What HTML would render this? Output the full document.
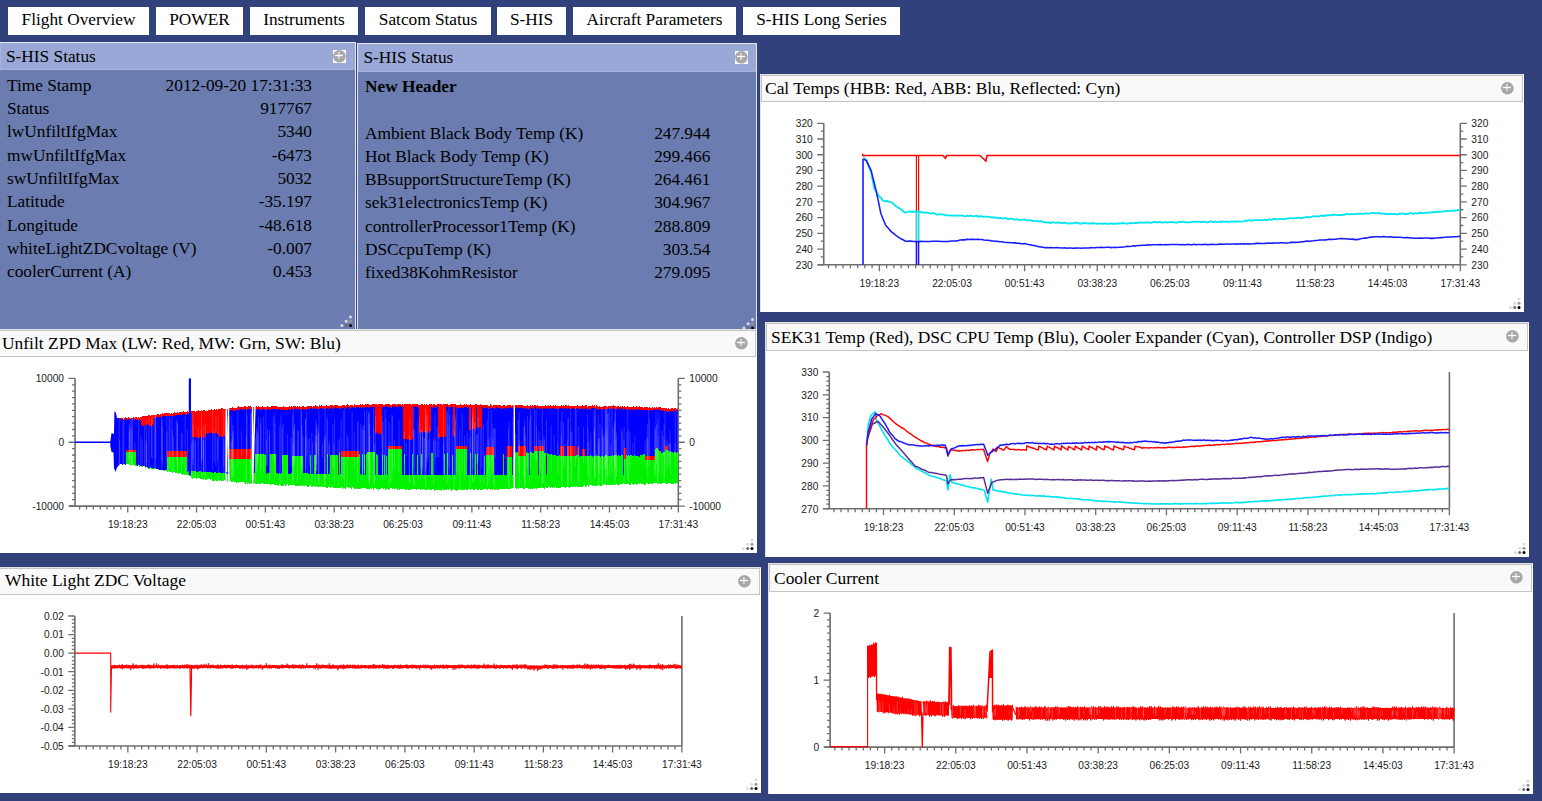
<!DOCTYPE html>
<html><head><meta charset="utf-8"><style>
html,body{margin:0;padding:0;width:1542px;height:801px;overflow:hidden;background:#31417b}
svg text{white-space:pre}
</style></head><body>
<svg width="1542" height="801" viewBox="0 0 1542 801" style="position:absolute;left:0;top:0"><rect x="0" y="0" width="1542" height="801" fill="#31417b" /><rect x="8" y="7" width="141" height="28" fill="#fff" /><text x="78.5" y="25.2" font-family="Liberation Serif" font-size="17.3" text-anchor="middle" fill="#000">Flight Overview</text><rect x="156" y="7" width="87" height="28" fill="#fff" /><text x="199.5" y="25.2" font-family="Liberation Serif" font-size="17.3" text-anchor="middle" fill="#000">POWER</text><rect x="250" y="7" width="108" height="28" fill="#fff" /><text x="304.0" y="25.2" font-family="Liberation Serif" font-size="17.3" text-anchor="middle" fill="#000">Instruments</text><rect x="365" y="7" width="126" height="28" fill="#fff" /><text x="428.0" y="25.2" font-family="Liberation Serif" font-size="17.3" text-anchor="middle" fill="#000">Satcom Status</text><rect x="497" y="7" width="69" height="28" fill="#fff" /><text x="531.5" y="25.2" font-family="Liberation Serif" font-size="17.3" text-anchor="middle" fill="#000">S-HIS</text><rect x="573" y="7" width="163" height="28" fill="#fff" /><text x="654.5" y="25.2" font-family="Liberation Serif" font-size="17.3" text-anchor="middle" fill="#000">Aircraft Parameters</text><rect x="743" y="7" width="157" height="28" fill="#fff" /><text x="821.5" y="25.2" font-family="Liberation Serif" font-size="17.3" text-anchor="middle" fill="#000">S-HIS Long Series</text><rect x="0" y="42" width="356" height="287" fill="#e4e6ee" /><rect x="0" y="43" width="355" height="286" fill="#6b7db0" /><rect x="0" y="43" width="355" height="27" fill="#a6b2de" /><rect x="1" y="43" width="354" height="26" fill="#9aa8d8" /><text x="6" y="62" font-family="Liberation Serif" font-size="17.3" text-anchor="start" fill="#000">S-HIS Status</text><g transform="translate(333,50)"><rect width="13" height="13" fill="#fff"/><circle cx="6.4" cy="6.3" r="6.3" fill="#a8a8a8"/><path d="M5.9 1.9V9" stroke="#dadada" stroke-width="1.8"/><path d="M2 5.5H10" stroke="#fff" stroke-width="1.3"/></g><text x="7" y="90.8" font-family="Liberation Serif" font-size="17.3" text-anchor="start" fill="#000">Time Stamp</text><text x="312" y="90.8" font-family="Liberation Serif" font-size="17.3" text-anchor="end" fill="#000">2012-09-20 17:31:33</text><text x="7" y="114.1" font-family="Liberation Serif" font-size="17.3" text-anchor="start" fill="#000">Status</text><text x="312" y="114.1" font-family="Liberation Serif" font-size="17.3" text-anchor="end" fill="#000">917767</text><text x="7" y="137.4" font-family="Liberation Serif" font-size="17.3" text-anchor="start" fill="#000">lwUnfiltIfgMax</text><text x="312" y="137.4" font-family="Liberation Serif" font-size="17.3" text-anchor="end" fill="#000">5340</text><text x="7" y="160.7" font-family="Liberation Serif" font-size="17.3" text-anchor="start" fill="#000">mwUnfiltIfgMax</text><text x="312" y="160.7" font-family="Liberation Serif" font-size="17.3" text-anchor="end" fill="#000">-6473</text><text x="7" y="184.0" font-family="Liberation Serif" font-size="17.3" text-anchor="start" fill="#000">swUnfiltIfgMax</text><text x="312" y="184.0" font-family="Liberation Serif" font-size="17.3" text-anchor="end" fill="#000">5032</text><text x="7" y="207.3" font-family="Liberation Serif" font-size="17.3" text-anchor="start" fill="#000">Latitude</text><text x="312" y="207.3" font-family="Liberation Serif" font-size="17.3" text-anchor="end" fill="#000">-35.197</text><text x="7" y="230.60000000000002" font-family="Liberation Serif" font-size="17.3" text-anchor="start" fill="#000">Longitude</text><text x="312" y="230.60000000000002" font-family="Liberation Serif" font-size="17.3" text-anchor="end" fill="#000">-48.618</text><text x="7" y="253.89999999999998" font-family="Liberation Serif" font-size="17.3" text-anchor="start" fill="#000">whiteLightZDCvoltage (V)</text><text x="312" y="253.89999999999998" font-family="Liberation Serif" font-size="17.3" text-anchor="end" fill="#000">-0.007</text><text x="7" y="277.2" font-family="Liberation Serif" font-size="17.3" text-anchor="start" fill="#000">coolerCurrent (A)</text><text x="312" y="277.2" font-family="Liberation Serif" font-size="17.3" text-anchor="end" fill="#000">0.453</text><circle cx="350.5" cy="325.5" r="1.5" fill="#000"/><circle cx="346.2" cy="325.5" r="1.5" fill="#6a6a6a"/><circle cx="341.9" cy="325.5" r="1.5" fill="#dcdcdc"/><circle cx="350.5" cy="321.2" r="1.5" fill="#9a9a9a"/><circle cx="346.2" cy="321.2" r="1.5" fill="#dcdcdc"/><circle cx="350.5" cy="316.9" r="1.5" fill="#dcdcdc"/><rect x="357" y="43" width="400" height="286" fill="#e4e6ee" /><rect x="358" y="44" width="398" height="285" fill="#6b7db0" /><rect x="358" y="44" width="398" height="28" fill="#a6b2de" /><rect x="359" y="44" width="397" height="27" fill="#9aa8d8" /><text x="363.5" y="63" font-family="Liberation Serif" font-size="17.3" text-anchor="start" fill="#000">S-HIS Status</text><g transform="translate(735,51)"><rect width="13" height="13" fill="#fff"/><circle cx="6.4" cy="6.3" r="6.3" fill="#a8a8a8"/><path d="M5.9 1.9V9" stroke="#dadada" stroke-width="1.8"/><path d="M2 5.5H10" stroke="#fff" stroke-width="1.3"/></g><text x="365" y="91.7" font-family="Liberation Serif" font-size="17.3" text-anchor="start" fill="#000" font-weight="bold">New Header</text><text x="365" y="138.7" font-family="Liberation Serif" font-size="17.3" text-anchor="start" fill="#000">Ambient Black Body Temp (K)</text><text x="710.3" y="138.7" font-family="Liberation Serif" font-size="17.3" text-anchor="end" fill="#000">247.944</text><text x="365" y="161.92999999999998" font-family="Liberation Serif" font-size="17.3" text-anchor="start" fill="#000">Hot Black Body Temp (K)</text><text x="710.3" y="161.92999999999998" font-family="Liberation Serif" font-size="17.3" text-anchor="end" fill="#000">299.466</text><text x="365" y="185.16" font-family="Liberation Serif" font-size="17.3" text-anchor="start" fill="#000">BBsupportStructureTemp (K)</text><text x="710.3" y="185.16" font-family="Liberation Serif" font-size="17.3" text-anchor="end" fill="#000">264.461</text><text x="365" y="208.39" font-family="Liberation Serif" font-size="17.3" text-anchor="start" fill="#000">sek31electronicsTemp (K)</text><text x="710.3" y="208.39" font-family="Liberation Serif" font-size="17.3" text-anchor="end" fill="#000">304.967</text><text x="365" y="231.62" font-family="Liberation Serif" font-size="17.3" text-anchor="start" fill="#000">controllerProcessor1Temp (K)</text><text x="710.3" y="231.62" font-family="Liberation Serif" font-size="17.3" text-anchor="end" fill="#000">288.809</text><text x="365" y="254.85" font-family="Liberation Serif" font-size="17.3" text-anchor="start" fill="#000">DSCcpuTemp (K)</text><text x="710.3" y="254.85" font-family="Liberation Serif" font-size="17.3" text-anchor="end" fill="#000">303.54</text><text x="365" y="278.08" font-family="Liberation Serif" font-size="17.3" text-anchor="start" fill="#000">fixed38KohmResistor</text><text x="710.3" y="278.08" font-family="Liberation Serif" font-size="17.3" text-anchor="end" fill="#000">279.095</text><circle cx="752.5" cy="328" r="1.5" fill="#000"/><circle cx="748.2" cy="328" r="1.5" fill="#6a6a6a"/><circle cx="743.9" cy="328" r="1.5" fill="#dcdcdc"/><circle cx="752.5" cy="323.7" r="1.5" fill="#9a9a9a"/><circle cx="748.2" cy="323.7" r="1.5" fill="#dcdcdc"/><circle cx="752.5" cy="319.4" r="1.5" fill="#dcdcdc"/><rect x="760" y="74" width="764" height="238" fill="#e2e2e2" /><rect x="761" y="75" width="763" height="237" fill="#fff" /><rect x="761" y="75" width="762" height="27" fill="#c4c4c4" /><rect x="762" y="76" width="760" height="25" fill="#f9f9f9" /><text x="765" y="94" font-family="Liberation Serif" font-size="17.45" text-anchor="start" fill="#000">Cal Temps (HBB: Red, ABB: Blu, Reflected: Cyn)</text><g transform="translate(1501,82)"><rect width="13" height="13" fill="#fff"/><circle cx="6.4" cy="6.3" r="6.3" fill="#a8a8a8"/><path d="M5.9 1.9V9" stroke="#dadada" stroke-width="1.8"/><path d="M2 5.5H10" stroke="#fff" stroke-width="1.3"/></g><circle cx="1519.0" cy="307.5" r="1.5" fill="#000"/><circle cx="1514.7" cy="307.5" r="1.5" fill="#6a6a6a"/><circle cx="1510.4" cy="307.5" r="1.5" fill="#dcdcdc"/><circle cx="1519.0" cy="303.2" r="1.5" fill="#9a9a9a"/><circle cx="1514.7" cy="303.2" r="1.5" fill="#dcdcdc"/><circle cx="1519.0" cy="298.9" r="1.5" fill="#dcdcdc"/><rect x="-2" y="329" width="759" height="224" fill="#e2e2e2" /><rect x="-1" y="330" width="758" height="223" fill="#fff" /><rect x="-1" y="330" width="757" height="27" fill="#c4c4c4" /><rect x="0" y="331" width="755" height="25" fill="#f9f9f9" /><text x="2" y="348.5" font-family="Liberation Serif" font-size="17.45" text-anchor="start" fill="#000">Unfilt ZPD Max (LW: Red, MW: Grn, SW: Blu)</text><g transform="translate(735,337)"><rect width="13" height="13" fill="#fff"/><circle cx="6.4" cy="6.3" r="6.3" fill="#a8a8a8"/><path d="M5.9 1.9V9" stroke="#dadada" stroke-width="1.8"/><path d="M2 5.5H10" stroke="#fff" stroke-width="1.3"/></g><circle cx="752.0" cy="548.5" r="1.5" fill="#000"/><circle cx="747.7" cy="548.5" r="1.5" fill="#6a6a6a"/><circle cx="743.4" cy="548.5" r="1.5" fill="#dcdcdc"/><circle cx="752.0" cy="544.2" r="1.5" fill="#9a9a9a"/><circle cx="747.7" cy="544.2" r="1.5" fill="#dcdcdc"/><circle cx="752.0" cy="539.9" r="1.5" fill="#dcdcdc"/><rect x="765" y="322" width="764" height="235" fill="#e2e2e2" /><rect x="766" y="323" width="763" height="234" fill="#fff" /><rect x="766" y="323" width="762" height="28" fill="#c4c4c4" /><rect x="767" y="324" width="760" height="26" fill="#f9f9f9" /><text x="771" y="342.5" font-family="Liberation Serif" font-size="17.45" text-anchor="start" fill="#000">SEK31 Temp (Red), DSC CPU Temp (Blu), Cooler Expander (Cyan), Controller DSP (Indigo)</text><g transform="translate(1506,330)"><rect width="13" height="13" fill="#fff"/><circle cx="6.4" cy="6.3" r="6.3" fill="#a8a8a8"/><path d="M5.9 1.9V9" stroke="#dadada" stroke-width="1.8"/><path d="M2 5.5H10" stroke="#fff" stroke-width="1.3"/></g><circle cx="1524.0" cy="552.5" r="1.5" fill="#000"/><circle cx="1519.7" cy="552.5" r="1.5" fill="#6a6a6a"/><circle cx="1515.4" cy="552.5" r="1.5" fill="#dcdcdc"/><circle cx="1524.0" cy="548.2" r="1.5" fill="#9a9a9a"/><circle cx="1519.7" cy="548.2" r="1.5" fill="#dcdcdc"/><circle cx="1524.0" cy="543.9" r="1.5" fill="#dcdcdc"/><rect x="-2" y="567" width="763" height="226" fill="#e2e2e2" /><rect x="-1" y="568" width="762" height="225" fill="#fff" /><rect x="-1" y="568" width="761" height="27" fill="#c4c4c4" /><rect x="0" y="569" width="759" height="25" fill="#f9f9f9" /><text x="5" y="586.4" font-family="Liberation Serif" font-size="17.45" text-anchor="start" fill="#000">White Light ZDC Voltage</text><g transform="translate(738,575)"><rect width="13" height="13" fill="#fff"/><circle cx="6.4" cy="6.3" r="6.3" fill="#a8a8a8"/><path d="M5.9 1.9V9" stroke="#dadada" stroke-width="1.8"/><path d="M2 5.5H10" stroke="#fff" stroke-width="1.3"/></g><circle cx="756.0" cy="788.5" r="1.5" fill="#000"/><circle cx="751.7" cy="788.5" r="1.5" fill="#6a6a6a"/><circle cx="747.4" cy="788.5" r="1.5" fill="#dcdcdc"/><circle cx="756.0" cy="784.2" r="1.5" fill="#9a9a9a"/><circle cx="751.7" cy="784.2" r="1.5" fill="#dcdcdc"/><circle cx="756.0" cy="779.9" r="1.5" fill="#dcdcdc"/><rect x="768" y="563" width="765" height="231" fill="#e2e2e2" /><rect x="769" y="564" width="764" height="230" fill="#fff" /><rect x="769" y="564" width="763" height="28" fill="#c4c4c4" /><rect x="770" y="565" width="761" height="26" fill="#f9f9f9" /><text x="774" y="584" font-family="Liberation Serif" font-size="17.45" text-anchor="start" fill="#000">Cooler Current</text><g transform="translate(1510,571)"><rect width="13" height="13" fill="#fff"/><circle cx="6.4" cy="6.3" r="6.3" fill="#a8a8a8"/><path d="M5.9 1.9V9" stroke="#dadada" stroke-width="1.8"/><path d="M2 5.5H10" stroke="#fff" stroke-width="1.3"/></g><circle cx="1528.0" cy="789.5" r="1.5" fill="#000"/><circle cx="1523.7" cy="789.5" r="1.5" fill="#6a6a6a"/><circle cx="1519.4" cy="789.5" r="1.5" fill="#dcdcdc"/><circle cx="1528.0" cy="785.2" r="1.5" fill="#9a9a9a"/><circle cx="1523.7" cy="785.2" r="1.5" fill="#dcdcdc"/><circle cx="1528.0" cy="780.9" r="1.5" fill="#dcdcdc"/><g font-family="Liberation Sans" font-size="10.2" fill="#1a1a1a"><path d="M823.75 123.3V264.8" stroke="#6e6e6e" stroke-width="1.6" fill="none"/><path d="M817.25 264.80H823.75M817.25 249.08H823.75M817.25 233.36H823.75M817.25 217.63H823.75M817.25 201.91H823.75M817.25 186.19H823.75M817.25 170.47H823.75M817.25 154.74H823.75M817.25 139.02H823.75M817.25 123.30H823.75M820.75 256.94H823.75M820.75 241.22H823.75M820.75 225.49H823.75M820.75 209.77H823.75M820.75 194.05H823.75M820.75 178.33H823.75M820.75 162.61H823.75M820.75 146.88H823.75M820.75 131.16H823.75M1460.3 264.80H1466.8M1460.3 249.08H1466.8M1460.3 233.36H1466.8M1460.3 217.63H1466.8M1460.3 201.91H1466.8M1460.3 186.19H1466.8M1460.3 170.47H1466.8M1460.3 154.74H1466.8M1460.3 139.02H1466.8M1460.3 123.30H1466.8M1460.3 256.94H1463.3M1460.3 241.22H1463.3M1460.3 225.49H1463.3M1460.3 209.77H1463.3M1460.3 194.05H1463.3M1460.3 178.33H1463.3M1460.3 162.61H1463.3M1460.3 146.88H1463.3M1460.3 131.16H1463.3" stroke="#6e6e6e" stroke-width="1.3" fill="none"/><path d="M1460.3 123.3V264.8" stroke="#6e6e6e" stroke-width="1.6" fill="none"/><path d="M817.75 264.8H1460.3" stroke="#6e6e6e" stroke-width="1.6" fill="none"/><path d="M828.54 264.8V268.3M835.80 264.8V268.3M843.07 264.8V268.3M850.33 264.8V268.3M857.59 264.8V268.3M864.85 264.8V268.3M872.11 264.8V268.3M879.37 264.8V271.3M886.64 264.8V268.3M893.90 264.8V268.3M901.16 264.8V268.3M908.42 264.8V268.3M915.68 264.8V268.3M922.94 264.8V268.3M930.20 264.8V268.3M937.47 264.8V268.3M944.73 264.8V268.3M951.99 264.8V271.3M959.25 264.8V268.3M966.51 264.8V268.3M973.77 264.8V268.3M981.04 264.8V268.3M988.30 264.8V268.3M995.56 264.8V268.3M1002.82 264.8V268.3M1010.08 264.8V268.3M1017.34 264.8V268.3M1024.61 264.8V271.3M1031.87 264.8V268.3M1039.13 264.8V268.3M1046.39 264.8V268.3M1053.65 264.8V268.3M1060.91 264.8V268.3M1068.17 264.8V268.3M1075.44 264.8V268.3M1082.70 264.8V268.3M1089.96 264.8V268.3M1097.22 264.8V271.3M1104.48 264.8V268.3M1111.74 264.8V268.3M1119.01 264.8V268.3M1126.27 264.8V268.3M1133.53 264.8V268.3M1140.79 264.8V268.3M1148.05 264.8V268.3M1155.31 264.8V268.3M1162.58 264.8V268.3M1169.84 264.8V271.3M1177.10 264.8V268.3M1184.36 264.8V268.3M1191.62 264.8V268.3M1198.88 264.8V268.3M1206.14 264.8V268.3M1213.41 264.8V268.3M1220.67 264.8V268.3M1227.93 264.8V268.3M1235.19 264.8V268.3M1242.45 264.8V271.3M1249.71 264.8V268.3M1256.98 264.8V268.3M1264.24 264.8V268.3M1271.50 264.8V268.3M1278.76 264.8V268.3M1286.02 264.8V268.3M1293.28 264.8V268.3M1300.55 264.8V268.3M1307.81 264.8V268.3M1315.07 264.8V271.3M1322.33 264.8V268.3M1329.59 264.8V268.3M1336.85 264.8V268.3M1344.11 264.8V268.3M1351.38 264.8V268.3M1358.64 264.8V268.3M1365.90 264.8V268.3M1373.16 264.8V268.3M1380.42 264.8V268.3M1387.68 264.8V271.3M1394.95 264.8V268.3M1402.21 264.8V268.3M1409.47 264.8V268.3M1416.73 264.8V268.3M1423.99 264.8V268.3M1431.25 264.8V268.3M1438.52 264.8V268.3M1445.78 264.8V268.3M1453.04 264.8V268.3M1460.30 264.8V271.3" stroke="#6e6e6e" stroke-width="1.3" fill="none"/><text x="812.75" y="268.60" text-anchor="end">230</text><text x="1471.3" y="268.60">230</text><text x="812.75" y="252.88" text-anchor="end">240</text><text x="1471.3" y="252.88">240</text><text x="812.75" y="237.16" text-anchor="end">250</text><text x="1471.3" y="237.16">250</text><text x="812.75" y="221.43" text-anchor="end">260</text><text x="1471.3" y="221.43">260</text><text x="812.75" y="205.71" text-anchor="end">270</text><text x="1471.3" y="205.71">270</text><text x="812.75" y="189.99" text-anchor="end">280</text><text x="1471.3" y="189.99">280</text><text x="812.75" y="174.27" text-anchor="end">290</text><text x="1471.3" y="174.27">290</text><text x="812.75" y="158.54" text-anchor="end">300</text><text x="1471.3" y="158.54">300</text><text x="812.75" y="142.82" text-anchor="end">310</text><text x="1471.3" y="142.82">310</text><text x="812.75" y="127.10" text-anchor="end">320</text><text x="1471.3" y="127.10">320</text><text x="879.37" y="287.10" text-anchor="middle">19:18:23</text><text x="951.99" y="287.10" text-anchor="middle">22:05:03</text><text x="1024.61" y="287.10" text-anchor="middle">00:51:43</text><text x="1097.22" y="287.10" text-anchor="middle">03:38:23</text><text x="1169.84" y="287.10" text-anchor="middle">06:25:03</text><text x="1242.45" y="287.10" text-anchor="middle">09:11:43</text><text x="1315.07" y="287.10" text-anchor="middle">11:58:23</text><text x="1387.68" y="287.10" text-anchor="middle">14:45:03</text><text x="1460.30" y="287.10" text-anchor="middle">17:31:43</text></g><path d="M916.4 155.5V264.8M918.6 155.5V264.8" stroke="#ff0000" stroke-width="1.2" fill="none"/><path d="M862.70 153.80 L862.70 155.50 L916.40 155.50 L918.60 155.50 L943.00 155.50 L945.50 158.50 L946.50 155.50 L980.00 155.50 L986.00 161.20 L987.00 155.50 L1460.30 155.50" stroke="#ff0000" stroke-width="1.5" fill="none" stroke-linejoin="round" /><path d="M863.50 157.44 L864.85 158.82 L866.20 160.51 L867.40 162.96 L868.60 166.01 L869.80 169.10 L871.00 171.62 L872.13 177.58 L873.27 183.29 L874.40 189.05 L875.60 190.31 L876.80 192.66 L878.00 194.51 L879.00 196.35 L880.00 197.20 L881.00 197.40 L882.00 199.51 L883.00 200.47 L884.00 201.08 L885.06 201.27 L886.11 200.95 L887.17 201.00 L888.23 201.85 L889.29 201.51 L890.34 201.90 L891.40 202.19 L892.50 202.77 L893.60 204.12 L894.70 204.93 L895.80 206.24 L896.90 206.69 L898.00 207.67 L899.03 208.17 L900.06 209.04 L901.09 209.46 L902.11 209.92 L903.14 211.45 L904.17 212.12 L905.20 212.61 L906.24 212.38 L907.27 211.83 L908.31 211.66 L909.35 211.66 L910.38 211.32 L911.42 212.08 L912.45 211.57 L913.49 212.03 L914.53 211.41 L915.56 212.02 L916.60 211.40 L916.60 211.75 L918.14 211.11 L919.68 211.52 L921.22 212.43 L922.76 212.19 L924.30 212.91 L925.84 212.53 L927.38 212.41 L928.92 213.17 L930.46 213.52 L932.00 213.22 L933.54 213.24 L935.08 213.69 L936.62 214.53 L938.16 214.53 L939.70 214.09 L941.24 214.43 L942.78 214.49 L944.32 214.65 L945.86 215.59 L947.40 215.18 L948.93 215.59 L950.47 215.50 L952.00 215.27 L953.53 215.84 L955.07 215.27 L956.60 215.81 L958.13 215.31 L959.67 215.64 L961.20 215.46 L962.73 215.55 L964.27 216.28 L965.80 216.14 L967.33 215.67 L968.87 216.27 L970.40 215.63 L971.93 215.84 L973.47 216.33 L975.00 216.14 L976.56 215.73 L978.12 216.74 L979.69 216.09 L981.25 216.26 L982.81 216.90 L984.38 216.58 L985.94 216.67 L987.50 216.57 L989.06 216.72 L990.62 217.33 L992.19 217.12 L993.75 217.60 L995.31 217.50 L996.88 217.70 L998.44 218.33 L1000.00 217.98 L1001.50 218.19 L1003.00 218.61 L1004.50 218.04 L1006.00 218.13 L1007.50 219.01 L1009.00 219.04 L1010.50 218.59 L1012.00 218.65 L1013.50 219.32 L1015.00 219.64 L1016.50 219.02 L1018.00 219.89 L1019.50 219.94 L1021.00 219.78 L1022.50 219.72 L1024.00 219.52 L1025.50 219.58 L1027.00 220.62 L1028.50 220.02 L1030.00 220.60 L1031.54 220.33 L1033.08 221.08 L1034.62 221.03 L1036.15 220.90 L1037.69 220.96 L1039.23 221.68 L1040.77 221.21 L1042.31 221.54 L1043.85 222.05 L1045.38 222.52 L1046.92 222.46 L1048.46 222.30 L1050.00 223.12 L1051.56 222.44 L1053.12 222.28 L1054.69 222.56 L1056.25 222.77 L1057.81 222.42 L1059.38 222.56 L1060.94 222.79 L1062.50 223.02 L1064.06 222.61 L1065.62 222.87 L1067.19 223.43 L1068.75 223.56 L1070.31 223.26 L1071.88 223.33 L1073.44 223.25 L1075.00 222.84 L1076.50 222.75 L1078.00 222.74 L1079.50 223.64 L1081.00 223.44 L1082.50 223.72 L1084.00 222.79 L1085.50 223.41 L1087.00 223.27 L1088.50 223.53 L1090.00 223.13 L1091.50 223.82 L1093.00 222.90 L1094.50 223.39 L1096.00 223.59 L1097.50 223.76 L1099.00 223.61 L1100.50 223.59 L1102.00 223.69 L1103.50 223.82 L1105.00 223.27 L1106.50 223.61 L1108.00 223.84 L1109.50 223.82 L1111.00 223.37 L1112.50 223.76 L1114.00 223.84 L1115.50 223.56 L1117.00 223.62 L1118.50 223.33 L1120.00 223.48 L1121.50 223.46 L1123.00 222.88 L1124.50 223.39 L1126.00 223.69 L1127.50 223.53 L1129.00 223.33 L1130.50 222.94 L1132.00 223.24 L1133.50 223.03 L1135.00 222.84 L1136.50 223.19 L1138.00 222.38 L1139.50 223.00 L1141.00 222.23 L1142.50 222.75 L1144.00 222.58 L1145.50 222.28 L1147.00 222.70 L1148.50 222.45 L1150.00 222.51 L1151.52 222.81 L1153.03 222.13 L1154.55 221.87 L1156.06 222.14 L1157.58 222.50 L1159.09 222.01 L1160.61 221.96 L1162.12 222.68 L1163.64 222.42 L1165.15 222.19 L1166.67 222.63 L1168.18 222.05 L1169.70 222.37 L1171.21 221.89 L1172.73 222.10 L1174.24 222.46 L1175.76 222.56 L1177.27 222.51 L1178.79 222.00 L1180.30 222.18 L1181.82 221.90 L1183.33 221.70 L1184.85 222.05 L1186.36 222.37 L1187.88 222.37 L1189.39 222.22 L1190.91 222.44 L1192.42 221.75 L1193.94 221.63 L1195.45 221.90 L1196.97 221.71 L1198.48 221.63 L1200.00 221.81 L1201.50 222.03 L1203.00 221.89 L1204.50 221.72 L1206.00 222.24 L1207.50 222.38 L1209.00 221.85 L1210.50 221.47 L1212.00 221.43 L1213.50 222.27 L1215.00 221.44 L1216.50 222.11 L1218.00 221.97 L1219.50 221.71 L1221.00 222.19 L1222.50 221.42 L1224.00 221.54 L1225.50 221.85 L1227.00 221.42 L1228.50 222.23 L1230.00 221.64 L1231.51 221.45 L1233.02 221.27 L1234.53 221.76 L1236.05 221.48 L1237.56 221.58 L1239.07 221.51 L1240.58 221.57 L1242.09 221.63 L1243.60 221.27 L1245.12 220.69 L1246.63 220.88 L1248.14 220.49 L1249.65 220.23 L1251.16 220.60 L1252.67 220.75 L1254.19 220.13 L1255.70 220.13 L1257.21 220.11 L1258.72 220.37 L1260.23 220.11 L1261.74 220.11 L1263.26 220.16 L1264.77 219.71 L1266.28 220.02 L1267.79 220.04 L1269.30 219.13 L1270.81 219.88 L1272.33 219.58 L1273.84 218.90 L1275.35 219.13 L1276.86 219.21 L1278.37 219.41 L1279.88 218.78 L1281.40 218.89 L1282.91 219.10 L1284.42 218.93 L1285.93 218.99 L1287.44 218.42 L1288.95 218.51 L1290.47 217.98 L1291.98 218.40 L1293.49 218.41 L1295.00 218.14 L1296.54 218.10 L1298.08 217.47 L1299.62 218.04 L1301.15 218.00 L1302.69 217.88 L1304.23 217.32 L1305.77 217.46 L1307.31 216.87 L1308.85 217.34 L1310.38 217.16 L1311.92 216.54 L1313.46 216.15 L1315.00 216.39 L1316.54 216.38 L1318.08 216.48 L1319.62 216.08 L1321.15 215.50 L1322.69 216.16 L1324.23 215.30 L1325.77 215.92 L1327.31 215.17 L1328.85 215.21 L1330.38 215.55 L1331.92 214.78 L1333.46 214.67 L1335.00 214.92 L1336.54 215.05 L1338.08 215.09 L1339.62 214.87 L1341.15 215.05 L1342.69 214.53 L1344.23 214.91 L1345.77 213.97 L1347.31 214.04 L1348.85 214.27 L1350.38 213.96 L1351.92 214.32 L1353.46 214.16 L1355.00 213.97 L1356.54 214.22 L1358.08 213.86 L1359.62 213.54 L1361.15 213.54 L1362.69 213.93 L1364.23 213.91 L1365.77 213.15 L1367.31 213.72 L1368.85 213.76 L1370.38 213.24 L1371.92 213.22 L1373.46 212.77 L1375.00 213.04 L1376.50 213.11 L1378.00 213.33 L1379.50 212.86 L1381.00 213.91 L1382.50 213.57 L1384.00 213.56 L1385.50 214.07 L1387.00 213.94 L1388.50 213.98 L1390.00 214.29 L1391.50 213.63 L1393.00 214.06 L1394.50 213.89 L1396.00 214.40 L1397.50 214.32 L1399.00 213.63 L1400.50 213.79 L1402.00 213.41 L1403.50 213.67 L1405.00 214.02 L1406.50 214.06 L1408.00 213.60 L1409.50 213.40 L1411.00 213.23 L1412.50 213.62 L1414.00 213.89 L1415.50 213.05 L1417.00 213.66 L1418.50 212.86 L1420.00 212.99 L1421.54 212.91 L1423.08 213.26 L1424.62 212.78 L1426.15 212.69 L1427.69 212.84 L1429.23 212.21 L1430.77 212.72 L1432.31 212.00 L1433.85 212.27 L1435.38 211.90 L1436.92 211.73 L1438.46 211.95 L1440.00 211.74 L1441.56 211.53 L1443.12 211.42 L1444.68 211.39 L1446.25 210.88 L1447.81 210.77 L1449.37 211.05 L1450.93 210.92 L1452.49 210.66 L1454.05 210.84 L1455.62 210.45 L1457.18 210.55 L1458.74 209.78 L1460.30 209.90" stroke="#00e5ee" stroke-width="1.8" fill="none" stroke-linejoin="round" /><path d="M916.5 211.4V241.4M918.5 211.4V241.4" stroke="#00e5ee" stroke-width="1.3"/><path d="M863.00 264.80 L863.00 159.00" stroke="#1a1aff" stroke-width="1.6" fill="none" stroke-linejoin="round" /><path d="M863.00 159.12 L866.20 160.16 L868.65 165.45 L871.10 170.41 L873.55 180.16 L876.00 190.21 L878.40 201.36 L880.80 213.25 L883.25 219.44 L885.70 225.32 L887.87 227.74 L890.03 230.35 L892.20 232.48 L894.37 234.00 L896.53 235.97 L898.70 237.36 L900.87 238.81 L903.03 239.75 L905.20 241.15 L907.48 241.33 L909.76 241.04 L912.04 241.17 L914.32 241.45 L916.60 241.61 L918.83 241.63 L921.05 241.21 L923.27 241.40 L925.50 241.53 L927.73 241.40 L929.95 241.49 L932.17 241.24 L934.40 241.19 L936.57 241.24 L938.73 241.24 L940.90 241.53 L943.07 241.54 L945.23 241.60 L947.40 241.42 L949.57 241.20 L951.73 240.96 L953.90 241.04 L956.07 240.87 L958.23 240.59 L960.40 239.93 L962.57 239.67 L964.73 239.87 L966.90 239.38 L969.07 239.53 L971.23 239.31 L973.40 239.38 L975.57 239.41 L977.73 239.37 L979.90 239.45 L981.91 239.40 L983.92 239.98 L985.93 240.29 L987.94 240.20 L989.95 240.58 L991.96 240.96 L993.97 241.03 L995.98 241.17 L997.99 241.39 L1000.00 241.81 L1002.08 241.72 L1004.17 242.31 L1006.25 242.43 L1008.33 242.54 L1010.42 242.77 L1012.50 242.81 L1014.58 242.86 L1016.67 243.12 L1018.75 243.23 L1020.83 243.62 L1022.92 243.69 L1025.00 243.58 L1027.00 244.30 L1029.00 244.60 L1031.00 245.01 L1033.00 245.42 L1035.00 245.60 L1037.00 246.24 L1039.00 246.62 L1041.00 246.92 L1043.00 247.34 L1045.00 247.73 L1047.00 247.59 L1049.00 247.78 L1051.00 247.49 L1053.00 247.65 L1055.00 247.75 L1057.00 247.56 L1059.00 247.76 L1061.00 247.94 L1063.00 247.96 L1065.00 247.80 L1067.00 248.19 L1069.00 248.08 L1071.00 247.95 L1073.00 248.15 L1075.00 248.13 L1077.00 248.08 L1079.00 247.97 L1081.00 248.24 L1083.00 248.02 L1085.00 248.01 L1087.00 248.00 L1089.00 248.07 L1091.00 247.56 L1093.00 247.81 L1095.00 247.84 L1097.00 247.56 L1099.00 247.59 L1101.00 247.38 L1103.00 247.41 L1105.00 247.47 L1107.00 247.29 L1109.00 247.33 L1111.00 247.62 L1113.00 247.40 L1115.00 247.34 L1117.00 247.53 L1119.06 247.18 L1121.12 247.24 L1123.19 246.90 L1125.25 246.83 L1127.31 246.31 L1129.38 246.41 L1131.44 246.34 L1133.50 245.82 L1135.56 246.11 L1137.62 245.57 L1139.69 245.57 L1141.75 245.26 L1143.81 245.27 L1145.88 245.17 L1147.94 244.74 L1150.00 245.02 L1152.00 244.75 L1154.00 244.79 L1156.00 244.81 L1158.00 244.68 L1160.00 244.63 L1162.00 244.81 L1164.00 244.75 L1166.00 244.60 L1168.00 244.80 L1170.00 244.58 L1172.00 244.43 L1174.00 244.53 L1176.00 244.42 L1178.00 244.46 L1180.00 244.75 L1182.00 244.55 L1184.00 244.79 L1186.00 244.71 L1188.00 244.35 L1190.00 244.80 L1192.00 244.77 L1194.00 244.32 L1196.00 244.73 L1198.00 244.48 L1200.00 244.49 L1202.00 244.72 L1204.00 244.33 L1206.00 244.45 L1208.00 244.64 L1210.00 244.51 L1212.00 244.36 L1214.00 244.60 L1216.00 244.50 L1218.00 244.37 L1220.00 244.11 L1222.00 244.34 L1224.00 244.24 L1226.00 244.09 L1228.00 244.00 L1230.00 244.21 L1232.03 243.96 L1234.06 244.07 L1236.09 244.12 L1238.12 243.97 L1240.16 243.82 L1242.19 243.92 L1244.22 243.79 L1246.25 243.91 L1248.28 243.74 L1250.31 243.92 L1252.34 243.84 L1254.38 243.68 L1256.41 243.38 L1258.44 243.26 L1260.47 243.60 L1262.50 243.49 L1264.53 243.36 L1266.56 243.17 L1268.59 243.08 L1270.62 243.23 L1272.66 243.12 L1274.69 243.08 L1276.72 243.04 L1278.75 243.05 L1280.78 242.72 L1282.81 242.69 L1284.84 243.01 L1286.88 242.92 L1288.91 242.85 L1290.94 242.38 L1292.97 242.33 L1295.00 242.39 L1297.08 242.26 L1299.17 242.16 L1301.25 241.70 L1303.33 241.72 L1305.42 241.29 L1307.50 241.09 L1309.58 241.19 L1311.67 240.93 L1313.75 240.77 L1315.83 240.44 L1317.92 240.29 L1320.00 239.96 L1322.00 239.90 L1324.00 239.97 L1326.00 239.89 L1328.00 239.39 L1330.00 239.28 L1332.00 239.50 L1334.00 239.29 L1336.00 239.23 L1338.00 238.83 L1340.00 238.81 L1342.00 238.60 L1344.00 238.75 L1346.00 238.68 L1348.00 238.98 L1350.00 239.29 L1352.00 239.11 L1354.00 239.37 L1356.00 239.62 L1358.11 239.40 L1360.22 238.84 L1362.33 238.50 L1364.44 238.05 L1366.56 238.13 L1368.67 237.42 L1370.78 237.11 L1372.89 237.04 L1375.00 236.69 L1377.14 236.82 L1379.29 236.66 L1381.43 236.92 L1383.57 236.60 L1385.71 236.70 L1387.86 236.95 L1390.00 236.69 L1392.00 236.90 L1394.00 237.21 L1396.00 237.30 L1398.00 237.19 L1400.00 237.22 L1402.00 237.43 L1404.00 237.71 L1406.00 237.63 L1408.00 237.61 L1410.00 238.00 L1412.08 237.96 L1414.17 238.16 L1416.25 238.19 L1418.33 238.21 L1420.42 237.99 L1422.50 238.20 L1424.58 237.98 L1426.67 238.01 L1428.75 238.07 L1430.83 238.37 L1432.92 238.37 L1435.00 238.07 L1437.00 237.96 L1439.00 237.80 L1441.00 237.63 L1443.00 237.48 L1445.00 237.31 L1447.00 237.05 L1449.22 237.10 L1451.43 237.08 L1453.65 236.82 L1455.87 236.83 L1458.08 236.56 L1460.30 236.40" stroke="#1a1aff" stroke-width="1.55" fill="none" stroke-linejoin="round" /><path d="M916.5 241.4V264.8M918.5 241.4V264.8" stroke="#1a1aff" stroke-width="1.4"/><g font-family="Liberation Sans" font-size="10.2" fill="#1a1a1a"><path d="M829.3 372V508.7" stroke="#6e6e6e" stroke-width="1.6" fill="none"/><path d="M822.8 508.70H829.3M822.8 485.92H829.3M822.8 463.13H829.3M822.8 440.35H829.3M822.8 417.57H829.3M822.8 394.78H829.3M822.8 372.00H829.3M826.3 504.14H829.3M826.3 499.59H829.3M826.3 495.03H829.3M826.3 490.47H829.3M826.3 481.36H829.3M826.3 476.80H829.3M826.3 472.25H829.3M826.3 467.69H829.3M826.3 458.58H829.3M826.3 454.02H829.3M826.3 449.46H829.3M826.3 444.91H829.3M826.3 435.79H829.3M826.3 431.24H829.3M826.3 426.68H829.3M826.3 422.12H829.3M826.3 413.01H829.3M826.3 408.45H829.3M826.3 403.90H829.3M826.3 399.34H829.3M826.3 390.23H829.3M826.3 385.67H829.3M826.3 381.11H829.3M826.3 376.56H829.3" stroke="#6e6e6e" stroke-width="1.3" fill="none"/><path d="M1449.4 372V508.7" stroke="#6e6e6e" stroke-width="1.6" fill="none"/><path d="M823.3 508.7H1449.4" stroke="#6e6e6e" stroke-width="1.6" fill="none"/><path d="M833.97 508.7V512.2M841.04 508.7V512.2M848.12 508.7V512.2M855.19 508.7V512.2M862.26 508.7V512.2M869.34 508.7V512.2M876.41 508.7V512.2M883.49 508.7V515.2M890.56 508.7V512.2M897.63 508.7V512.2M904.71 508.7V512.2M911.78 508.7V512.2M918.86 508.7V512.2M925.93 508.7V512.2M933.00 508.7V512.2M940.08 508.7V512.2M947.15 508.7V512.2M954.23 508.7V515.2M961.30 508.7V512.2M968.37 508.7V512.2M975.45 508.7V512.2M982.52 508.7V512.2M989.60 508.7V512.2M996.67 508.7V512.2M1003.74 508.7V512.2M1010.82 508.7V512.2M1017.89 508.7V512.2M1024.96 508.7V515.2M1032.04 508.7V512.2M1039.11 508.7V512.2M1046.19 508.7V512.2M1053.26 508.7V512.2M1060.33 508.7V512.2M1067.41 508.7V512.2M1074.48 508.7V512.2M1081.56 508.7V512.2M1088.63 508.7V512.2M1095.70 508.7V515.2M1102.78 508.7V512.2M1109.85 508.7V512.2M1116.93 508.7V512.2M1124.00 508.7V512.2M1131.07 508.7V512.2M1138.15 508.7V512.2M1145.22 508.7V512.2M1152.30 508.7V512.2M1159.37 508.7V512.2M1166.44 508.7V515.2M1173.52 508.7V512.2M1180.59 508.7V512.2M1187.66 508.7V512.2M1194.74 508.7V512.2M1201.81 508.7V512.2M1208.89 508.7V512.2M1215.96 508.7V512.2M1223.03 508.7V512.2M1230.11 508.7V512.2M1237.18 508.7V515.2M1244.26 508.7V512.2M1251.33 508.7V512.2M1258.40 508.7V512.2M1265.48 508.7V512.2M1272.55 508.7V512.2M1279.63 508.7V512.2M1286.70 508.7V512.2M1293.77 508.7V512.2M1300.85 508.7V512.2M1307.92 508.7V515.2M1315.00 508.7V512.2M1322.07 508.7V512.2M1329.14 508.7V512.2M1336.22 508.7V512.2M1343.29 508.7V512.2M1350.37 508.7V512.2M1357.44 508.7V512.2M1364.51 508.7V512.2M1371.59 508.7V512.2M1378.66 508.7V515.2M1385.73 508.7V512.2M1392.81 508.7V512.2M1399.88 508.7V512.2M1406.96 508.7V512.2M1414.03 508.7V512.2M1421.10 508.7V512.2M1428.18 508.7V512.2M1435.25 508.7V512.2M1442.33 508.7V512.2M1449.40 508.7V515.2" stroke="#6e6e6e" stroke-width="1.3" fill="none"/><text x="818.3" y="512.50" text-anchor="end">270</text><text x="818.3" y="489.72" text-anchor="end">280</text><text x="818.3" y="466.93" text-anchor="end">290</text><text x="818.3" y="444.15" text-anchor="end">300</text><text x="818.3" y="421.37" text-anchor="end">310</text><text x="818.3" y="398.58" text-anchor="end">320</text><text x="818.3" y="375.80" text-anchor="end">330</text><text x="883.49" y="531.00" text-anchor="middle">19:18:23</text><text x="954.23" y="531.00" text-anchor="middle">22:05:03</text><text x="1024.96" y="531.00" text-anchor="middle">00:51:43</text><text x="1095.70" y="531.00" text-anchor="middle">03:38:23</text><text x="1166.44" y="531.00" text-anchor="middle">06:25:03</text><text x="1237.18" y="531.00" text-anchor="middle">09:11:43</text><text x="1307.92" y="531.00" text-anchor="middle">11:58:23</text><text x="1378.66" y="531.00" text-anchor="middle">14:45:03</text><text x="1449.40" y="531.00" text-anchor="middle">17:31:43</text></g><path d="M866.90 441.27 L868.20 424.85 L871.00 415.28 L873.05 413.67 L875.10 411.84 L876.50 420.85 L878.33 423.52 L880.17 426.98 L882.00 430.47 L883.64 433.05 L885.28 435.96 L886.92 438.25 L888.56 441.22 L890.20 443.85 L891.77 445.78 L893.34 447.56 L894.91 448.98 L896.49 450.86 L898.06 452.65 L899.63 454.79 L901.20 456.46 L902.73 457.32 L904.27 458.92 L905.80 459.75 L907.33 461.26 L908.87 462.19 L910.40 463.33 L911.93 465.08 L913.47 465.90 L915.00 467.13 L916.52 468.43 L918.04 469.21 L919.57 469.71 L921.09 470.95 L922.61 471.55 L924.13 472.47 L925.66 473.03 L927.18 474.32 L928.70 475.01 L930.32 475.73 L931.94 476.25 L933.55 476.44 L935.17 477.03 L936.79 477.47 L938.41 478.01 L940.03 478.52 L941.65 479.22 L943.26 479.95 L944.88 480.15 L946.50 481.11 L947.90 489.90 L950.00 474.79 L952.00 482.59 L953.63 482.82 L955.25 483.16 L956.88 483.70 L958.51 484.27 L960.14 484.32 L961.76 485.30 L963.39 485.17 L965.02 486.04 L966.65 486.53 L968.27 486.47 L969.90 487.37 L971.50 487.43 L973.10 487.87 L974.70 487.84 L976.30 488.17 L977.90 488.56 L979.50 489.34 L981.10 489.20 L982.70 489.84 L984.30 490.26 L986.00 496.42 L987.70 502.21 L989.45 490.56 L991.20 479.01 L993.20 490.17 L994.78 490.05 L996.35 490.71 L997.93 491.03 L999.51 491.35 L1001.08 491.13 L1002.66 491.96 L1004.24 491.73 L1005.81 492.16 L1007.39 492.61 L1008.96 493.07 L1010.54 493.01 L1012.12 493.64 L1013.69 493.70 L1015.27 493.84 L1016.85 494.13 L1018.42 494.32 L1020.00 494.55 L1021.50 494.67 L1023.00 495.08 L1024.50 495.35 L1026.00 494.94 L1027.50 494.95 L1029.00 495.60 L1030.50 495.42 L1032.00 495.42 L1033.50 495.41 L1035.00 495.71 L1036.50 495.93 L1038.00 495.79 L1039.50 495.86 L1041.00 495.72 L1042.50 496.32 L1044.00 495.88 L1045.50 496.24 L1047.00 496.53 L1048.50 496.19 L1050.00 496.64 L1051.52 496.91 L1053.03 496.85 L1054.55 497.08 L1056.06 496.81 L1057.58 497.14 L1059.09 497.11 L1060.61 497.66 L1062.12 497.47 L1063.64 497.70 L1065.15 498.16 L1066.67 498.21 L1068.18 498.42 L1069.70 498.24 L1071.21 498.40 L1072.73 498.68 L1074.24 498.67 L1075.76 498.69 L1077.27 498.90 L1078.79 498.88 L1080.30 499.15 L1081.82 499.66 L1083.33 499.78 L1084.85 499.71 L1086.36 499.77 L1087.88 499.81 L1089.39 499.80 L1090.91 500.05 L1092.42 500.49 L1093.94 500.67 L1095.45 500.51 L1096.97 500.90 L1098.48 501.03 L1100.00 501.12 L1101.52 501.18 L1103.03 501.33 L1104.55 501.17 L1106.06 501.46 L1107.58 501.29 L1109.09 501.50 L1110.61 501.76 L1112.12 501.79 L1113.64 501.64 L1115.15 502.12 L1116.67 502.02 L1118.18 502.07 L1119.70 501.81 L1121.21 502.22 L1122.73 502.12 L1124.24 502.46 L1125.76 502.42 L1127.27 502.72 L1128.79 502.70 L1130.30 502.88 L1131.82 502.69 L1133.33 502.95 L1134.85 503.09 L1136.36 503.23 L1137.88 503.03 L1139.39 503.41 L1140.91 503.51 L1142.42 503.49 L1143.94 503.75 L1145.45 503.82 L1146.97 503.64 L1148.48 503.73 L1150.00 503.60 L1151.52 504.00 L1153.03 504.06 L1154.55 503.79 L1156.06 503.91 L1157.58 503.93 L1159.09 503.94 L1160.61 503.60 L1162.12 503.97 L1163.64 503.85 L1165.15 503.90 L1166.67 503.75 L1168.18 503.87 L1169.70 503.96 L1171.21 503.88 L1172.73 503.93 L1174.24 503.52 L1175.76 503.60 L1177.27 503.76 L1178.79 503.89 L1180.30 503.63 L1181.82 503.91 L1183.33 503.88 L1184.85 503.53 L1186.36 503.78 L1187.88 503.64 L1189.39 503.53 L1190.91 503.58 L1192.42 503.69 L1193.94 503.61 L1195.45 503.62 L1196.97 503.52 L1198.48 503.78 L1200.00 503.73 L1201.54 503.82 L1203.08 503.75 L1204.62 503.49 L1206.15 503.84 L1207.69 503.25 L1209.23 503.44 L1210.77 503.32 L1212.31 503.35 L1213.85 503.12 L1215.38 503.50 L1216.92 503.17 L1218.46 502.92 L1220.00 503.22 L1221.54 502.86 L1223.08 503.08 L1224.62 502.90 L1226.15 503.00 L1227.69 503.17 L1229.23 503.04 L1230.77 502.75 L1232.31 502.94 L1233.85 502.79 L1235.38 502.57 L1236.92 502.39 L1238.46 502.61 L1240.00 502.54 L1241.51 502.67 L1243.02 502.58 L1244.54 502.27 L1246.05 502.01 L1247.56 502.24 L1249.07 501.60 L1250.58 501.56 L1252.10 501.74 L1253.61 501.67 L1255.12 501.28 L1256.63 501.48 L1258.15 501.53 L1259.66 501.13 L1261.17 501.06 L1262.68 500.84 L1264.19 500.77 L1265.71 501.08 L1267.22 500.63 L1268.73 500.88 L1270.24 500.75 L1271.75 500.46 L1273.27 500.16 L1274.78 500.49 L1276.29 500.10 L1277.80 499.95 L1279.32 499.79 L1280.83 500.09 L1282.34 499.70 L1283.85 499.47 L1285.36 499.49 L1286.88 499.17 L1288.39 499.37 L1289.90 499.17 L1291.42 498.95 L1292.93 499.11 L1294.45 499.01 L1295.96 498.39 L1297.48 498.57 L1298.99 498.28 L1300.51 498.55 L1302.02 498.33 L1303.54 497.87 L1305.05 497.76 L1306.57 497.56 L1308.08 497.93 L1309.60 497.38 L1311.11 497.44 L1312.63 497.23 L1314.14 497.20 L1315.66 497.05 L1317.17 497.00 L1318.69 496.50 L1320.20 496.75 L1321.72 496.34 L1323.23 496.35 L1324.75 496.10 L1326.26 495.95 L1327.78 495.96 L1329.29 495.79 L1330.81 495.60 L1332.32 495.70 L1333.84 495.48 L1335.35 495.01 L1336.87 495.01 L1338.38 495.00 L1339.90 495.15 L1341.45 495.07 L1343.00 494.81 L1344.54 494.43 L1346.09 494.82 L1347.64 494.55 L1349.19 494.58 L1350.73 494.60 L1352.28 494.49 L1353.83 494.34 L1355.38 494.54 L1356.93 494.16 L1358.47 494.10 L1360.02 494.32 L1361.57 493.87 L1363.12 493.86 L1364.67 494.12 L1366.21 493.60 L1367.76 494.01 L1369.31 493.86 L1370.86 493.64 L1372.40 493.49 L1373.95 493.73 L1375.50 493.75 L1377.01 493.18 L1378.52 493.28 L1380.02 493.22 L1381.53 493.09 L1383.04 492.89 L1384.55 492.68 L1386.06 492.84 L1387.57 492.87 L1389.07 492.32 L1390.58 492.32 L1392.09 492.57 L1393.60 492.45 L1395.11 492.27 L1396.61 491.79 L1398.12 492.10 L1399.63 492.15 L1401.14 492.06 L1402.65 491.78 L1404.16 491.29 L1405.66 491.66 L1407.17 491.19 L1408.68 491.34 L1410.19 491.42 L1411.70 491.18 L1413.20 490.73 L1414.71 490.72 L1416.22 491.00 L1417.73 490.43 L1419.24 490.61 L1420.74 490.39 L1422.25 490.13 L1423.76 490.31 L1425.27 489.86 L1426.78 489.80 L1428.29 489.86 L1429.79 489.57 L1431.30 489.46 L1432.81 489.67 L1434.32 489.67 L1435.83 489.65 L1437.33 489.10 L1438.84 489.17 L1440.35 489.00 L1441.86 489.07 L1443.37 488.90 L1444.88 489.07 L1446.38 488.63 L1447.89 488.34 L1449.40 488.50" stroke="#00e5ee" stroke-width="1.6" fill="none" stroke-linejoin="round" /><path d="M867.60 438.60 L869.20 433.49 L870.80 428.90 L872.40 424.00 L874.23 423.31 L876.07 422.23 L877.90 421.36 L879.60 423.06 L881.30 425.08 L883.00 426.80 L884.70 428.93 L886.27 430.98 L887.84 432.96 L889.41 435.18 L890.99 437.42 L892.56 439.78 L894.13 441.67 L895.70 444.11 L897.31 445.91 L898.92 447.46 L900.53 449.58 L902.13 451.13 L903.74 452.98 L905.35 455.05 L906.96 456.70 L908.57 458.86 L910.17 460.49 L911.78 462.24 L913.39 464.31 L915.00 465.76 L916.52 466.79 L918.04 467.13 L919.57 467.86 L921.09 468.94 L922.61 469.48 L924.13 469.93 L925.66 470.55 L927.18 471.66 L928.70 472.18 L930.32 472.57 L931.94 472.54 L933.55 473.09 L935.17 473.26 L936.79 473.51 L938.41 473.87 L940.03 474.32 L941.65 474.50 L943.26 474.82 L944.88 475.01 L946.50 475.67 L947.90 483.87 L950.70 479.85 L952.53 479.57 L954.37 479.68 L956.20 479.41 L957.72 479.35 L959.24 479.24 L960.77 479.22 L962.29 478.95 L963.81 478.70 L965.33 478.57 L966.86 478.55 L968.38 478.37 L969.90 478.69 L971.42 478.39 L972.94 478.43 L974.47 477.95 L975.99 478.09 L977.51 478.19 L979.03 477.96 L980.56 477.76 L982.08 477.68 L983.60 477.40 L985.65 485.33 L987.70 493.23 L989.80 487.84 L991.90 482.34 L993.73 481.92 L995.57 480.89 L997.40 480.28 L999.04 480.09 L1000.68 479.83 L1002.32 479.69 L1003.96 479.47 L1005.60 479.39 L1007.12 479.15 L1008.65 479.59 L1010.18 479.30 L1011.70 479.57 L1013.23 479.43 L1014.75 479.41 L1016.27 479.30 L1017.80 479.52 L1019.33 479.10 L1020.85 479.36 L1022.38 479.16 L1023.90 479.34 L1025.42 479.35 L1026.95 479.06 L1028.47 479.06 L1030.00 478.96 L1031.50 479.09 L1033.00 479.04 L1034.50 479.23 L1036.00 479.54 L1037.50 479.26 L1039.00 479.26 L1040.50 479.37 L1042.00 479.30 L1043.50 479.55 L1045.00 479.57 L1046.50 479.32 L1048.00 479.39 L1049.50 479.63 L1051.00 479.79 L1052.50 479.67 L1054.00 479.59 L1055.50 479.88 L1057.00 479.43 L1058.50 479.48 L1060.00 479.86 L1061.50 479.71 L1063.00 479.55 L1064.50 479.83 L1066.00 480.07 L1067.50 479.87 L1069.00 479.81 L1070.50 479.71 L1072.00 479.72 L1073.50 480.16 L1075.00 479.98 L1076.50 480.23 L1078.00 479.82 L1079.50 479.94 L1081.00 479.87 L1082.50 480.07 L1084.00 479.93 L1085.50 480.05 L1087.00 480.15 L1088.50 480.13 L1090.00 480.03 L1091.50 480.05 L1093.00 480.54 L1094.50 480.17 L1096.00 480.36 L1097.50 480.33 L1099.00 480.42 L1100.50 480.23 L1102.00 480.37 L1103.50 480.29 L1105.00 480.53 L1106.50 480.75 L1108.00 480.61 L1109.50 480.77 L1111.00 480.47 L1112.50 480.40 L1114.00 480.69 L1115.50 480.69 L1117.00 480.76 L1118.50 480.69 L1120.00 480.84 L1121.50 480.91 L1123.00 481.03 L1124.50 480.76 L1126.00 480.85 L1127.50 481.07 L1129.00 480.79 L1130.50 480.77 L1132.00 480.89 L1133.50 480.81 L1135.00 481.17 L1136.50 481.22 L1138.00 481.00 L1139.50 480.93 L1141.00 480.93 L1142.50 481.04 L1144.00 480.99 L1145.50 481.19 L1147.00 481.29 L1148.50 481.15 L1150.00 481.08 L1151.50 481.35 L1153.00 480.97 L1154.50 480.99 L1156.00 480.99 L1157.50 480.98 L1159.00 480.79 L1160.50 480.90 L1162.00 480.79 L1163.50 480.96 L1165.00 480.81 L1166.50 480.93 L1168.00 480.76 L1169.50 480.76 L1171.00 480.61 L1172.50 480.50 L1174.00 480.63 L1175.50 480.50 L1177.00 480.60 L1178.50 480.43 L1180.00 480.37 L1181.50 480.10 L1183.00 480.32 L1184.50 480.05 L1186.00 479.88 L1187.50 479.79 L1189.00 479.79 L1190.50 479.79 L1192.00 479.94 L1193.50 479.69 L1195.00 479.53 L1196.50 479.83 L1198.00 479.68 L1199.50 479.36 L1201.00 479.32 L1202.50 479.31 L1204.00 479.37 L1205.50 479.57 L1207.00 479.56 L1208.50 479.34 L1210.00 479.10 L1211.50 479.15 L1213.00 479.06 L1214.50 478.99 L1216.00 478.78 L1217.50 479.02 L1219.00 479.09 L1220.50 478.99 L1222.00 478.62 L1223.50 478.78 L1225.00 478.55 L1226.50 478.77 L1228.00 478.59 L1229.50 478.78 L1231.00 478.66 L1232.50 478.27 L1234.00 478.32 L1235.50 478.56 L1237.00 478.28 L1238.50 478.22 L1240.00 478.17 L1241.51 478.21 L1243.02 478.18 L1244.54 477.85 L1246.05 477.95 L1247.56 477.64 L1249.07 477.27 L1250.58 477.51 L1252.10 477.19 L1253.61 476.89 L1255.12 477.23 L1256.63 476.63 L1258.15 476.78 L1259.66 476.62 L1261.17 476.69 L1262.68 476.33 L1264.19 476.12 L1265.71 476.03 L1267.22 475.87 L1268.73 475.93 L1270.24 475.70 L1271.75 475.78 L1273.27 475.40 L1274.78 475.34 L1276.29 475.17 L1277.80 475.41 L1279.32 475.22 L1280.83 475.10 L1282.34 474.87 L1283.85 474.64 L1285.36 474.39 L1286.88 474.61 L1288.39 474.32 L1289.90 473.97 L1291.42 473.90 L1292.93 473.74 L1294.45 473.92 L1295.96 473.88 L1297.48 473.40 L1298.99 473.57 L1300.51 473.20 L1302.02 473.25 L1303.54 473.21 L1305.05 472.96 L1306.57 472.92 L1308.08 472.57 L1309.60 472.26 L1311.11 472.38 L1312.63 472.29 L1314.14 471.96 L1315.66 471.93 L1317.17 471.76 L1318.69 471.49 L1320.20 471.50 L1321.72 471.41 L1323.23 471.32 L1324.75 471.30 L1326.26 471.02 L1327.78 471.18 L1329.29 470.97 L1330.81 470.89 L1332.32 470.65 L1333.84 470.51 L1335.35 470.31 L1336.87 470.31 L1338.38 469.96 L1339.90 469.95 L1341.45 469.94 L1343.00 469.82 L1344.54 469.65 L1346.09 469.50 L1347.64 469.45 L1349.19 469.54 L1350.73 469.61 L1352.28 469.65 L1353.83 469.58 L1355.38 469.33 L1356.93 469.59 L1358.47 469.21 L1360.02 469.39 L1361.57 469.02 L1363.12 469.31 L1364.67 469.22 L1366.21 469.32 L1367.76 469.24 L1369.31 469.09 L1370.86 469.11 L1372.40 469.01 L1373.95 468.90 L1375.50 468.65 L1377.03 468.84 L1378.56 469.06 L1380.09 468.76 L1381.61 469.15 L1383.14 468.96 L1384.67 468.92 L1386.20 468.75 L1387.73 468.97 L1389.26 468.90 L1390.79 469.16 L1392.31 469.31 L1393.84 469.35 L1395.37 469.23 L1396.90 469.14 L1398.40 468.92 L1399.90 469.13 L1401.40 468.99 L1402.90 468.99 L1404.40 468.74 L1405.90 468.91 L1407.40 468.50 L1408.90 468.46 L1410.40 468.36 L1411.90 468.46 L1413.40 468.52 L1414.90 468.07 L1416.40 468.23 L1417.90 468.21 L1419.40 467.86 L1420.90 467.70 L1422.40 467.87 L1423.90 467.93 L1425.40 467.87 L1426.90 467.71 L1428.40 467.48 L1429.90 467.40 L1431.40 467.37 L1432.90 467.48 L1434.40 467.10 L1435.90 467.01 L1437.40 467.09 L1438.90 467.19 L1440.40 466.72 L1441.90 466.57 L1443.40 466.53 L1444.90 466.67 L1446.40 466.61 L1447.90 466.32 L1449.40 466.40" stroke="#552e96" stroke-width="1.5" fill="none" stroke-linejoin="round" /><path d="M866.50 508.70 L866.50 443.81 L867.60 437.06 L868.95 432.34 L870.30 427.61 L871.43 424.87 L872.57 421.70 L873.70 419.19 L874.75 418.38 L875.80 417.42 L876.85 416.02 L877.90 415.31 L879.03 414.72 L880.17 414.42 L881.30 413.54 L882.33 414.28 L883.37 414.84 L884.40 415.09 L885.43 415.33 L886.47 415.85 L887.50 416.29 L888.52 417.12 L889.55 418.02 L890.58 419.16 L891.60 419.71 L892.62 420.97 L893.65 421.82 L894.68 422.73 L895.70 423.58 L896.77 424.28 L897.83 425.17 L898.90 425.94 L899.97 426.50 L901.03 427.46 L902.10 427.70 L903.17 428.45 L904.23 429.18 L905.30 430.02 L906.38 430.89 L907.46 431.71 L908.53 432.61 L909.61 433.41 L910.69 433.78 L911.77 434.74 L912.84 435.59 L913.92 436.26 L915.00 436.87 L916.07 437.77 L917.13 438.25 L918.20 439.04 L919.27 439.54 L920.33 440.43 L921.40 441.03 L922.47 441.12 L923.53 442.14 L924.60 442.73 L925.67 442.86 L926.73 443.13 L927.80 443.72 L928.87 444.02 L929.93 444.63 L931.00 445.12 L932.07 445.17 L933.13 445.50 L934.20 446.00 L935.23 446.29 L936.25 446.52 L937.28 446.57 L938.30 446.58 L939.33 446.78 L940.35 447.26 L941.38 447.24 L942.40 447.13 L943.42 447.53 L944.45 447.59 L945.48 448.02 L946.50 447.84 L947.90 456.16 L949.30 452.66 L950.70 449.49 L951.73 449.99 L952.75 449.92 L953.77 450.03 L954.80 450.56 L955.83 450.26 L956.85 450.61 L957.88 451.09 L958.90 450.80 L959.91 451.17 L960.92 450.83 L961.93 450.54 L962.94 450.59 L963.95 450.62 L964.95 450.48 L965.96 450.47 L966.97 450.10 L967.98 450.11 L968.99 450.48 L970.00 450.07 L971.05 450.01 L972.09 449.71 L973.14 449.76 L974.18 450.10 L975.23 449.87 L976.28 449.69 L977.32 449.35 L978.37 449.48 L979.42 449.64 L980.46 449.37 L981.51 449.39 L982.55 449.51 L983.60 449.29 L984.90 453.48 L986.20 457.32 L987.50 461.51 L988.65 457.86 L989.80 453.55 L990.93 452.22 L992.07 450.60 L993.20 449.05 L994.60 450.08 L996.00 451.80 L997.00 449.60 L998.00 447.64 L999.03 447.64 L1000.07 448.47 L1001.10 448.70 L1002.13 449.48 L1003.17 449.95 L1004.20 449.93 L1005.25 448.35 L1006.30 446.56 L1007.43 447.62 L1008.57 448.44 L1009.70 449.60 L1010.74 449.30 L1011.78 449.35 L1012.81 449.55 L1013.85 449.34 L1014.89 449.55 L1015.92 449.89 L1016.96 449.91 L1018.00 449.52 L1019.04 449.44 L1020.08 449.95 L1021.11 450.05 L1022.15 449.86 L1023.19 449.61 L1024.22 449.69 L1025.26 450.13 L1026.30 449.90 L1026.30 450.16 L1026.90 445.82 L1027.93 446.26 L1028.95 446.75 L1029.98 447.00 L1031.01 447.63 L1032.04 447.75 L1033.06 448.34 L1034.09 448.31 L1035.12 448.87 L1036.15 449.49 L1037.17 449.68 L1038.20 449.65 L1038.30 449.67 L1038.90 446.19 L1039.99 446.57 L1041.07 447.11 L1042.16 447.72 L1043.24 448.32 L1044.33 449.09 L1045.41 449.20 L1046.50 449.94 L1046.60 449.76 L1047.20 446.13 L1048.30 446.87 L1049.40 447.15 L1050.50 447.99 L1051.60 448.76 L1052.70 448.97 L1053.80 450.06 L1053.90 449.85 L1054.50 446.10 L1055.57 446.80 L1056.63 447.54 L1057.70 447.73 L1058.77 448.63 L1059.83 448.99 L1060.90 449.83 L1061.00 449.81 L1061.60 445.81 L1062.63 446.61 L1063.67 447.34 L1064.70 448.09 L1065.73 448.89 L1066.77 449.19 L1067.80 449.92 L1067.90 450.03 L1068.50 446.36 L1069.50 447.00 L1070.50 447.66 L1071.50 447.88 L1072.50 448.43 L1073.50 449.53 L1074.50 449.65 L1074.60 449.87 L1075.20 446.24 L1076.25 446.75 L1077.30 447.30 L1078.35 448.25 L1079.40 448.51 L1080.45 449.30 L1081.50 450.10 L1081.60 449.68 L1082.20 446.01 L1083.25 446.73 L1084.30 447.41 L1085.35 447.82 L1086.40 448.61 L1087.45 449.00 L1088.50 449.65 L1088.60 449.81 L1089.20 445.89 L1090.21 446.92 L1091.23 447.04 L1092.24 447.59 L1093.26 448.44 L1094.27 448.96 L1095.29 449.21 L1096.30 450.10 L1096.40 449.98 L1097.00 446.03 L1098.01 446.72 L1099.03 447.03 L1100.04 447.59 L1101.06 448.50 L1102.07 448.78 L1103.09 449.60 L1104.10 449.71 L1104.20 449.68 L1104.80 445.83 L1105.88 446.72 L1106.95 447.09 L1108.03 447.23 L1109.10 447.73 L1110.17 448.67 L1111.25 448.95 L1112.33 449.65 L1113.40 449.62 L1113.50 449.95 L1114.10 445.87 L1115.14 446.65 L1116.19 447.01 L1117.23 447.43 L1118.28 447.62 L1119.32 448.48 L1120.37 448.40 L1121.41 448.79 L1122.46 449.59 L1123.50 449.66 L1123.60 449.64 L1124.20 446.08 L1125.22 446.57 L1126.24 447.10 L1127.26 447.37 L1128.28 447.36 L1129.30 448.09 L1130.32 448.59 L1131.34 448.53 L1132.36 449.29 L1133.38 449.38 L1134.40 449.78 L1134.50 449.60 L1135.10 446.25 L1136.11 446.38 L1137.13 446.88 L1138.14 446.89 L1139.16 446.98 L1140.17 447.29 L1141.19 447.59 L1142.20 448.27 L1143.20 447.80 L1144.20 447.71 L1145.20 447.85 L1146.20 447.67 L1147.20 447.85 L1148.20 447.95 L1149.20 447.95 L1150.20 447.64 L1151.20 447.60 L1152.20 447.79 L1153.20 447.89 L1154.20 447.72 L1155.20 447.78 L1156.20 447.96 L1157.20 447.48 L1158.20 447.53 L1159.20 447.65 L1160.20 447.65 L1161.20 447.85 L1162.20 447.62 L1163.20 447.67 L1164.20 447.50 L1165.20 447.70 L1166.20 447.71 L1167.20 447.36 L1168.20 447.23 L1169.20 447.30 L1170.20 447.34 L1171.20 447.64 L1172.20 447.24 L1173.20 447.44 L1174.20 447.43 L1175.20 447.60 L1176.20 447.07 L1177.20 447.44 L1178.20 447.16 L1179.20 447.00 L1180.20 447.30 L1181.20 447.41 L1182.21 447.18 L1183.22 446.79 L1184.24 447.28 L1185.25 446.86 L1186.26 446.94 L1187.27 446.93 L1188.28 446.58 L1189.29 446.60 L1190.31 446.49 L1191.32 446.28 L1192.33 446.19 L1193.34 446.52 L1194.35 446.27 L1195.36 446.47 L1196.38 445.92 L1197.39 446.00 L1198.40 445.86 L1199.41 446.25 L1200.42 446.09 L1201.44 446.08 L1202.45 445.78 L1203.46 445.47 L1204.47 445.59 L1205.48 445.41 L1206.49 445.22 L1207.51 445.48 L1208.52 445.25 L1209.53 445.07 L1210.54 445.25 L1211.55 445.43 L1212.56 445.37 L1213.58 445.01 L1214.59 444.73 L1215.60 445.06 L1216.61 444.60 L1217.62 444.79 L1218.64 444.45 L1219.65 444.92 L1220.66 444.59 L1221.67 444.46 L1222.68 444.29 L1223.69 444.39 L1224.71 444.57 L1225.72 444.18 L1226.73 443.98 L1227.74 444.10 L1228.75 444.27 L1229.76 443.88 L1230.78 443.97 L1231.79 444.07 L1232.80 443.65 L1233.81 443.87 L1234.82 443.63 L1235.84 443.33 L1236.85 443.21 L1237.86 443.68 L1238.87 443.32 L1239.88 443.24 L1240.89 443.46 L1241.91 443.19 L1242.92 443.07 L1243.93 442.88 L1244.94 443.08 L1245.95 442.72 L1246.96 442.79 L1247.98 442.89 L1248.99 442.73 L1250.00 442.38 L1251.01 442.33 L1252.02 442.54 L1253.03 442.47 L1254.04 442.01 L1255.05 442.45 L1256.06 441.85 L1257.07 441.78 L1258.08 441.64 L1259.09 441.77 L1260.10 441.78 L1261.11 441.84 L1262.12 441.33 L1263.13 441.57 L1264.14 441.12 L1265.15 441.32 L1266.16 441.03 L1267.17 441.00 L1268.18 440.73 L1269.19 441.05 L1270.20 440.60 L1271.21 440.89 L1272.22 440.55 L1273.23 440.61 L1274.24 440.55 L1275.25 440.37 L1276.26 440.52 L1277.27 440.46 L1278.28 439.98 L1279.29 439.93 L1280.30 440.16 L1281.31 439.63 L1282.32 439.71 L1283.33 439.62 L1284.34 439.87 L1285.35 439.27 L1286.36 439.50 L1287.37 439.47 L1288.38 439.36 L1289.39 438.84 L1290.40 439.32 L1291.41 438.85 L1292.42 439.08 L1293.43 438.88 L1294.44 438.65 L1295.46 438.81 L1296.47 438.62 L1297.48 438.33 L1298.49 438.48 L1299.50 438.25 L1300.51 438.29 L1301.52 438.14 L1302.53 438.16 L1303.54 437.69 L1304.55 437.80 L1305.56 437.42 L1306.57 437.80 L1307.58 437.70 L1308.59 437.65 L1309.60 437.09 L1310.61 437.30 L1311.62 437.17 L1312.63 436.87 L1313.64 436.83 L1314.65 437.20 L1315.66 437.04 L1316.67 436.58 L1317.68 436.85 L1318.69 436.65 L1319.70 436.41 L1320.71 436.47 L1321.72 436.14 L1322.73 436.07 L1323.74 435.83 L1324.75 436.13 L1325.76 435.99 L1326.77 436.00 L1327.78 435.77 L1328.79 435.64 L1329.80 435.47 L1330.81 435.64 L1331.82 435.33 L1332.83 435.38 L1333.84 435.39 L1334.85 435.11 L1335.86 435.17 L1336.87 434.70 L1337.88 434.73 L1338.89 434.99 L1339.90 434.49 L1340.92 434.39 L1341.94 434.32 L1342.96 434.72 L1343.98 434.28 L1345.00 434.45 L1346.01 434.39 L1347.03 434.57 L1348.05 434.32 L1349.07 434.31 L1350.09 433.96 L1351.11 434.38 L1352.13 434.32 L1353.15 434.19 L1354.17 434.27 L1355.19 434.09 L1356.20 434.11 L1357.22 434.14 L1358.24 433.96 L1359.26 433.55 L1360.28 434.03 L1361.30 434.04 L1362.32 433.53 L1363.34 433.40 L1364.36 433.52 L1365.38 433.33 L1366.40 433.45 L1367.41 433.23 L1368.43 433.27 L1369.45 433.09 L1370.47 433.30 L1371.49 433.18 L1372.51 433.39 L1373.53 433.14 L1374.55 432.96 L1375.57 433.39 L1376.59 433.31 L1377.60 433.14 L1378.62 432.81 L1379.64 432.88 L1380.66 432.86 L1381.68 432.79 L1382.70 432.52 L1383.71 432.72 L1384.72 432.85 L1385.73 432.76 L1386.74 432.80 L1387.75 432.64 L1388.76 432.64 L1389.77 432.65 L1390.78 432.63 L1391.80 432.50 L1392.81 432.22 L1393.82 432.31 L1394.83 432.26 L1395.84 432.34 L1396.85 432.19 L1397.86 431.97 L1398.87 431.77 L1399.88 431.79 L1400.89 431.70 L1401.90 431.90 L1402.91 431.90 L1403.92 431.50 L1404.93 431.65 L1405.94 431.78 L1406.95 431.45 L1407.97 431.23 L1408.98 431.48 L1409.99 431.29 L1411.00 431.10 L1412.01 431.13 L1413.02 430.91 L1414.03 430.95 L1415.04 431.06 L1416.05 430.81 L1417.06 430.70 L1418.07 430.97 L1419.08 431.17 L1420.09 431.04 L1421.10 430.68 L1422.11 430.99 L1423.12 430.43 L1424.13 430.42 L1425.15 430.28 L1426.16 430.25 L1427.17 430.53 L1428.18 430.57 L1429.19 430.35 L1430.20 430.49 L1431.21 430.23 L1432.22 430.45 L1433.23 430.21 L1434.24 430.12 L1435.25 429.84 L1436.26 429.95 L1437.27 429.90 L1438.28 430.08 L1439.29 429.67 L1440.30 429.65 L1441.32 429.91 L1442.33 429.41 L1443.34 429.64 L1444.35 429.40 L1445.36 429.61 L1446.37 429.52 L1447.38 429.16 L1448.39 429.49 L1449.40 429.30" stroke="#ff0000" stroke-width="1.45" fill="none" stroke-linejoin="round" /><path d="M866.90 445.24 L868.20 431.47 L869.37 427.72 L870.53 423.53 L871.70 419.07 L872.73 417.95 L873.75 416.19 L874.77 415.09 L875.80 413.41 L876.93 414.27 L878.07 414.92 L879.20 415.20 L880.30 416.44 L881.40 418.43 L882.50 420.06 L883.60 421.70 L884.70 423.16 L885.80 425.16 L886.90 427.20 L888.00 428.86 L889.10 431.20 L890.20 432.82 L891.35 434.10 L892.50 435.21 L893.65 436.61 L894.80 438.30 L895.95 439.10 L897.10 440.22 L898.10 440.76 L899.10 441.56 L900.10 441.33 L901.10 441.88 L902.10 442.16 L903.10 442.86 L904.10 443.08 L905.10 443.20 L906.10 444.11 L907.10 444.11 L908.10 444.73 L909.15 444.67 L910.21 445.08 L911.26 444.61 L912.32 444.84 L913.37 444.99 L914.42 445.08 L915.48 445.58 L916.53 445.46 L917.58 445.46 L918.64 445.68 L919.69 446.03 L920.75 445.94 L921.80 445.97 L922.82 446.07 L923.83 446.00 L924.85 445.82 L925.87 445.79 L926.89 445.55 L927.90 445.72 L928.92 445.99 L929.94 445.55 L930.96 445.55 L931.97 445.68 L932.99 445.63 L934.01 445.30 L935.03 445.45 L936.04 445.62 L937.06 445.09 L938.08 445.10 L939.10 445.51 L940.11 445.58 L941.13 444.95 L942.15 444.92 L943.17 445.27 L944.18 444.99 L945.20 445.21 L946.55 449.72 L947.90 454.97 L949.03 452.70 L950.17 450.75 L951.30 448.94 L952.39 448.41 L953.47 448.25 L954.56 447.84 L955.64 447.28 L956.73 447.04 L957.81 446.17 L958.90 445.98 L959.93 445.80 L960.96 445.94 L961.99 445.50 L963.02 445.97 L964.05 445.53 L965.08 445.75 L966.10 445.78 L967.13 445.71 L968.16 445.25 L969.19 445.50 L970.22 445.52 L971.25 444.84 L972.28 445.20 L973.31 445.11 L974.34 444.85 L975.37 444.64 L976.40 444.50 L977.42 444.59 L978.45 444.88 L979.48 444.43 L980.51 444.25 L981.54 444.43 L982.57 444.23 L983.60 444.28 L984.62 446.87 L985.65 449.45 L986.68 451.97 L987.70 455.22 L988.80 454.27 L989.90 453.14 L991.00 452.48 L992.10 451.70 L993.20 450.80 L994.35 450.16 L995.50 449.16 L996.65 447.91 L997.80 447.02 L998.95 446.29 L1000.10 445.06 L1001.10 445.49 L1002.10 444.75 L1003.10 444.95 L1004.10 444.67 L1005.10 444.73 L1006.10 444.27 L1007.10 444.28 L1008.10 444.70 L1009.10 444.44 L1010.10 443.92 L1011.10 443.97 L1012.11 443.61 L1013.11 443.61 L1014.12 443.59 L1015.12 444.09 L1016.13 443.55 L1017.13 443.44 L1018.14 443.25 L1019.14 443.22 L1020.15 443.78 L1021.15 443.54 L1022.16 443.60 L1023.16 443.48 L1024.17 443.38 L1025.17 442.94 L1026.18 442.82 L1027.18 442.83 L1028.19 442.62 L1029.19 442.64 L1030.20 442.95 L1031.22 442.86 L1032.23 442.59 L1033.25 442.86 L1034.26 443.30 L1035.28 443.37 L1036.29 443.35 L1037.31 443.42 L1038.32 443.61 L1039.34 443.43 L1040.35 443.37 L1041.37 443.57 L1042.38 443.43 L1043.39 443.32 L1044.41 443.54 L1045.42 443.75 L1046.44 443.57 L1047.45 443.61 L1048.47 443.79 L1049.48 443.94 L1050.50 444.42 L1051.50 444.05 L1052.50 444.26 L1053.51 444.15 L1054.51 444.01 L1055.51 443.78 L1056.51 443.79 L1057.51 443.70 L1058.51 443.88 L1059.52 444.00 L1060.52 443.91 L1061.52 443.53 L1062.52 443.39 L1063.52 443.25 L1064.52 443.61 L1065.53 443.32 L1066.53 443.13 L1067.53 443.30 L1068.53 443.21 L1069.53 443.15 L1070.53 443.44 L1071.54 443.34 L1072.54 443.09 L1073.54 443.36 L1074.54 442.96 L1075.54 443.42 L1076.54 442.82 L1077.55 443.11 L1078.55 443.15 L1079.55 443.13 L1080.55 442.92 L1081.55 443.15 L1082.55 442.94 L1083.56 442.95 L1084.56 442.48 L1085.56 442.52 L1086.56 442.67 L1087.56 442.69 L1088.56 442.34 L1089.57 442.75 L1090.57 442.43 L1091.57 442.48 L1092.57 442.48 L1093.57 442.66 L1094.57 442.25 L1095.58 442.39 L1096.58 442.38 L1097.58 442.38 L1098.58 442.10 L1099.58 442.04 L1100.58 442.13 L1101.59 442.18 L1102.59 442.17 L1103.59 441.78 L1104.59 441.96 L1105.59 442.00 L1106.59 441.70 L1107.60 441.60 L1108.60 442.14 L1109.60 441.46 L1110.64 441.87 L1111.68 441.79 L1112.72 441.67 L1113.76 441.91 L1114.79 441.90 L1115.83 442.13 L1116.87 442.55 L1117.91 442.04 L1118.95 442.30 L1119.99 442.60 L1121.03 442.62 L1122.07 442.26 L1123.11 442.48 L1124.14 442.58 L1125.18 443.08 L1126.22 442.83 L1127.26 442.76 L1128.30 442.99 L1129.31 442.87 L1130.31 442.52 L1131.32 442.76 L1132.32 442.68 L1133.33 442.40 L1134.34 442.32 L1135.34 442.37 L1136.35 442.38 L1137.35 442.02 L1138.36 441.50 L1139.36 441.71 L1140.37 441.70 L1141.38 441.35 L1142.38 441.48 L1143.39 441.14 L1144.39 441.20 L1145.40 441.08 L1146.41 441.22 L1147.42 441.50 L1148.43 441.45 L1149.44 441.55 L1150.45 441.64 L1151.46 441.41 L1152.47 441.78 L1153.48 441.88 L1154.49 441.59 L1155.50 442.18 L1156.51 441.91 L1157.52 442.19 L1158.53 442.32 L1159.54 442.56 L1160.55 442.69 L1161.56 442.58 L1162.57 443.01 L1163.58 442.76 L1164.59 442.95 L1165.60 443.34 L1166.62 442.72 L1167.63 442.84 L1168.64 442.85 L1169.66 442.09 L1170.67 442.42 L1171.69 442.18 L1172.70 441.94 L1173.72 441.96 L1174.73 441.86 L1175.75 441.20 L1176.77 441.29 L1177.78 441.22 L1178.80 441.12 L1179.81 441.15 L1180.83 440.89 L1181.84 440.75 L1182.86 440.06 L1183.87 440.16 L1184.88 440.34 L1185.90 440.21 L1186.90 440.10 L1187.90 439.83 L1188.90 440.15 L1189.90 440.01 L1190.90 440.12 L1191.90 440.12 L1192.90 440.31 L1193.90 440.22 L1194.90 440.42 L1195.90 440.11 L1196.90 440.13 L1197.90 440.27 L1198.90 440.22 L1199.90 439.88 L1200.90 440.54 L1201.90 440.12 L1202.90 440.26 L1203.90 439.97 L1204.90 440.09 L1205.90 440.63 L1206.90 440.19 L1207.90 440.23 L1208.90 440.61 L1209.90 440.23 L1210.90 440.55 L1211.90 440.51 L1212.90 440.76 L1213.90 440.48 L1214.90 440.40 L1215.90 440.37 L1216.90 440.47 L1217.90 440.24 L1218.90 440.34 L1219.90 440.38 L1220.90 440.52 L1221.90 440.86 L1222.90 441.00 L1223.90 440.61 L1224.90 440.56 L1225.90 440.61 L1226.90 440.87 L1227.90 440.79 L1228.92 440.39 L1229.94 440.53 L1230.97 440.21 L1231.99 439.98 L1233.01 440.28 L1234.03 439.66 L1235.05 439.75 L1236.07 439.84 L1237.10 439.54 L1238.12 439.63 L1239.14 439.09 L1240.16 439.39 L1241.18 438.62 L1242.20 439.07 L1243.23 438.59 L1244.25 438.16 L1245.27 438.19 L1246.29 438.56 L1247.31 438.23 L1248.33 438.10 L1249.36 438.00 L1250.38 437.30 L1251.40 437.36 L1252.41 437.58 L1253.41 438.00 L1254.42 438.10 L1255.42 437.68 L1256.43 438.37 L1257.44 438.17 L1258.44 438.10 L1259.45 438.05 L1260.45 438.40 L1261.46 438.57 L1262.46 438.63 L1263.47 438.64 L1264.48 439.19 L1265.48 438.97 L1266.49 438.95 L1267.49 439.39 L1268.50 439.12 L1269.52 439.12 L1270.54 438.77 L1271.56 438.73 L1272.59 439.13 L1273.61 438.74 L1274.63 438.55 L1275.65 438.52 L1276.67 438.39 L1277.69 438.16 L1278.71 437.92 L1279.74 437.64 L1280.76 437.43 L1281.78 437.36 L1282.80 437.43 L1283.82 437.11 L1284.84 437.52 L1285.85 437.24 L1286.87 437.11 L1287.89 437.12 L1288.91 437.19 L1289.92 436.95 L1290.94 437.35 L1291.96 437.04 L1292.98 436.70 L1294.00 436.66 L1295.01 437.17 L1296.03 436.90 L1297.05 436.65 L1298.07 436.90 L1299.09 436.38 L1300.10 436.92 L1301.12 436.91 L1302.14 436.67 L1303.16 436.19 L1304.17 436.40 L1305.19 436.64 L1306.21 436.42 L1307.23 436.10 L1308.25 436.06 L1309.26 435.89 L1310.28 436.17 L1311.30 435.88 L1312.32 436.02 L1313.34 436.29 L1314.36 436.25 L1315.38 435.92 L1316.40 436.08 L1317.41 435.59 L1318.43 436.11 L1319.45 436.01 L1320.47 435.70 L1321.49 435.94 L1322.51 435.49 L1323.53 435.92 L1324.55 435.42 L1325.57 435.80 L1326.59 435.69 L1327.60 435.72 L1328.62 435.53 L1329.64 435.03 L1330.66 435.13 L1331.68 435.35 L1332.70 435.49 L1333.72 435.28 L1334.74 434.79 L1335.76 434.96 L1336.78 434.92 L1337.80 434.76 L1338.81 434.75 L1339.83 434.91 L1340.85 434.77 L1341.87 434.65 L1342.89 434.71 L1343.91 435.04 L1344.93 434.75 L1345.95 434.82 L1346.97 434.90 L1347.99 434.23 L1349.00 434.78 L1350.02 434.19 L1351.04 434.22 L1352.06 434.55 L1353.08 434.52 L1354.10 434.38 L1355.12 434.28 L1356.14 434.44 L1357.16 434.23 L1358.18 434.06 L1359.20 434.07 L1360.21 433.99 L1361.23 433.93 L1362.25 434.56 L1363.27 434.55 L1364.29 434.12 L1365.31 434.16 L1366.33 434.06 L1367.35 434.40 L1368.37 434.19 L1369.39 433.96 L1370.40 434.45 L1371.42 434.48 L1372.44 433.85 L1373.46 434.14 L1374.48 433.96 L1375.50 434.25 L1376.52 434.04 L1377.54 433.99 L1378.56 433.99 L1379.58 434.20 L1380.60 434.12 L1381.61 434.10 L1382.63 434.23 L1383.65 434.07 L1384.67 434.40 L1385.69 434.04 L1386.71 434.28 L1387.73 434.37 L1388.75 434.14 L1389.77 434.11 L1390.79 434.25 L1391.80 434.18 L1392.82 433.81 L1393.84 433.96 L1394.86 433.77 L1395.88 433.67 L1396.90 434.13 L1397.92 433.84 L1398.94 433.74 L1399.95 433.54 L1400.97 433.49 L1401.99 433.91 L1403.01 433.64 L1404.03 433.66 L1405.04 433.78 L1406.06 433.90 L1407.08 433.71 L1408.10 433.33 L1409.11 433.83 L1410.13 433.22 L1411.15 433.46 L1412.17 433.46 L1413.19 433.17 L1414.20 433.54 L1415.22 433.31 L1416.24 433.33 L1417.26 432.89 L1418.28 433.33 L1419.29 432.91 L1420.31 433.10 L1421.33 433.14 L1422.35 432.80 L1423.36 432.72 L1424.38 432.72 L1425.40 433.13 L1426.40 432.90 L1427.40 432.76 L1428.40 432.82 L1429.40 432.88 L1430.40 432.59 L1431.40 432.45 L1432.40 432.47 L1433.40 432.79 L1434.40 432.79 L1435.40 433.05 L1436.40 432.79 L1437.40 432.95 L1438.40 433.03 L1439.40 432.68 L1440.40 432.62 L1441.40 432.65 L1442.40 432.57 L1443.40 432.83 L1444.40 432.69 L1445.40 432.37 L1446.40 432.94 L1447.40 432.64 L1448.40 432.78 L1449.40 432.60" stroke="#1a1aff" stroke-width="1.5" fill="none" stroke-linejoin="round" /><g font-family="Liberation Sans" font-size="10.2" fill="#1a1a1a"><path d="M830.1 613.1V747.1" stroke="#6e6e6e" stroke-width="1.6" fill="none"/><path d="M823.6 747.10H830.1M823.6 680.10H830.1M823.6 613.10H830.1M827.1 740.40H830.1M827.1 733.70H830.1M827.1 727.00H830.1M827.1 720.30H830.1M827.1 713.60H830.1M827.1 706.90H830.1M827.1 700.20H830.1M827.1 693.50H830.1M827.1 686.80H830.1M827.1 673.40H830.1M827.1 666.70H830.1M827.1 660.00H830.1M827.1 653.30H830.1M827.1 646.60H830.1M827.1 639.90H830.1M827.1 633.20H830.1M827.1 626.50H830.1M827.1 619.80H830.1" stroke="#6e6e6e" stroke-width="1.3" fill="none"/><path d="M1454.1 613.1V747.1" stroke="#6e6e6e" stroke-width="1.6" fill="none"/><path d="M824.1 747.1H1454.1" stroke="#6e6e6e" stroke-width="1.6" fill="none"/><path d="M834.80 747.1V750.6M841.92 747.1V750.6M849.03 747.1V750.6M856.15 747.1V750.6M863.27 747.1V750.6M870.39 747.1V750.6M877.51 747.1V750.6M884.63 747.1V753.6M891.75 747.1V750.6M898.86 747.1V750.6M905.98 747.1V750.6M913.10 747.1V750.6M920.22 747.1V750.6M927.34 747.1V750.6M934.46 747.1V750.6M941.57 747.1V750.6M948.69 747.1V750.6M955.81 747.1V753.6M962.93 747.1V750.6M970.05 747.1V750.6M977.17 747.1V750.6M984.28 747.1V750.6M991.40 747.1V750.6M998.52 747.1V750.6M1005.64 747.1V750.6M1012.76 747.1V750.6M1019.88 747.1V750.6M1027.00 747.1V753.6M1034.11 747.1V750.6M1041.23 747.1V750.6M1048.35 747.1V750.6M1055.47 747.1V750.6M1062.59 747.1V750.6M1069.71 747.1V750.6M1076.82 747.1V750.6M1083.94 747.1V750.6M1091.06 747.1V750.6M1098.18 747.1V753.6M1105.30 747.1V750.6M1112.42 747.1V750.6M1119.53 747.1V750.6M1126.65 747.1V750.6M1133.77 747.1V750.6M1140.89 747.1V750.6M1148.01 747.1V750.6M1155.13 747.1V750.6M1162.25 747.1V750.6M1169.36 747.1V753.6M1176.48 747.1V750.6M1183.60 747.1V750.6M1190.72 747.1V750.6M1197.84 747.1V750.6M1204.96 747.1V750.6M1212.07 747.1V750.6M1219.19 747.1V750.6M1226.31 747.1V750.6M1233.43 747.1V750.6M1240.55 747.1V753.6M1247.67 747.1V750.6M1254.78 747.1V750.6M1261.90 747.1V750.6M1269.02 747.1V750.6M1276.14 747.1V750.6M1283.26 747.1V750.6M1290.38 747.1V750.6M1297.49 747.1V750.6M1304.61 747.1V750.6M1311.73 747.1V753.6M1318.85 747.1V750.6M1325.97 747.1V750.6M1333.09 747.1V750.6M1340.21 747.1V750.6M1347.32 747.1V750.6M1354.44 747.1V750.6M1361.56 747.1V750.6M1368.68 747.1V750.6M1375.80 747.1V750.6M1382.92 747.1V753.6M1390.03 747.1V750.6M1397.15 747.1V750.6M1404.27 747.1V750.6M1411.39 747.1V750.6M1418.51 747.1V750.6M1425.63 747.1V750.6M1432.74 747.1V750.6M1439.86 747.1V750.6M1446.98 747.1V750.6M1454.10 747.1V753.6" stroke="#6e6e6e" stroke-width="1.3" fill="none"/><text x="819.1" y="750.90" text-anchor="end">0</text><text x="819.1" y="683.90" text-anchor="end">1</text><text x="819.1" y="616.90" text-anchor="end">2</text><text x="884.63" y="769.40" text-anchor="middle">19:18:23</text><text x="955.81" y="769.40" text-anchor="middle">22:05:03</text><text x="1027.00" y="769.40" text-anchor="middle">00:51:43</text><text x="1098.18" y="769.40" text-anchor="middle">03:38:23</text><text x="1169.36" y="769.40" text-anchor="middle">06:25:03</text><text x="1240.55" y="769.40" text-anchor="middle">09:11:43</text><text x="1311.73" y="769.40" text-anchor="middle">11:58:23</text><text x="1382.92" y="769.40" text-anchor="middle">14:45:03</text><text x="1454.10" y="769.40" text-anchor="middle">17:31:43</text></g><path d="M830.10 746.60 L867.60 746.60 L867.60 646.50" stroke="#ff0000" stroke-width="1.1" fill="none" stroke-linejoin="round" /><path d="M867.6 646.6L876.4 643.3000000000001L876.4 675.4L867.6 677.4Z" fill="#ff0000"/><path d="M876.8 693.6L921.5 701.6L921.5 714.9L876.8 711.4Z" fill="#ff0000"/><path d="M923 701.6L949 702.6L949 715.4L923 714.9Z" fill="#ff0000"/><path d="M951.5 706.3000000000001L987 706.3000000000001L987 717.6999999999999L951.5 717.6999999999999Z" fill="#ff0000"/><path d="M992.6 705.6L1012.6 706.1L1012.6 719.4L992.6 719.4Z" fill="#ff0000"/><path d="M1016 707.6L1454.1 708.1L1454.1 719.0L1016 719.0Z" fill="#ff0000"/><path d="M867.60 645.43 L868.58 677.96 L869.56 644.93 L870.53 677.62 L871.51 644.66 L872.49 676.21 L873.47 642.82 L874.44 677.15 L875.42 642.53 L876.40 675.62M876.80 693.79 L877.71 712.12 L878.62 693.83 L879.54 712.27 L880.45 693.80 L881.36 711.83 L882.27 694.12 L883.19 713.26 L884.10 694.25 L885.01 713.18 L885.92 694.84 L886.83 712.10 L887.75 695.32 L888.66 713.19 L889.57 694.83 L890.48 712.33 L891.40 696.17 L892.31 713.27 L893.22 696.23 L894.13 714.14 L895.04 696.55 L895.96 714.36 L896.87 696.30 L897.78 714.28 L898.69 696.72 L899.61 714.67 L900.52 697.83 L901.43 713.30 L902.34 696.82 L903.26 713.66 L904.17 698.64 L905.08 714.20 L905.99 698.35 L906.90 714.10 L907.82 698.46 L908.73 714.39 L909.64 698.51 L910.55 714.90 L911.47 699.26 L912.38 715.61 L913.29 699.76 L914.20 715.80 L915.11 700.40 L916.03 716.06 L916.94 700.39 L917.85 714.71 L918.76 701.06 L919.68 716.29 L920.59 701.47 L921.50 715.72M923.00 701.28 L923.93 715.10 L924.86 701.57 L925.79 715.79 L926.71 700.66 L927.64 714.90 L928.57 701.75 L929.50 716.61 L930.43 700.45 L931.36 716.30 L932.29 701.10 L933.21 715.17 L934.14 700.96 L935.07 716.32 L936.00 702.07 L936.93 715.05 L937.86 701.68 L938.79 715.08 L939.71 701.94 L940.64 715.64 L941.57 702.30 L942.50 716.84 L943.43 701.70 L944.36 716.91 L945.29 701.41 L946.21 715.28 L947.14 702.01 L948.07 715.24 L949.00 701.36M951.50 705.43 L952.41 718.60 L953.32 704.98 L954.23 717.58 L955.14 706.26 L956.05 718.06 L956.96 706.43 L957.87 719.11 L958.78 705.38 L959.69 718.33 L960.60 705.64 L961.51 718.66 L962.42 705.77 L963.33 718.51 L964.24 705.82 L965.15 719.19 L966.06 705.61 L966.97 718.28 L967.88 706.00 L968.79 717.93 L969.71 705.24 L970.62 719.26 L971.53 705.64 L972.44 718.49 L973.35 704.72 L974.26 718.25 L975.17 705.74 L976.08 717.54 L976.99 705.81 L977.90 718.64 L978.81 704.81 L979.72 718.63 L980.63 705.54 L981.54 718.72 L982.45 705.33 L983.36 718.77 L984.27 706.03 L985.18 717.54 L986.09 704.81 L987.00 718.72M992.60 705.73 L993.51 719.65 L994.42 704.87 L995.33 720.27 L996.24 704.67 L997.15 719.86 L998.05 704.70 L998.96 719.86 L999.87 705.25 L1000.78 719.74 L1001.69 704.91 L1002.60 720.59 L1003.51 704.32 L1004.42 720.22 L1005.33 705.64 L1006.24 719.76 L1007.15 704.76 L1008.05 720.65 L1008.96 704.84 L1009.87 719.54 L1010.78 705.24 L1011.69 720.46 L1012.60 704.68M1016.00 706.58 L1016.90 719.40 L1017.80 707.50 L1018.70 719.59 L1019.61 707.54 L1020.51 719.10 L1021.41 706.61 L1022.31 719.97 L1023.21 707.60 L1024.11 719.61 L1025.01 706.42 L1025.92 719.02 L1026.82 706.97 L1027.72 719.14 L1028.62 707.47 L1029.52 720.31 L1030.42 706.35 L1031.32 719.30 L1032.23 707.47 L1033.13 719.96 L1034.03 707.47 L1034.93 719.42 L1035.83 706.26 L1036.73 719.33 L1037.63 707.45 L1038.54 719.29 L1039.44 706.65 L1040.34 719.55 L1041.24 706.78 L1042.14 719.54 L1043.04 707.69 L1043.94 719.08 L1044.85 706.04 L1045.75 720.50 L1046.65 707.62 L1047.55 720.58 L1048.45 706.82 L1049.35 720.51 L1050.25 707.71 L1051.16 719.20 L1052.06 707.38 L1052.96 720.31 L1053.86 707.24 L1054.76 719.73 L1055.66 706.57 L1056.56 719.41 L1057.47 706.46 L1058.37 718.92 L1059.27 707.11 L1060.17 719.32 L1061.07 707.51 L1061.97 718.88 L1062.87 707.68 L1063.78 720.05 L1064.68 707.72 L1065.58 720.41 L1066.48 707.68 L1067.38 719.84 L1068.28 706.08 L1069.18 720.14 L1070.09 706.37 L1070.99 719.34 L1071.89 707.26 L1072.79 719.74 L1073.69 706.81 L1074.59 720.49 L1075.50 707.17 L1076.40 719.41 L1077.30 706.52 L1078.20 720.35 L1079.10 706.93 L1080.00 720.21 L1080.90 706.71 L1081.81 719.16 L1082.71 707.04 L1083.61 720.27 L1084.51 706.39 L1085.41 720.23 L1086.31 707.74 L1087.21 720.25 L1088.12 707.56 L1089.02 718.81 L1089.92 707.22 L1090.82 720.35 L1091.72 706.18 L1092.62 719.29 L1093.52 706.57 L1094.43 719.75 L1095.33 706.85 L1096.23 719.65 L1097.13 707.49 L1098.03 718.80 L1098.93 706.19 L1099.83 719.03 L1100.74 706.32 L1101.64 718.92 L1102.54 707.85 L1103.44 720.34 L1104.34 706.26 L1105.24 719.70 L1106.14 706.67 L1107.05 719.37 L1107.95 706.74 L1108.85 719.96 L1109.75 707.16 L1110.65 719.45 L1111.55 706.45 L1112.45 719.39 L1113.36 706.33 L1114.26 719.80 L1115.16 707.40 L1116.06 719.48 L1116.96 706.26 L1117.86 719.12 L1118.76 706.79 L1119.67 719.89 L1120.57 707.53 L1121.47 719.48 L1122.37 707.56 L1123.27 719.92 L1124.17 706.90 L1125.07 719.47 L1125.98 707.02 L1126.88 720.07 L1127.78 706.88 L1128.68 720.05 L1129.58 706.96 L1130.48 719.24 L1131.38 707.10 L1132.29 720.05 L1133.19 706.26 L1134.09 719.56 L1134.99 706.90 L1135.89 720.38 L1136.79 707.82 L1137.69 719.47 L1138.60 707.76 L1139.50 720.22 L1140.40 706.61 L1141.30 719.64 L1142.20 706.37 L1143.10 720.26 L1144.00 707.34 L1144.91 720.40 L1145.81 707.57 L1146.71 720.00 L1147.61 707.47 L1148.51 719.81 L1149.41 706.34 L1150.31 719.86 L1151.22 706.16 L1152.12 719.06 L1153.02 707.55 L1153.92 718.88 L1154.82 706.32 L1155.72 718.98 L1156.62 707.75 L1157.53 719.12 L1158.43 706.20 L1159.33 720.31 L1160.23 706.38 L1161.13 720.32 L1162.03 707.38 L1162.93 720.31 L1163.84 707.88 L1164.74 719.84 L1165.64 707.61 L1166.54 718.87 L1167.44 707.55 L1168.34 719.72 L1169.24 707.46 L1170.15 718.99 L1171.05 707.53 L1171.95 720.48 L1172.85 706.29 L1173.75 719.38 L1174.65 707.20 L1175.55 720.29 L1176.46 706.62 L1177.36 719.12 L1178.26 706.64 L1179.16 719.91 L1180.06 707.54 L1180.96 719.51 L1181.87 706.85 L1182.77 719.51 L1183.67 706.82 L1184.57 719.55 L1185.47 706.34 L1186.37 719.70 L1187.27 707.95 L1188.18 719.54 L1189.08 707.54 L1189.98 719.09 L1190.88 707.44 L1191.78 720.16 L1192.68 707.41 L1193.58 719.73 L1194.49 707.07 L1195.39 719.96 L1196.29 707.82 L1197.19 719.07 L1198.09 706.38 L1198.99 720.15 L1199.89 707.86 L1200.80 719.73 L1201.70 707.01 L1202.60 720.09 L1203.50 706.55 L1204.40 719.28 L1205.30 706.57 L1206.20 719.85 L1207.11 706.78 L1208.01 719.22 L1208.91 707.46 L1209.81 720.52 L1210.71 706.75 L1211.61 720.07 L1212.51 706.97 L1213.42 720.34 L1214.32 707.28 L1215.22 719.28 L1216.12 706.62 L1217.02 718.84 L1217.92 707.09 L1218.82 719.49 L1219.73 706.54 L1220.63 719.45 L1221.53 706.81 L1222.43 720.19 L1223.33 706.50 L1224.23 720.58 L1225.13 707.10 L1226.04 719.88 L1226.94 707.08 L1227.84 720.30 L1228.74 707.72 L1229.64 719.80 L1230.54 707.11 L1231.44 720.10 L1232.35 707.79 L1233.25 719.52 L1234.15 707.57 L1235.05 720.53 L1235.95 707.09 L1236.85 719.21 L1237.75 706.68 L1238.66 720.09 L1239.56 707.47 L1240.46 720.53 L1241.36 707.79 L1242.26 719.24 L1243.16 706.60 L1244.06 719.27 L1244.97 706.60 L1245.87 720.07 L1246.77 707.81 L1247.67 720.42 L1248.57 706.72 L1249.47 720.36 L1250.37 706.83 L1251.28 719.56 L1252.18 707.58 L1253.08 718.95 L1253.98 706.44 L1254.88 720.30 L1255.78 706.80 L1256.68 719.44 L1257.59 707.32 L1258.49 720.02 L1259.39 706.29 L1260.29 719.40 L1261.19 707.07 L1262.09 719.67 L1262.99 706.66 L1263.90 719.85 L1264.80 708.00 L1265.70 719.50 L1266.60 707.27 L1267.50 719.01 L1268.40 706.78 L1269.30 720.00 L1270.21 706.49 L1271.11 720.40 L1272.01 707.93 L1272.91 718.97 L1273.81 707.99 L1274.71 719.47 L1275.61 707.69 L1276.52 720.16 L1277.42 706.83 L1278.32 720.02 L1279.22 707.48 L1280.12 720.25 L1281.02 706.78 L1281.92 720.16 L1282.83 708.03 L1283.73 720.01 L1284.63 707.27 L1285.53 719.00 L1286.43 707.20 L1287.33 719.43 L1288.23 707.60 L1289.14 720.02 L1290.04 707.33 L1290.94 719.13 L1291.84 707.48 L1292.74 719.94 L1293.64 706.64 L1294.55 720.40 L1295.45 707.50 L1296.35 719.02 L1297.25 708.00 L1298.15 719.05 L1299.05 706.92 L1299.95 720.10 L1300.86 707.40 L1301.76 719.80 L1302.66 707.49 L1303.56 719.62 L1304.46 706.89 L1305.36 719.12 L1306.26 706.45 L1307.17 720.09 L1308.07 707.69 L1308.97 719.78 L1309.87 707.67 L1310.77 719.45 L1311.67 706.82 L1312.57 719.49 L1313.48 707.91 L1314.38 718.88 L1315.28 707.25 L1316.18 719.24 L1317.08 707.73 L1317.98 719.44 L1318.88 706.94 L1319.79 719.53 L1320.69 707.32 L1321.59 720.19 L1322.49 706.98 L1323.39 720.32 L1324.29 706.55 L1325.19 719.29 L1326.10 706.53 L1327.00 719.00 L1327.90 707.76 L1328.80 720.11 L1329.70 706.69 L1330.60 719.14 L1331.50 707.11 L1332.41 720.14 L1333.31 707.83 L1334.21 720.15 L1335.11 707.43 L1336.01 719.06 L1336.91 707.08 L1337.81 719.15 L1338.72 707.32 L1339.62 719.82 L1340.52 706.73 L1341.42 719.25 L1342.32 707.78 L1343.22 718.85 L1344.12 707.82 L1345.03 720.40 L1345.93 708.09 L1346.83 719.49 L1347.73 707.37 L1348.63 719.85 L1349.53 707.52 L1350.43 720.56 L1351.34 707.62 L1352.24 719.34 L1353.14 707.93 L1354.04 719.67 L1354.94 707.47 L1355.84 720.11 L1356.74 706.39 L1357.65 720.19 L1358.55 707.58 L1359.45 719.69 L1360.35 707.34 L1361.25 719.63 L1362.15 706.74 L1363.05 719.75 L1363.96 706.46 L1364.86 719.70 L1365.76 707.56 L1366.66 719.60 L1367.56 707.42 L1368.46 720.53 L1369.36 708.01 L1370.27 719.04 L1371.17 707.83 L1372.07 719.92 L1372.97 706.50 L1373.87 719.45 L1374.77 706.83 L1375.67 718.94 L1376.58 707.38 L1377.48 720.47 L1378.38 707.00 L1379.28 720.37 L1380.18 707.67 L1381.08 719.04 L1381.98 707.96 L1382.89 719.88 L1383.79 708.09 L1384.69 720.09 L1385.59 707.75 L1386.49 719.42 L1387.39 707.88 L1388.29 720.48 L1389.20 707.98 L1390.10 719.59 L1391.00 707.79 L1391.90 719.67 L1392.80 706.63 L1393.70 718.88 L1394.60 706.57 L1395.51 719.16 L1396.41 706.72 L1397.31 719.69 L1398.21 707.69 L1399.11 719.77 L1400.01 707.20 L1400.92 719.97 L1401.82 706.99 L1402.72 719.64 L1403.62 707.81 L1404.52 719.52 L1405.42 706.77 L1406.32 720.42 L1407.23 707.74 L1408.13 719.46 L1409.03 707.12 L1409.93 719.75 L1410.83 707.52 L1411.73 719.20 L1412.63 706.46 L1413.54 719.18 L1414.44 707.86 L1415.34 719.06 L1416.24 707.28 L1417.14 719.15 L1418.04 706.84 L1418.94 719.11 L1419.85 707.19 L1420.75 719.10 L1421.65 706.51 L1422.55 719.00 L1423.45 706.77 L1424.35 719.68 L1425.25 706.57 L1426.16 718.84 L1427.06 707.28 L1427.96 719.53 L1428.86 707.74 L1429.76 718.89 L1430.66 707.20 L1431.56 719.51 L1432.47 706.52 L1433.37 720.54 L1434.27 706.87 L1435.17 718.97 L1436.07 707.33 L1436.97 719.10 L1437.87 707.60 L1438.78 719.42 L1439.68 706.71 L1440.58 718.89 L1441.48 707.80 L1442.38 719.30 L1443.28 707.91 L1444.18 719.64 L1445.09 708.17 L1445.99 719.34 L1446.89 706.94 L1447.79 719.28 L1448.69 707.96 L1449.59 719.93 L1450.49 707.12 L1451.40 718.97 L1452.30 707.73 L1453.20 720.54 L1454.10 707.57" stroke="#ff0000" stroke-width="1" fill="none"/><path d="M876.40 642.70 L876.60 700.00" stroke="#ff0000" stroke-width="1.3" fill="none" stroke-linejoin="round" /><path d="M921.50 712.00 L922.30 747.10 L923.00 712.00" stroke="#ff0000" stroke-width="1.3" fill="none" stroke-linejoin="round" /><path d="M949.00 705.00 L949.80 647.70 L950.80 647.70 L951.50 710.00" stroke="#ff0000" stroke-width="1.8" fill="none" stroke-linejoin="round" /><path d="M987.00 712.00 L990.00 652.00 L992.40 650.00 L992.60 712.00" stroke="#ff0000" stroke-width="1.5" fill="none" stroke-linejoin="round" /><path d="M988.5 678L990.5 652L992.4 650L992.4 678Z" fill="#ff0000"/><path d="M1012.60 708.00 L1016.00 715.00" stroke="#ff0000" stroke-width="1.5" fill="none" stroke-linejoin="round" /><path d="M879.10 700.4V712.7M974.96 700.4V712.4M1253.29 710.8V713.6M1437.06 705.7V718.4M1404.58 711.3V712.3M1052.25 707.3V719.6M927.48 703.5V718.8M942.95 704.7V714.7M1268.10 711.1V713.4M1302.46 708.8V718.7M1195.22 711.1V714.9M1115.51 702.8V718.2M1153.40 703.2V713.4M1291.43 707.3V717.7M1099.45 705.8V713.2M1285.72 700.3V715.7M1313.19 708.1V712.8M1013.40 710.1V717.1M1382.24 710.5V715.6M1392.80 708.8V714.7M1089.84 700.9V715.2M1426.62 701.3V716.6M940.34 701.0V717.2M1015.42 700.6V713.2M1247.68 707.0V712.1M1009.23 711.6V713.8M1200.47 705.0V718.2M1224.56 709.5V716.3M985.21 702.1V712.6M1351.75 701.4V712.2M1432.79 702.4V719.1M926.33 705.6V713.8M1354.03 707.4V717.1M1314.88 710.5V714.8M1223.85 705.3V712.9M1357.43 707.1V718.5M995.46 706.5V715.7M1295.68 700.9V714.8M1155.66 700.9V716.4M1299.88 705.1V717.2M1225.44 702.6V714.8M1449.65 704.0V715.4M925.42 702.6V713.3M1412.38 708.7V719.0M1444.38 707.3V719.5M1185.09 705.0V719.6M1396.37 711.4V715.9M1321.82 704.9V720.0M1406.27 703.5V719.5M983.16 701.2V717.8M1046.25 706.2V717.1M900.33 708.9V714.2M1125.67 704.1V717.9M1306.48 703.4V712.8M1049.15 704.9V712.6M965.11 709.2V717.6M1438.53 711.8V719.0M1091.27 701.9V714.5M1143.36 706.3V716.3M1083.87 710.2V714.3M1143.36 710.6V718.5M1048.03 702.9V718.5M882.78 701.6V716.2M1185.16 702.0V712.4M994.29 709.2V715.7M1440.19 709.4V719.8M897.20 702.2V712.1M1125.65 704.1V712.4M1191.01 701.1V714.5M1019.18 709.6V715.3M1026.73 700.5V715.4M1237.87 708.1V719.3M1342.01 703.0V713.1M1313.10 709.5V716.1M1354.91 706.6V714.2M974.04 700.2V717.1M1392.85 710.9V715.7M1259.72 711.1V718.5M1223.58 705.0V716.1M975.22 702.2V717.5M1447.56 706.6V715.3M1079.38 705.5V718.4M1137.24 711.5V713.2M1058.10 706.3V715.3M1366.45 709.9V719.5M1229.23 700.4V716.6M1193.16 705.9V714.2M1284.97 710.9V712.8M1261.56 704.5V716.1M1392.12 711.5V717.1M989.19 711.0V713.4M1097.44 709.9V714.5M1032.79 711.4V719.6M1059.53 704.7V714.3M952.63 703.0V719.8M922.58 702.8V713.6M922.74 706.3V717.9M1359.10 707.6V718.5M880.09 703.4V719.7M916.90 703.2V715.9M1031.05 706.6V712.4M1012.69 711.5V713.2M1397.75 702.1V719.9M1264.96 707.8V713.1M908.39 709.1V713.4M986.04 709.9V719.0M905.06 711.5V716.3M1096.91 701.3V715.1M1444.92 703.4V713.1M960.53 701.5V714.8M1403.20 700.9V713.5M1417.20 712.0V719.8M1018.44 704.3V719.6M1155.97 708.4V714.5M889.27 704.1V718.0M1326.69 706.8V715.7M1186.48 705.3V716.3M1356.04 702.4V716.8M1413.45 710.2V713.4M1431.08 710.1V713.3M1029.91 702.4V712.4M1439.66 704.9V719.0M942.89 700.2V719.0M1333.63 711.9V717.5M1179.06 709.2V712.7M1187.77 705.3V713.2M1222.28 703.9V716.1M1091.81 703.8V714.9M1222.66 711.8V719.5M1372.84 710.0V714.3M1438.71 703.2V713.0M1165.01 708.8V714.7M1248.10 703.4V719.7M1137.46 705.7V716.3M1380.16 711.8V716.2M1130.94 707.4V712.6M1121.69 710.2V718.2M911.13 710.3V715.1M1441.33 704.4V713.7M1192.56 710.6V715.4M1375.88 708.5V714.9M1049.88 706.1V715.2M1091.25 707.8V719.0M1213.10 701.8V713.8M1090.32 707.4V713.1M923.90 703.8V714.3M893.96 706.5V719.4M1184.31 708.8V718.6M1358.76 711.0V715.5M1269.47 701.4V719.0M1094.52 705.7V719.1M1041.91 702.3V718.6M1221.40 701.0V712.2M1079.02 700.1V718.7M982.62 703.3V715.1M1171.29 705.2V717.0M1256.48 705.2V712.8M1440.09 708.3V712.7M1131.01 709.0V719.9M914.96 700.1V715.8" stroke="#fff" stroke-width="0.5" stroke-opacity="0.45"/><g font-family="Liberation Sans" font-size="10.2" fill="#1a1a1a"><path d="M74.8 616V746" stroke="#6e6e6e" stroke-width="1.6" fill="none"/><path d="M68.3 746.00H74.8M68.3 727.43H74.8M68.3 708.86H74.8M68.3 690.29H74.8M68.3 671.71H74.8M68.3 653.14H74.8M68.3 634.57H74.8M68.3 616.00H74.8M71.8 742.29H74.8M71.8 738.57H74.8M71.8 734.86H74.8M71.8 731.14H74.8M71.8 723.71H74.8M71.8 720.00H74.8M71.8 716.29H74.8M71.8 712.57H74.8M71.8 705.14H74.8M71.8 701.43H74.8M71.8 697.71H74.8M71.8 694.00H74.8M71.8 686.57H74.8M71.8 682.86H74.8M71.8 679.14H74.8M71.8 675.43H74.8M71.8 668.00H74.8M71.8 664.29H74.8M71.8 660.57H74.8M71.8 656.86H74.8M71.8 649.43H74.8M71.8 645.71H74.8M71.8 642.00H74.8M71.8 638.29H74.8M71.8 630.86H74.8M71.8 627.14H74.8M71.8 623.43H74.8M71.8 619.71H74.8" stroke="#6e6e6e" stroke-width="1.3" fill="none"/><path d="M681.9 616V746" stroke="#6e6e6e" stroke-width="1.6" fill="none"/><path d="M68.8 746H681.9" stroke="#6e6e6e" stroke-width="1.6" fill="none"/><path d="M79.37 746V749.5M86.30 746V749.5M93.22 746V749.5M100.15 746V749.5M107.07 746V749.5M114.00 746V749.5M120.92 746V749.5M127.85 746V752.5M134.78 746V749.5M141.70 746V749.5M148.63 746V749.5M155.55 746V749.5M162.48 746V749.5M169.40 746V749.5M176.33 746V749.5M183.26 746V749.5M190.18 746V749.5M197.11 746V752.5M204.03 746V749.5M210.96 746V749.5M217.88 746V749.5M224.81 746V749.5M231.73 746V749.5M238.66 746V749.5M245.59 746V749.5M252.51 746V749.5M259.44 746V749.5M266.36 746V752.5M273.29 746V749.5M280.21 746V749.5M287.14 746V749.5M294.07 746V749.5M300.99 746V749.5M307.92 746V749.5M314.84 746V749.5M321.77 746V749.5M328.69 746V749.5M335.62 746V752.5M342.54 746V749.5M349.47 746V749.5M356.40 746V749.5M363.32 746V749.5M370.25 746V749.5M377.17 746V749.5M384.10 746V749.5M391.02 746V749.5M397.95 746V749.5M404.88 746V752.5M411.80 746V749.5M418.73 746V749.5M425.65 746V749.5M432.58 746V749.5M439.50 746V749.5M446.43 746V749.5M453.35 746V749.5M460.28 746V749.5M467.21 746V749.5M474.13 746V752.5M481.06 746V749.5M487.98 746V749.5M494.91 746V749.5M501.83 746V749.5M508.76 746V749.5M515.69 746V749.5M522.61 746V749.5M529.54 746V749.5M536.46 746V749.5M543.39 746V752.5M550.31 746V749.5M557.24 746V749.5M564.16 746V749.5M571.09 746V749.5M578.02 746V749.5M584.94 746V749.5M591.87 746V749.5M598.79 746V749.5M605.72 746V749.5M612.64 746V752.5M619.57 746V749.5M626.50 746V749.5M633.42 746V749.5M640.35 746V749.5M647.27 746V749.5M654.20 746V749.5M661.12 746V749.5M668.05 746V749.5M674.97 746V749.5M681.90 746V752.5" stroke="#6e6e6e" stroke-width="1.3" fill="none"/><text x="63.8" y="749.80" text-anchor="end">-0.05</text><text x="63.8" y="731.23" text-anchor="end">-0.04</text><text x="63.8" y="712.66" text-anchor="end">-0.03</text><text x="63.8" y="694.09" text-anchor="end">-0.02</text><text x="63.8" y="675.51" text-anchor="end">-0.01</text><text x="63.8" y="656.94" text-anchor="end">0.00</text><text x="63.8" y="638.37" text-anchor="end">0.01</text><text x="63.8" y="619.80" text-anchor="end">0.02</text><text x="127.85" y="768.30" text-anchor="middle">19:18:23</text><text x="197.11" y="768.30" text-anchor="middle">22:05:03</text><text x="266.36" y="768.30" text-anchor="middle">00:51:43</text><text x="335.62" y="768.30" text-anchor="middle">03:38:23</text><text x="404.88" y="768.30" text-anchor="middle">06:25:03</text><text x="474.13" y="768.30" text-anchor="middle">09:11:43</text><text x="543.39" y="768.30" text-anchor="middle">11:58:23</text><text x="612.64" y="768.30" text-anchor="middle">14:45:03</text><text x="681.90" y="768.30" text-anchor="middle">17:31:43</text></g><path d="M74.80 653.10 L110.70 653.10 L110.70 712.10 L111.50 666.50" stroke="#ff0000" stroke-width="1.1" fill="none" stroke-linejoin="round" /><rect x="111.5" y="665.6" width="570.4" height="2.2" fill="#ff0000"/><path d="M111.50 665.25 L111.95 667.69 L112.40 665.89 L112.85 668.76 L113.30 665.12 L113.75 667.56 L114.20 664.92 L114.65 668.52 L115.10 665.57 L115.55 668.21 L116.00 665.07 L116.45 668.04 L116.90 665.76 L117.35 668.44 L117.80 665.31 L118.25 667.87 L118.70 665.51 L119.15 667.78 L119.60 664.67 L120.05 668.03 L120.50 665.87 L120.95 668.77 L121.40 665.06 L121.85 668.31 L122.30 664.11 L122.75 669.29 L123.20 665.20 L123.65 668.09 L124.10 665.01 L124.55 668.31 L125.00 665.05 L125.45 667.58 L125.90 665.05 L126.35 667.88 L126.80 664.50 L127.25 668.49 L127.70 665.57 L128.15 667.56 L128.60 664.96 L129.05 668.58 L129.50 665.41 L129.95 668.32 L130.40 665.34 L130.85 670.08 L131.30 665.44 L131.75 667.80 L132.20 665.45 L132.65 668.38 L133.10 663.34 L133.55 668.63 L134.00 664.91 L134.45 668.53 L134.90 665.58 L135.35 668.06 L135.80 664.70 L136.25 668.43 L136.70 664.72 L137.15 667.57 L137.60 665.66 L138.05 668.88 L138.50 665.88 L138.95 667.79 L139.40 665.04 L139.85 668.00 L140.30 665.11 L140.75 667.62 L141.20 664.93 L141.65 668.13 L142.10 664.83 L142.55 668.74 L143.00 664.90 L143.45 668.73 L143.90 665.76 L144.35 668.24 L144.80 665.02 L145.25 668.59 L145.70 665.88 L146.15 668.14 L146.60 665.36 L147.05 668.17 L147.50 665.15 L147.95 667.54 L148.40 664.66 L148.85 668.23 L149.30 664.63 L149.75 668.40 L150.20 665.48 L150.65 668.51 L151.10 664.92 L151.55 668.19 L152.00 665.83 L152.45 668.02 L152.90 665.58 L153.35 668.52 L153.80 663.54 L154.25 668.36 L154.70 665.33 L155.15 667.76 L155.60 665.65 L156.05 668.00 L156.50 663.35 L156.95 667.97 L157.40 665.89 L157.85 668.33 L158.30 664.52 L158.75 667.65 L159.20 665.58 L159.65 667.77 L160.10 665.75 L160.55 668.81 L161.00 665.38 L161.45 668.15 L161.90 665.38 L162.35 667.83 L162.80 665.18 L163.25 668.11 L163.70 665.87 L164.15 668.62 L164.60 665.55 L165.05 668.35 L165.50 665.82 L165.95 667.92 L166.40 664.53 L166.85 668.76 L167.30 664.67 L167.75 668.85 L168.20 665.46 L168.65 668.35 L169.10 665.41 L169.55 668.06 L170.00 665.51 L170.45 668.35 L170.90 665.28 L171.35 668.06 L171.80 665.66 L172.25 667.76 L172.70 664.98 L173.15 668.38 L173.60 665.27 L174.05 668.57 L174.50 664.87 L174.95 668.26 L175.40 665.87 L175.85 668.16 L176.30 665.45 L176.75 668.22 L177.20 664.90 L177.65 668.25 L178.10 665.88 L178.55 667.56 L179.00 665.67 L179.45 668.65 L179.90 664.99 L180.35 668.74 L180.80 665.71 L181.25 668.00 L181.70 665.45 L182.15 667.76 L182.60 664.68 L183.05 667.51 L183.50 665.87 L183.95 668.71 L184.40 664.63 L184.85 667.88 L185.30 665.27 L185.75 667.82 L186.20 664.85 L186.65 668.34 L187.10 663.99 L187.55 668.59 L188.00 665.76 L188.45 667.80 L188.90 664.64 L189.35 667.78 L189.80 665.31 L190.25 668.90 L190.70 664.90 L191.15 667.59 L191.60 665.34 L192.05 668.39 L192.50 665.12 L192.95 668.85 L193.40 665.40 L193.85 668.57 L194.30 665.64 L194.75 668.81 L195.20 664.96 L195.65 667.74 L196.10 664.70 L196.55 667.78 L197.00 665.50 L197.45 669.65 L197.90 664.81 L198.35 668.85 L198.80 665.66 L199.25 668.30 L199.70 664.97 L200.15 668.31 L200.60 664.79 L201.05 667.71 L201.50 664.56 L201.95 667.90 L202.40 665.65 L202.85 668.39 L203.30 664.55 L203.75 667.86 L204.20 664.57 L204.65 667.52 L205.10 665.82 L205.55 667.94 L206.00 663.69 L206.45 667.67 L206.90 665.58 L207.35 668.39 L207.80 665.38 L208.25 667.95 L208.70 663.38 L209.15 667.79 L209.60 665.87 L210.05 668.49 L210.50 665.12 L210.95 667.61 L211.40 664.91 L211.85 667.58 L212.30 665.19 L212.75 668.01 L213.20 664.64 L213.65 668.22 L214.10 665.85 L214.55 667.94 L215.00 665.50 L215.45 668.25 L215.90 665.75 L216.35 668.65 L216.80 665.59 L217.25 668.13 L217.70 664.56 L218.15 668.83 L218.60 664.99 L219.05 668.40 L219.50 665.87 L219.95 668.05 L220.40 664.54 L220.85 668.87 L221.30 665.86 L221.75 667.51 L222.20 665.09 L222.65 668.36 L223.10 665.52 L223.55 667.76 L224.00 665.16 L224.45 667.70 L224.90 664.65 L225.35 668.16 L225.80 665.24 L226.25 668.40 L226.70 664.95 L227.15 668.15 L227.60 665.01 L228.05 667.62 L228.50 664.81 L228.95 667.60 L229.40 665.08 L229.85 667.71 L230.30 664.92 L230.75 668.82 L231.20 665.88 L231.65 668.48 L232.10 664.55 L232.55 668.57 L233.00 665.89 L233.45 668.22 L233.90 665.17 L234.35 668.02 L234.80 665.67 L235.25 668.47 L235.70 665.23 L236.15 667.96 L236.60 664.63 L237.05 667.86 L237.50 665.05 L237.95 667.60 L238.40 665.27 L238.85 668.13 L239.30 665.61 L239.75 668.74 L240.20 665.79 L240.65 668.71 L241.10 665.23 L241.55 667.57 L242.00 665.68 L242.45 668.77 L242.90 664.84 L243.35 667.85 L243.80 665.59 L244.25 668.86 L244.70 665.21 L245.15 668.07 L245.60 665.52 L246.05 668.47 L246.50 664.52 L246.95 669.86 L247.40 665.71 L247.85 668.34 L248.30 665.36 L248.75 668.64 L249.20 665.43 L249.65 668.00 L250.10 665.78 L250.55 668.01 L251.00 665.39 L251.45 668.13 L251.90 664.59 L252.35 667.86 L252.80 665.68 L253.25 668.61 L253.70 665.68 L254.15 667.67 L254.60 665.69 L255.05 668.45 L255.50 665.80 L255.95 667.68 L256.40 664.93 L256.85 668.17 L257.30 665.51 L257.75 667.71 L258.20 665.54 L258.65 668.75 L259.10 665.00 L259.55 667.50 L260.00 664.68 L260.45 668.23 L260.90 664.58 L261.35 667.73 L261.80 665.87 L262.25 669.64 L262.70 665.89 L263.15 668.69 L263.60 665.83 L264.05 667.77 L264.50 665.00 L264.95 668.11 L265.40 665.61 L265.85 667.79 L266.30 663.29 L266.75 667.76 L267.20 665.52 L267.65 668.60 L268.10 665.53 L268.55 667.70 L269.00 664.93 L269.45 668.57 L269.90 664.60 L270.35 668.29 L270.80 665.09 L271.25 668.49 L271.70 665.80 L272.15 667.70 L272.60 664.94 L273.05 667.94 L273.50 665.27 L273.95 667.78 L274.40 665.28 L274.85 667.79 L275.30 665.24 L275.75 668.54 L276.20 665.03 L276.65 667.69 L277.10 665.80 L277.55 668.66 L278.00 665.51 L278.45 668.82 L278.90 665.60 L279.35 668.66 L279.80 665.46 L280.25 667.60 L280.70 665.83 L281.15 668.33 L281.60 664.59 L282.05 668.08 L282.50 664.67 L282.95 668.54 L283.40 664.88 L283.85 667.58 L284.30 665.53 L284.75 667.88 L285.20 665.34 L285.65 667.65 L286.10 665.33 L286.55 667.61 L287.00 663.68 L287.45 667.72 L287.90 664.85 L288.35 668.00 L288.80 664.87 L289.25 668.83 L289.70 665.42 L290.15 667.52 L290.60 665.73 L291.05 668.00 L291.50 665.01 L291.95 668.18 L292.40 664.60 L292.85 668.02 L293.30 664.51 L293.75 668.73 L294.20 665.49 L294.65 667.93 L295.10 664.58 L295.55 668.21 L296.00 665.08 L296.45 667.75 L296.90 664.85 L297.35 667.97 L297.80 665.76 L298.25 668.31 L298.70 664.95 L299.15 668.33 L299.60 664.61 L300.05 667.67 L300.50 665.88 L300.95 668.85 L301.40 664.84 L301.85 668.42 L302.30 664.56 L302.75 667.64 L303.20 664.80 L303.65 668.69 L304.10 665.58 L304.55 667.89 L305.00 665.90 L305.45 668.41 L305.90 665.90 L306.35 667.74 L306.80 663.29 L307.25 668.15 L307.70 665.39 L308.15 667.65 L308.60 665.55 L309.05 668.29 L309.50 665.14 L309.95 667.57 L310.40 665.20 L310.85 667.65 L311.30 665.79 L311.75 667.57 L312.20 665.67 L312.65 667.58 L313.10 665.60 L313.55 668.53 L314.00 665.14 L314.45 667.50 L314.90 665.57 L315.35 669.43 L315.80 665.17 L316.25 667.62 L316.70 663.28 L317.15 667.94 L317.60 665.56 L318.05 669.86 L318.50 664.63 L318.95 667.67 L319.40 664.84 L319.85 668.42 L320.30 665.62 L320.75 668.70 L321.20 665.24 L321.65 667.51 L322.10 664.59 L322.55 668.19 L323.00 664.68 L323.45 667.63 L323.90 665.44 L324.35 667.76 L324.80 665.08 L325.25 668.19 L325.70 665.08 L326.15 668.51 L326.60 665.87 L327.05 667.64 L327.50 664.83 L327.95 668.35 L328.40 665.60 L328.85 668.55 L329.30 663.35 L329.75 668.84 L330.20 665.02 L330.65 668.85 L331.10 665.81 L331.55 668.45 L332.00 665.08 L332.45 668.45 L332.90 664.54 L333.35 668.59 L333.80 664.84 L334.25 668.20 L334.70 665.62 L335.15 668.52 L335.60 665.81 L336.05 668.41 L336.50 665.69 L336.95 668.52 L337.40 665.69 L337.85 670.27 L338.30 665.66 L338.75 668.61 L339.20 665.10 L339.65 667.78 L340.10 664.92 L340.55 668.63 L341.00 665.43 L341.45 667.55 L341.90 664.74 L342.35 668.78 L342.80 665.48 L343.25 669.28 L343.70 664.52 L344.15 668.77 L344.60 665.56 L345.05 668.74 L345.50 665.73 L345.95 667.99 L346.40 665.20 L346.85 668.27 L347.30 664.51 L347.75 668.27 L348.20 665.06 L348.65 667.88 L349.10 665.31 L349.55 668.30 L350.00 664.61 L350.45 667.55 L350.90 665.10 L351.35 668.00 L351.80 665.77 L352.25 668.23 L352.70 664.72 L353.15 668.56 L353.60 665.19 L354.05 667.83 L354.50 664.69 L354.95 668.62 L355.40 665.08 L355.85 668.87 L356.30 665.80 L356.75 668.33 L357.20 665.33 L357.65 668.34 L358.10 664.67 L358.55 668.44 L359.00 665.78 L359.45 668.47 L359.90 665.85 L360.35 667.73 L360.80 665.19 L361.25 668.80 L361.70 664.83 L362.15 667.54 L362.60 665.73 L363.05 667.93 L363.50 665.43 L363.95 667.82 L364.40 665.27 L364.85 668.26 L365.30 664.94 L365.75 668.38 L366.20 665.41 L366.65 667.51 L367.10 665.81 L367.55 668.15 L368.00 665.61 L368.45 668.79 L368.90 664.97 L369.35 668.40 L369.80 664.93 L370.25 668.35 L370.70 665.13 L371.15 668.42 L371.60 665.31 L372.05 667.70 L372.50 665.48 L372.95 668.70 L373.40 663.94 L373.85 668.09 L374.30 664.67 L374.75 668.21 L375.20 664.75 L375.65 668.61 L376.10 665.02 L376.55 668.30 L377.00 664.91 L377.45 667.92 L377.90 665.76 L378.35 667.76 L378.80 665.29 L379.25 668.77 L379.70 664.69 L380.15 667.92 L380.60 665.28 L381.05 667.55 L381.50 665.84 L381.95 667.89 L382.40 664.17 L382.85 668.08 L383.30 664.90 L383.75 668.77 L384.20 664.55 L384.65 668.29 L385.10 665.14 L385.55 668.39 L386.00 665.37 L386.45 668.76 L386.90 665.64 L387.35 668.58 L387.80 664.76 L388.25 668.41 L388.70 665.13 L389.15 668.74 L389.60 665.83 L390.05 667.83 L390.50 665.65 L390.95 668.02 L391.40 665.14 L391.85 668.06 L392.30 665.72 L392.75 668.75 L393.20 665.00 L393.65 668.90 L394.10 664.97 L394.55 667.64 L395.00 664.79 L395.45 668.04 L395.90 665.09 L396.35 667.85 L396.80 665.82 L397.25 668.59 L397.70 664.78 L398.15 668.13 L398.60 665.23 L399.05 668.66 L399.50 665.34 L399.95 668.52 L400.40 664.54 L400.85 668.61 L401.30 665.24 L401.75 667.80 L402.20 665.57 L402.65 668.60 L403.10 665.38 L403.55 667.52 L404.00 665.09 L404.45 667.98 L404.90 665.23 L405.35 667.87 L405.80 664.84 L406.25 668.12 L406.70 664.59 L407.15 668.47 L407.60 664.83 L408.05 668.47 L408.50 665.79 L408.95 668.52 L409.40 665.04 L409.85 667.52 L410.30 665.35 L410.75 667.75 L411.20 664.80 L411.65 668.30 L412.10 665.57 L412.55 668.45 L413.00 664.61 L413.45 668.06 L413.90 665.16 L414.35 667.83 L414.80 664.81 L415.25 667.95 L415.70 665.20 L416.15 668.70 L416.60 665.14 L417.05 668.43 L417.50 665.88 L417.95 668.12 L418.40 665.14 L418.85 667.73 L419.30 665.70 L419.75 669.81 L420.20 664.75 L420.65 667.71 L421.10 665.59 L421.55 667.98 L422.00 665.12 L422.45 667.83 L422.90 665.88 L423.35 668.02 L423.80 664.58 L424.25 668.01 L424.70 665.75 L425.15 668.43 L425.60 664.69 L426.05 668.02 L426.50 665.77 L426.95 668.40 L427.40 664.89 L427.85 667.54 L428.30 664.81 L428.75 667.88 L429.20 665.78 L429.65 668.31 L430.10 665.42 L430.55 668.81 L431.00 665.60 L431.45 669.74 L431.90 665.39 L432.35 668.29 L432.80 665.52 L433.25 668.48 L433.70 665.89 L434.15 668.16 L434.60 664.61 L435.05 668.76 L435.50 665.80 L435.95 667.93 L436.40 665.19 L436.85 667.59 L437.30 664.97 L437.75 668.60 L438.20 665.26 L438.65 667.73 L439.10 665.23 L439.55 668.47 L440.00 665.57 L440.45 667.54 L440.90 664.77 L441.35 667.76 L441.80 665.22 L442.25 667.88 L442.70 664.94 L443.15 668.85 L443.60 664.66 L444.05 668.52 L444.50 665.71 L444.95 668.38 L445.40 665.39 L445.85 667.87 L446.30 664.64 L446.75 668.17 L447.20 665.28 L447.65 668.64 L448.10 664.96 L448.55 668.04 L449.00 664.95 L449.45 667.80 L449.90 665.49 L450.35 667.78 L450.80 665.26 L451.25 667.74 L451.70 665.11 L452.15 668.09 L452.60 665.80 L453.05 669.76 L453.50 664.93 L453.95 667.66 L454.40 665.08 L454.85 669.71 L455.30 665.35 L455.75 668.64 L456.20 665.26 L456.65 668.43 L457.10 665.37 L457.55 668.18 L458.00 665.52 L458.45 667.95 L458.90 664.57 L459.35 668.74 L459.80 664.86 L460.25 668.17 L460.70 664.83 L461.15 667.51 L461.60 664.77 L462.05 667.93 L462.50 664.71 L462.95 668.08 L463.40 665.52 L463.85 667.73 L464.30 665.64 L464.75 668.56 L465.20 665.50 L465.65 668.14 L466.10 665.32 L466.55 668.49 L467.00 665.77 L467.45 667.96 L467.90 664.63 L468.35 667.53 L468.80 664.98 L469.25 667.98 L469.70 665.65 L470.15 668.50 L470.60 665.35 L471.05 668.24 L471.50 664.65 L471.95 668.42 L472.40 665.75 L472.85 668.09 L473.30 664.93 L473.75 668.15 L474.20 664.53 L474.65 667.56 L475.10 664.82 L475.55 668.49 L476.00 665.72 L476.45 668.20 L476.90 665.20 L477.35 668.59 L477.80 664.75 L478.25 668.77 L478.70 664.93 L479.15 668.47 L479.60 664.92 L480.05 667.52 L480.50 665.45 L480.95 667.58 L481.40 665.85 L481.85 667.58 L482.30 665.27 L482.75 668.49 L483.20 665.19 L483.65 667.57 L484.10 663.63 L484.55 668.21 L485.00 665.72 L485.45 668.40 L485.90 665.86 L486.35 668.41 L486.80 664.53 L487.25 668.37 L487.70 664.80 L488.15 668.28 L488.60 664.61 L489.05 668.16 L489.50 665.60 L489.95 668.42 L490.40 665.20 L490.85 667.88 L491.30 665.19 L491.75 668.19 L492.20 665.72 L492.65 668.00 L493.10 665.46 L493.55 668.15 L494.00 663.56 L494.45 668.78 L494.90 665.46 L495.35 668.52 L495.80 665.82 L496.25 668.72 L496.70 664.68 L497.15 667.93 L497.60 665.34 L498.05 667.86 L498.50 665.55 L498.95 668.42 L499.40 665.82 L499.85 668.80 L500.30 664.78 L500.75 667.75 L501.20 665.40 L501.65 668.06 L502.10 664.91 L502.55 667.94 L503.00 665.60 L503.45 668.63 L503.90 665.08 L504.35 668.10 L504.80 665.02 L505.25 667.57 L505.70 665.46 L506.15 668.61 L506.60 665.47 L507.05 667.67 L507.50 665.53 L507.95 668.43 L508.40 664.79 L508.85 667.84 L509.30 665.04 L509.75 667.67 L510.20 665.50 L510.65 668.52 L511.10 665.65 L511.55 668.45 L512.00 665.61 L512.45 669.83 L512.90 664.68 L513.35 667.59 L513.80 664.91 L514.25 668.17 L514.70 664.71 L515.15 668.00 L515.60 665.16 L516.05 668.28 L516.50 664.61 L516.95 669.33 L517.40 664.56 L517.85 668.85 L518.30 665.89 L518.75 667.78 L519.20 665.41 L519.65 667.51 L520.10 664.56 L520.55 668.23 L521.00 665.23 L521.45 668.76 L521.90 664.53 L522.35 667.92 L522.80 665.56 L523.25 667.69 L523.70 664.67 L524.15 668.58 L524.60 664.52 L525.05 668.38 L525.50 664.62 L525.95 668.55 L526.40 664.78 L526.85 667.66 L527.30 666.24 L527.75 669.53 L528.20 665.92 L528.65 669.19 L529.10 665.85 L529.55 669.14 L530.00 665.71 L530.45 669.74 L530.90 665.76 L531.35 669.21 L531.80 665.60 L532.25 668.46 L532.70 666.35 L533.15 669.44 L533.60 665.66 L534.05 670.55 L534.50 665.71 L534.95 669.12 L535.40 666.47 L535.85 668.74 L536.30 666.45 L536.75 668.46 L537.20 665.64 L537.65 670.95 L538.10 666.05 L538.55 669.64 L539.00 666.57 L539.45 669.41 L539.90 666.39 L540.35 669.31 L540.80 666.55 L541.25 668.83 L541.70 665.82 L542.15 669.15 L542.60 665.83 L543.05 668.05 L543.50 665.69 L543.95 667.96 L544.40 664.77 L544.85 668.36 L545.30 664.71 L545.75 668.10 L546.20 665.03 L546.65 667.83 L547.10 664.71 L547.55 668.80 L548.00 665.77 L548.45 668.72 L548.90 665.30 L549.35 667.82 L549.80 665.51 L550.25 667.55 L550.70 665.47 L551.15 668.21 L551.60 665.84 L552.05 668.23 L552.50 665.51 L552.95 668.87 L553.40 664.55 L553.85 668.63 L554.30 664.57 L554.75 668.30 L555.20 664.83 L555.65 668.12 L556.10 664.68 L556.55 668.67 L557.00 664.76 L557.45 668.34 L557.90 665.66 L558.35 667.74 L558.80 665.89 L559.25 667.77 L559.70 665.75 L560.15 667.54 L560.60 664.96 L561.05 668.36 L561.50 665.90 L561.95 667.82 L562.40 664.93 L562.85 669.71 L563.30 665.85 L563.75 667.59 L564.20 665.07 L564.65 667.81 L565.10 665.35 L565.55 668.47 L566.00 665.69 L566.45 667.64 L566.90 665.09 L567.35 668.77 L567.80 665.73 L568.25 668.66 L568.70 665.02 L569.15 667.60 L569.60 665.35 L570.05 668.73 L570.50 665.18 L570.95 668.65 L571.40 664.85 L571.85 667.83 L572.30 665.06 L572.75 668.85 L573.20 664.76 L573.65 668.73 L574.10 664.85 L574.55 668.04 L575.00 665.70 L575.45 668.07 L575.90 665.80 L576.35 667.86 L576.80 664.77 L577.25 668.69 L577.70 664.62 L578.15 667.73 L578.60 665.31 L579.05 667.53 L579.50 664.51 L579.95 668.04 L580.40 665.50 L580.85 668.27 L581.30 665.72 L581.75 668.25 L582.20 665.37 L582.65 668.61 L583.10 664.90 L583.55 668.23 L584.00 665.86 L584.45 668.69 L584.90 663.55 L585.35 667.64 L585.80 665.07 L586.25 668.68 L586.70 664.65 L587.15 668.54 L587.60 663.85 L588.05 668.60 L588.50 664.63 L588.95 668.30 L589.40 665.43 L589.85 668.56 L590.30 665.41 L590.75 669.62 L591.20 664.55 L591.65 668.13 L592.10 664.91 L592.55 668.78 L593.00 665.89 L593.45 667.83 L593.90 664.50 L594.35 668.49 L594.80 665.09 L595.25 668.64 L595.70 665.23 L596.15 667.67 L596.60 664.60 L597.05 668.19 L597.50 665.21 L597.95 667.74 L598.40 664.57 L598.85 667.75 L599.30 664.97 L599.75 668.86 L600.20 665.31 L600.65 668.85 L601.10 664.67 L601.55 668.88 L602.00 665.51 L602.45 668.13 L602.90 664.72 L603.35 668.53 L603.80 665.73 L604.25 668.31 L604.70 665.25 L605.15 669.41 L605.60 665.86 L606.05 667.66 L606.50 665.09 L606.95 667.79 L607.40 665.10 L607.85 667.77 L608.30 664.87 L608.75 667.58 L609.20 664.83 L609.65 667.94 L610.10 665.57 L610.55 667.65 L611.00 665.62 L611.45 667.60 L611.90 665.06 L612.35 668.29 L612.80 665.11 L613.25 667.74 L613.70 665.38 L614.15 668.89 L614.60 665.15 L615.05 667.68 L615.50 665.52 L615.95 668.58 L616.40 665.32 L616.85 668.59 L617.30 664.90 L617.75 668.05 L618.20 664.98 L618.65 668.44 L619.10 665.47 L619.55 668.86 L620.00 664.81 L620.45 668.15 L620.90 665.46 L621.35 668.86 L621.80 664.95 L622.25 667.68 L622.70 665.05 L623.15 667.91 L623.60 665.72 L624.05 668.67 L624.50 664.82 L624.95 668.78 L625.40 665.48 L625.85 669.78 L626.30 665.71 L626.75 668.42 L627.20 665.05 L627.65 668.76 L628.10 665.29 L628.55 667.86 L629.00 664.58 L629.45 669.87 L629.90 663.85 L630.35 668.86 L630.80 663.87 L631.25 667.95 L631.70 665.17 L632.15 668.59 L632.60 664.96 L633.05 668.01 L633.50 663.57 L633.95 668.36 L634.40 664.67 L634.85 667.55 L635.30 665.53 L635.75 668.14 L636.20 665.48 L636.65 669.54 L637.10 665.43 L637.55 668.63 L638.00 665.17 L638.45 667.57 L638.90 665.07 L639.35 668.71 L639.80 664.65 L640.25 669.83 L640.70 665.39 L641.15 667.96 L641.60 665.44 L642.05 668.56 L642.50 665.39 L642.95 667.53 L643.40 665.89 L643.85 667.80 L644.30 665.14 L644.75 668.71 L645.20 665.73 L645.65 668.24 L646.10 665.31 L646.55 667.98 L647.00 665.87 L647.45 668.35 L647.90 665.27 L648.35 668.30 L648.80 665.18 L649.25 668.66 L649.70 664.72 L650.15 668.27 L650.60 664.86 L651.05 667.72 L651.50 665.38 L651.95 668.70 L652.40 665.05 L652.85 667.67 L653.30 665.00 L653.75 667.56 L654.20 665.33 L654.65 669.22 L655.10 665.21 L655.55 668.14 L656.00 665.45 L656.45 668.47 L656.90 664.54 L657.35 668.65 L657.80 665.50 L658.25 667.68 L658.70 663.16 L659.15 668.87 L659.60 665.37 L660.05 668.50 L660.50 664.71 L660.95 669.54 L661.40 665.37 L661.85 668.17 L662.30 664.12 L662.75 670.17 L663.20 664.92 L663.65 667.79 L664.10 665.69 L664.55 668.81 L665.00 665.84 L665.45 668.06 L665.90 665.64 L666.35 668.50 L666.80 665.82 L667.25 668.04 L667.70 665.39 L668.15 667.54 L668.60 664.51 L669.05 668.81 L669.50 665.32 L669.95 667.55 L670.40 664.68 L670.85 668.39 L671.30 664.94 L671.75 668.06 L672.20 665.05 L672.65 668.11 L673.10 664.85 L673.55 667.74 L674.00 663.79 L674.45 667.94 L674.90 665.43 L675.35 668.68 L675.80 664.07 L676.25 668.72 L676.70 665.83 L677.15 668.76 L677.60 664.71 L678.05 667.77 L678.50 664.86 L678.95 668.08 L679.40 665.89 L679.85 668.67 L680.30 665.56 L680.75 668.41 L681.20 665.74 L681.65 668.23" stroke="#ff0000" stroke-width="0.8" fill="none" stroke-linejoin="round" /><path d="M190.00 666.50 L190.80 715.70 L191.60 666.50" stroke="#ff0000" stroke-width="1.2" fill="none" stroke-linejoin="round" /><g font-family="Liberation Sans" font-size="10.2" fill="#1a1a1a"><path d="M75.05 378.4V506.1" stroke="#6e6e6e" stroke-width="1.6" fill="none"/><path d="M68.55 378.40H75.05M68.55 442.25H75.05M68.55 506.10H75.05M72.05 499.72H75.05M72.05 493.33H75.05M72.05 486.95H75.05M72.05 480.56H75.05M72.05 474.18H75.05M72.05 467.79H75.05M72.05 461.41H75.05M72.05 455.02H75.05M72.05 448.63H75.05M72.05 435.87H75.05M72.05 429.48H75.05M72.05 423.09H75.05M72.05 416.71H75.05M72.05 410.32H75.05M72.05 403.94H75.05M72.05 397.56H75.05M72.05 391.17H75.05M72.05 384.78H75.05M678.3 378.40H684.8M678.3 442.25H684.8M678.3 506.10H684.8M678.3 499.72H681.3M678.3 493.33H681.3M678.3 486.95H681.3M678.3 480.56H681.3M678.3 474.18H681.3M678.3 467.79H681.3M678.3 461.41H681.3M678.3 455.02H681.3M678.3 448.63H681.3M678.3 435.87H681.3M678.3 429.48H681.3M678.3 423.09H681.3M678.3 416.71H681.3M678.3 410.32H681.3M678.3 403.94H681.3M678.3 397.56H681.3M678.3 391.17H681.3M678.3 384.78H681.3" stroke="#6e6e6e" stroke-width="1.3" fill="none"/><path d="M678.3 378.4V506.1" stroke="#6e6e6e" stroke-width="1.6" fill="none"/><path d="M69.05 506.1H678.3" stroke="#6e6e6e" stroke-width="1.6" fill="none"/><path d="M79.59 506.1V509.6M86.47 506.1V509.6M93.36 506.1V509.6M100.24 506.1V509.6M107.12 506.1V509.6M114.00 506.1V509.6M120.88 506.1V509.6M127.76 506.1V512.6M134.65 506.1V509.6M141.53 506.1V509.6M148.41 506.1V509.6M155.29 506.1V509.6M162.17 506.1V509.6M169.05 506.1V509.6M175.94 506.1V509.6M182.82 506.1V509.6M189.70 506.1V509.6M196.58 506.1V512.6M203.46 506.1V509.6M210.34 506.1V509.6M217.23 506.1V509.6M224.11 506.1V509.6M230.99 506.1V509.6M237.87 506.1V509.6M244.75 506.1V509.6M251.63 506.1V509.6M258.52 506.1V509.6M265.40 506.1V512.6M272.28 506.1V509.6M279.16 506.1V509.6M286.04 506.1V509.6M292.92 506.1V509.6M299.81 506.1V509.6M306.69 506.1V509.6M313.57 506.1V509.6M320.45 506.1V509.6M327.33 506.1V509.6M334.21 506.1V512.6M341.10 506.1V509.6M347.98 506.1V509.6M354.86 506.1V509.6M361.74 506.1V509.6M368.62 506.1V509.6M375.51 506.1V509.6M382.39 506.1V509.6M389.27 506.1V509.6M396.15 506.1V509.6M403.03 506.1V512.6M409.91 506.1V509.6M416.80 506.1V509.6M423.68 506.1V509.6M430.56 506.1V509.6M437.44 506.1V509.6M444.32 506.1V509.6M451.20 506.1V509.6M458.09 506.1V509.6M464.97 506.1V509.6M471.85 506.1V512.6M478.73 506.1V509.6M485.61 506.1V509.6M492.49 506.1V509.6M499.38 506.1V509.6M506.26 506.1V509.6M513.14 506.1V509.6M520.02 506.1V509.6M526.90 506.1V509.6M533.78 506.1V509.6M540.67 506.1V512.6M547.55 506.1V509.6M554.43 506.1V509.6M561.31 506.1V509.6M568.19 506.1V509.6M575.07 506.1V509.6M581.96 506.1V509.6M588.84 506.1V509.6M595.72 506.1V509.6M602.60 506.1V509.6M609.48 506.1V512.6M616.36 506.1V509.6M623.25 506.1V509.6M630.13 506.1V509.6M637.01 506.1V509.6M643.89 506.1V509.6M650.77 506.1V509.6M657.65 506.1V509.6M664.54 506.1V509.6M671.42 506.1V509.6M678.30 506.1V512.6" stroke="#6e6e6e" stroke-width="1.3" fill="none"/><text x="64.05" y="382.20" text-anchor="end">10000</text><text x="689.3" y="382.20">10000</text><text x="64.05" y="446.05" text-anchor="end">0</text><text x="689.3" y="446.05">0</text><text x="64.05" y="509.90" text-anchor="end">-10000</text><text x="689.3" y="509.90">-10000</text><text x="127.76" y="528.40" text-anchor="middle">19:18:23</text><text x="196.58" y="528.40" text-anchor="middle">22:05:03</text><text x="265.40" y="528.40" text-anchor="middle">00:51:43</text><text x="334.21" y="528.40" text-anchor="middle">03:38:23</text><text x="403.03" y="528.40" text-anchor="middle">06:25:03</text><text x="471.85" y="528.40" text-anchor="middle">09:11:43</text><text x="540.67" y="528.40" text-anchor="middle">11:58:23</text><text x="609.48" y="528.40" text-anchor="middle">14:45:03</text><text x="678.30" y="528.40" text-anchor="middle">17:31:43</text></g><path d="M120.0 417.65H121.0V419.15H120.0ZM121.0 418.31H122.0V419.81H121.0ZM122.0 417.62H123.0V419.12H122.0ZM123.0 418.63H124.0V420.13H123.0ZM124.0 418.04H125.0V419.54H124.0ZM125.0 417.42H126.0V418.92H125.0ZM126.0 417.88H127.0V419.38H126.0ZM126.0 449.50H127.0V452.40H126.0ZM127.0 418.31H128.0V419.81H127.0ZM127.0 449.50H128.0V452.40H127.0ZM128.0 417.10H129.0V418.60H128.0ZM128.0 449.50H129.0V452.40H128.0ZM129.0 417.86H130.0V419.36H129.0ZM129.0 449.50H130.0V452.40H129.0ZM130.0 417.96H131.0V419.46H130.0ZM130.0 449.50H131.0V452.40H130.0ZM131.0 418.05H132.0V419.55H131.0ZM131.0 449.50H132.0V452.40H131.0ZM132.0 418.23H133.0V419.73H132.0ZM132.0 449.50H133.0V452.40H132.0ZM133.0 416.95H134.0V418.45H133.0ZM133.0 449.50H134.0V452.40H133.0ZM134.0 418.14H135.0V419.64H134.0ZM134.0 449.50H135.0V452.40H134.0ZM135.0 417.31H136.0V418.81H135.0ZM135.0 449.50H136.0V452.40H135.0ZM136.0 417.07H137.0V419.71H136.0ZM137.0 417.63H138.0V420.11H137.0ZM138.0 417.37H139.0V419.82H138.0ZM139.0 417.53H140.0V419.87H139.0ZM140.0 417.19H141.0V419.53H140.0ZM141.0 417.30H142.0V424.68H141.0ZM142.0 416.10H143.0V425.97H142.0ZM143.0 416.41H144.0V425.53H143.0ZM144.0 416.14H145.0V424.58H144.0ZM145.0 415.81H146.0V425.60H145.0ZM146.0 416.46H147.0V424.25H146.0ZM147.0 416.08H148.0V424.48H147.0ZM148.0 415.47H149.0V425.29H148.0ZM149.0 415.15H150.0V425.62H149.0ZM150.0 415.60H151.0V426.03H150.0ZM151.0 415.16H152.0V425.85H151.0ZM152.0 414.80H153.0V424.39H152.0ZM153.0 414.56H154.0V425.73H153.0ZM154.0 414.88H155.0V417.63H154.0ZM155.0 414.89H156.0V417.61H155.0ZM156.0 414.79H157.0V417.18H156.0ZM157.0 414.23H158.0V416.50H157.0ZM158.0 414.22H159.0V417.07H158.0ZM159.0 414.62H160.0V417.33H159.0ZM160.0 414.30H161.0V416.97H160.0ZM161.0 414.44H162.0V416.66H161.0ZM162.0 413.13H163.0V415.92H162.0ZM163.0 413.56H164.0V416.15H163.0ZM164.0 413.19H165.0V416.05H164.0ZM165.0 413.03H166.0V415.83H165.0ZM166.0 413.33H167.0V416.15H166.0ZM167.0 413.46H168.0V415.93H167.0ZM167.0 450.50H168.0V457.00H167.0ZM168.0 413.23H169.0V415.81H168.0ZM168.0 450.50H169.0V457.00H168.0ZM169.0 413.44H170.0V415.80H169.0ZM169.0 450.50H170.0V457.00H169.0ZM170.0 413.59H171.0V415.88H170.0ZM170.0 450.50H171.0V457.00H170.0ZM171.0 413.01H172.0V415.58H171.0ZM171.0 450.50H172.0V457.00H171.0ZM172.0 413.57H173.0V415.93H172.0ZM172.0 450.50H173.0V457.00H172.0ZM173.0 413.06H174.0V415.84H173.0ZM173.0 450.50H174.0V457.00H173.0ZM174.0 412.14H175.0V414.85H174.0ZM174.0 450.50H175.0V457.00H174.0ZM175.0 413.29H176.0V416.00H175.0ZM175.0 450.50H176.0V457.00H175.0ZM176.0 412.81H177.0V415.17H176.0ZM176.0 450.50H177.0V457.00H176.0ZM177.0 412.33H178.0V415.19H177.0ZM177.0 450.50H178.0V457.00H177.0ZM178.0 412.61H179.0V414.91H178.0ZM178.0 450.50H179.0V457.00H178.0ZM179.0 411.90H180.0V414.73H179.0ZM179.0 450.50H180.0V457.00H179.0ZM180.0 412.02H181.0V414.80H180.0ZM180.0 450.50H181.0V457.00H180.0ZM181.0 412.04H182.0V415.23H181.0ZM181.0 450.50H182.0V457.00H181.0ZM182.0 411.55H183.0V413.94H182.0ZM182.0 450.50H183.0V457.00H182.0ZM183.0 411.26H184.0V414.03H183.0ZM183.0 450.50H184.0V457.00H183.0ZM184.0 411.77H185.0V414.28H184.0ZM184.0 450.50H185.0V457.00H184.0ZM185.0 412.32H186.0V415.09H185.0ZM185.0 450.50H186.0V457.00H185.0ZM186.0 411.82H187.0V414.81H186.0ZM186.0 450.50H187.0V457.00H186.0ZM187.0 411.02H188.0V414.05H187.0ZM188.0 411.75H189.0V414.45H188.0ZM189.0 411.49H190.0V414.37H189.0ZM190.0 410.88H191.0V413.37H190.0ZM191.0 410.60H192.0V413.47H191.0ZM192.0 410.66H193.0V437.19H192.0ZM193.0 411.27H194.0V436.88H193.0ZM194.0 410.70H195.0V437.26H194.0ZM195.0 411.64H196.0V438.01H195.0ZM196.0 411.25H197.0V436.85H196.0ZM197.0 410.67H198.0V436.85H197.0ZM198.0 410.48H199.0V438.28H198.0ZM199.0 410.86H200.0V437.91H199.0ZM200.0 410.92H201.0V437.44H200.0ZM201.0 409.90H202.0V439.14H201.0ZM202.0 410.50H203.0V437.49H202.0ZM203.0 410.35H204.0V437.38H203.0ZM204.0 410.49H205.0V438.17H204.0ZM205.0 410.97H206.0V434.66H205.0ZM206.0 410.54H207.0V433.19H206.0ZM207.0 410.82H208.0V433.77H207.0ZM208.0 410.01H209.0V432.74H208.0ZM209.0 410.45H210.0V434.36H209.0ZM210.0 409.51H211.0V433.02H210.0ZM211.0 409.34H212.0V432.38H211.0ZM212.0 410.16H213.0V433.40H212.0ZM213.0 409.68H214.0V433.91H213.0ZM214.0 408.97H215.0V433.15H214.0ZM215.0 409.65H216.0V432.92H215.0ZM216.0 408.93H217.0V432.60H216.0ZM217.0 409.97H218.0V434.09H217.0ZM218.0 408.99H219.0V435.05H218.0ZM219.0 409.43H220.0V436.65H219.0ZM220.0 409.19H221.0V436.05H220.0ZM221.0 408.44H222.0V436.78H221.0ZM222.0 408.44H223.0V437.19H222.0ZM223.0 408.61H224.0V436.12H223.0ZM224.0 408.81H225.0V435.76H224.0ZM225.0 408.76H226.0V435.85H225.0ZM226.0 408.36H227.0V411.46H226.0ZM227.0 408.98H228.0V411.93H227.0ZM228.0 407.98H229.0V410.45H228.0ZM229.0 408.04H230.0V410.70H229.0ZM229.0 448.70H230.0V459.30H229.0ZM230.0 407.50H231.0V409.86H230.0ZM230.0 448.70H231.0V459.30H230.0ZM231.0 407.59H232.0V410.42H231.0ZM231.0 448.70H232.0V459.30H231.0ZM232.0 407.39H233.0V409.80H232.0ZM232.0 448.70H233.0V459.30H232.0ZM233.0 408.17H234.0V410.94H233.0ZM233.0 448.70H234.0V459.30H233.0ZM234.0 407.55H235.0V410.68H234.0ZM234.0 448.70H235.0V459.30H234.0ZM235.0 407.95H236.0V411.11H235.0ZM235.0 448.70H236.0V459.30H235.0ZM236.0 407.64H237.0V410.25H236.0ZM236.0 448.70H237.0V459.30H236.0ZM237.0 406.60H238.0V409.61H237.0ZM237.0 448.70H238.0V459.30H237.0ZM238.0 406.46H239.0V409.44H238.0ZM238.0 448.70H239.0V459.30H238.0ZM239.0 406.93H240.0V409.95H239.0ZM239.0 448.70H240.0V459.30H239.0ZM240.0 406.72H241.0V409.18H240.0ZM240.0 448.70H241.0V459.30H240.0ZM241.0 406.60H242.0V409.39H241.0ZM241.0 448.70H242.0V459.30H241.0ZM242.0 407.33H243.0V410.25H242.0ZM242.0 448.70H243.0V459.30H242.0ZM243.0 406.72H244.0V409.60H243.0ZM243.0 448.70H244.0V459.30H243.0ZM244.0 406.24H245.0V409.27H244.0ZM244.0 448.70H245.0V459.30H244.0ZM245.0 406.31H246.0V408.73H245.0ZM245.0 448.70H246.0V459.30H245.0ZM246.0 407.17H247.0V410.00H246.0ZM246.0 448.70H247.0V459.30H246.0ZM247.0 406.76H248.0V408.98H247.0ZM247.0 448.70H248.0V459.30H247.0ZM248.0 406.37H249.0V408.74H248.0ZM248.0 448.70H249.0V459.30H248.0ZM249.0 406.16H250.0V409.21H249.0ZM249.0 448.70H250.0V459.30H249.0ZM250.0 406.48H251.0V409.52H250.0ZM250.0 448.70H251.0V459.30H250.0ZM251.0 407.10H252.0V409.49H251.0ZM251.0 448.70H252.0V459.30H251.0ZM252.0 406.32H253.0V409.42H252.0ZM252.0 448.70H253.0V459.30H252.0ZM253.0 406.51H254.0V409.41H253.0ZM254.0 406.21H255.0V409.13H254.0ZM255.0 406.88H256.0V409.86H255.0ZM256.0 406.13H257.0V409.25H256.0ZM257.0 407.46H258.0V409.89H257.0ZM258.0 406.11H259.0V408.69H258.0ZM259.0 406.98H260.0V409.39H259.0ZM260.0 407.33H261.0V410.46H260.0ZM261.0 406.78H262.0V409.70H261.0ZM262.0 406.28H263.0V408.96H262.0ZM263.0 406.50H264.0V409.29H263.0ZM264.0 407.26H265.0V410.22H264.0ZM265.0 406.81H266.0V409.01H265.0ZM266.0 407.25H267.0V410.36H266.0ZM267.0 406.39H268.0V409.12H267.0ZM268.0 406.89H269.0V409.25H268.0ZM269.0 407.12H270.0V410.28H269.0ZM270.0 407.10H271.0V409.81H270.0ZM271.0 406.03H272.0V408.91H271.0ZM272.0 406.16H273.0V409.08H272.0ZM273.0 406.25H274.0V409.19H273.0ZM274.0 406.43H275.0V409.01H274.0ZM275.0 406.38H276.0V408.62H275.0ZM276.0 406.28H277.0V409.25H276.0ZM277.0 407.29H278.0V410.39H277.0ZM278.0 406.94H279.0V409.32H278.0ZM279.0 406.55H280.0V409.13H279.0ZM280.0 407.19H281.0V410.30H280.0ZM281.0 407.07H282.0V409.88H281.0ZM282.0 406.99H283.0V409.71H282.0ZM283.0 405.91H284.0V408.98H283.0ZM284.0 407.25H285.0V409.85H284.0ZM285.0 407.11H286.0V409.79H285.0ZM286.0 406.68H287.0V409.85H286.0ZM287.0 407.18H288.0V410.30H287.0ZM288.0 406.66H289.0V409.25H288.0ZM289.0 406.39H290.0V409.50H289.0ZM290.0 407.11H291.0V409.78H290.0ZM291.0 406.19H292.0V408.67H291.0ZM292.0 406.65H293.0V409.44H292.0ZM293.0 406.43H294.0V409.53H293.0ZM294.0 406.12H295.0V408.86H294.0ZM295.0 406.06H296.0V408.45H295.0ZM296.0 406.50H297.0V408.97H296.0ZM297.0 405.94H298.0V408.95H297.0ZM298.0 407.00H299.0V409.26H298.0ZM299.0 406.04H300.0V409.01H299.0ZM300.0 406.90H301.0V409.74H300.0ZM301.0 407.15H302.0V409.75H301.0ZM302.0 405.98H303.0V408.89H302.0ZM303.0 406.28H304.0V409.14H303.0ZM304.0 406.68H305.0V409.28H304.0ZM305.0 406.67H306.0V409.54H305.0ZM306.0 406.96H307.0V409.67H306.0ZM307.0 405.81H308.0V408.87H307.0ZM308.0 406.47H309.0V408.84H308.0ZM309.0 405.97H310.0V409.09H309.0ZM310.0 405.55H311.0V408.42H310.0ZM311.0 405.72H312.0V408.30H311.0ZM312.0 406.54H313.0V408.89H312.0ZM313.0 405.94H314.0V408.31H313.0ZM314.0 405.92H315.0V408.79H314.0ZM315.0 405.49H316.0V407.73H315.0ZM316.0 405.80H317.0V408.73H316.0ZM317.0 406.43H318.0V408.69H317.0ZM318.0 406.55H319.0V408.89H318.0ZM319.0 405.36H320.0V408.02H319.0ZM320.0 405.84H321.0V408.33H320.0ZM321.0 405.26H322.0V408.37H321.0ZM322.0 406.19H323.0V408.63H322.0ZM323.0 405.93H324.0V408.36H323.0ZM324.0 406.13H325.0V409.22H324.0ZM325.0 406.30H326.0V408.81H325.0ZM326.0 405.44H327.0V408.32H326.0ZM327.0 405.89H328.0V408.16H327.0ZM328.0 405.90H329.0V408.94H328.0ZM329.0 405.50H330.0V407.77H329.0ZM330.0 405.17H331.0V407.45H330.0ZM331.0 405.46H332.0V408.61H331.0ZM332.0 405.01H333.0V408.11H332.0ZM333.0 405.70H334.0V408.62H333.0ZM334.0 405.08H335.0V407.50H334.0ZM335.0 404.81H336.0V407.21H335.0ZM336.0 405.31H337.0V407.70H336.0ZM337.0 405.28H338.0V408.31H337.0ZM338.0 405.92H339.0V408.16H338.0ZM339.0 405.86H340.0V408.85H339.0ZM340.0 406.01H341.0V408.48H340.0ZM341.0 405.86H342.0V408.54H341.0ZM341.0 450.50H342.0V457.40H341.0ZM342.0 405.12H343.0V407.78H342.0ZM342.0 450.50H343.0V457.40H342.0ZM343.0 404.66H344.0V407.68H343.0ZM343.0 450.50H344.0V457.40H343.0ZM344.0 404.89H345.0V407.27H344.0ZM344.0 450.50H345.0V457.40H344.0ZM345.0 405.83H346.0V408.60H345.0ZM345.0 450.50H346.0V457.40H345.0ZM346.0 405.18H347.0V408.00H346.0ZM346.0 450.50H347.0V457.40H346.0ZM347.0 404.47H348.0V407.10H347.0ZM347.0 450.50H348.0V457.40H347.0ZM348.0 404.53H349.0V407.11H348.0ZM348.0 450.50H349.0V457.40H348.0ZM349.0 405.65H350.0V408.82H349.0ZM349.0 450.50H350.0V457.40H349.0ZM350.0 404.82H351.0V407.36H350.0ZM350.0 450.50H351.0V457.40H350.0ZM351.0 405.44H352.0V408.27H351.0ZM351.0 450.50H352.0V457.40H351.0ZM352.0 405.10H353.0V407.32H352.0ZM352.0 450.50H353.0V457.40H352.0ZM353.0 405.58H354.0V407.96H353.0ZM353.0 450.50H354.0V457.40H353.0ZM354.0 404.43H355.0V407.20H354.0ZM354.0 450.50H355.0V457.40H354.0ZM355.0 405.10H356.0V407.50H355.0ZM355.0 450.50H356.0V457.40H355.0ZM356.0 404.85H357.0V407.20H356.0ZM356.0 450.50H357.0V457.40H356.0ZM357.0 404.54H358.0V407.02H357.0ZM357.0 450.50H358.0V457.40H357.0ZM358.0 404.64H359.0V407.44H358.0ZM358.0 450.50H359.0V457.40H358.0ZM359.0 405.31H360.0V407.54H359.0ZM360.0 404.42H361.0V407.46H360.0ZM361.0 404.87H362.0V407.62H361.0ZM362.0 404.07H363.0V406.73H362.0ZM363.0 405.16H364.0V408.32H363.0ZM364.0 404.90H365.0V407.63H364.0ZM365.0 404.39H366.0V407.15H365.0ZM366.0 404.33H367.0V406.66H366.0ZM367.0 404.29H368.0V406.67H367.0ZM368.0 404.48H369.0V407.12H368.0ZM369.0 405.01H370.0V408.03H369.0ZM370.0 404.69H371.0V407.49H370.0ZM371.0 404.60H372.0V406.88H371.0ZM372.0 404.21H373.0V406.86H372.0ZM373.0 404.10H374.0V407.16H373.0ZM374.0 404.10H375.0V406.61H374.0ZM375.0 403.94H376.0V433.09H375.0ZM376.0 404.05H377.0V432.73H376.0ZM377.0 404.68H378.0V432.37H377.0ZM378.0 404.15H379.0V433.59H378.0ZM379.0 404.13H380.0V434.08H379.0ZM380.0 403.55H381.0V433.43H380.0ZM381.0 404.41H382.0V434.86H381.0ZM382.0 403.69H383.0V406.66H382.0ZM383.0 404.72H384.0V407.22H383.0ZM384.0 404.52H385.0V407.31H384.0ZM385.0 404.11H386.0V406.35H385.0ZM386.0 403.59H387.0V406.27H386.0ZM387.0 403.93H388.0V406.66H387.0ZM388.0 404.41H389.0V407.21H388.0ZM388.0 446.20H389.0V448.70H388.0ZM389.0 403.84H390.0V406.47H389.0ZM389.0 446.20H390.0V448.70H389.0ZM390.0 404.78H391.0V407.97H390.0ZM390.0 446.20H391.0V448.70H390.0ZM391.0 404.88H392.0V407.98H391.0ZM391.0 446.20H392.0V448.70H391.0ZM392.0 403.74H393.0V406.06H392.0ZM392.0 446.20H393.0V448.70H392.0ZM393.0 403.74H394.0V406.08H393.0ZM393.0 446.20H394.0V448.70H393.0ZM394.0 404.18H395.0V407.19H394.0ZM394.0 446.20H395.0V448.70H394.0ZM395.0 403.91H396.0V406.27H395.0ZM395.0 446.20H396.0V448.70H395.0ZM396.0 404.66H397.0V406.94H396.0ZM396.0 446.20H397.0V448.70H396.0ZM397.0 404.45H398.0V407.45H397.0ZM397.0 446.20H398.0V448.70H397.0ZM398.0 403.88H399.0V407.01H398.0ZM398.0 446.20H399.0V448.70H398.0ZM399.0 403.95H400.0V406.33H399.0ZM399.0 446.20H400.0V448.70H399.0ZM400.0 403.77H401.0V405.99H400.0ZM400.0 446.20H401.0V448.70H400.0ZM401.0 404.67H402.0V407.26H401.0ZM401.0 446.20H402.0V448.70H401.0ZM402.0 404.18H403.0V407.01H402.0ZM403.0 404.75H404.0V439.23H403.0ZM404.0 403.74H405.0V438.99H404.0ZM405.0 403.84H406.0V439.04H405.0ZM406.0 404.44H407.0V438.82H406.0ZM407.0 404.04H408.0V439.51H407.0ZM408.0 404.00H409.0V439.24H408.0ZM409.0 404.46H410.0V439.84H409.0ZM410.0 404.20H411.0V439.59H410.0ZM411.0 404.72H412.0V439.69H411.0ZM412.0 403.79H413.0V439.42H412.0ZM413.0 404.14H414.0V407.25H413.0ZM414.0 403.77H415.0V406.54H414.0ZM415.0 403.75H416.0V406.41H415.0ZM416.0 404.42H417.0V407.29H416.0ZM417.0 403.78H418.0V406.02H417.0ZM418.0 404.90H419.0V407.89H418.0ZM419.0 404.59H420.0V433.03H419.0ZM420.0 404.60H421.0V431.74H420.0ZM421.0 404.35H422.0V432.92H421.0ZM422.0 404.14H423.0V431.58H422.0ZM423.0 404.90H424.0V430.99H423.0ZM424.0 403.96H425.0V431.96H424.0ZM425.0 404.63H426.0V431.76H425.0ZM426.0 404.22H427.0V431.16H426.0ZM427.0 404.96H428.0V432.82H427.0ZM428.0 404.50H429.0V430.88H428.0ZM429.0 403.74H430.0V432.86H429.0ZM430.0 404.10H431.0V431.17H430.0ZM431.0 403.74H432.0V406.93H431.0ZM432.0 404.95H433.0V407.64H432.0ZM433.0 404.49H434.0V407.14H433.0ZM434.0 403.89H435.0V406.32H434.0ZM435.0 404.94H436.0V407.99H435.0ZM436.0 404.70H437.0V407.14H436.0ZM437.0 404.48H438.0V407.17H437.0ZM438.0 404.33H439.0V437.26H438.0ZM439.0 404.47H440.0V437.79H439.0ZM440.0 404.05H441.0V436.98H440.0ZM441.0 403.73H442.0V437.09H441.0ZM442.0 404.84H443.0V437.11H442.0ZM443.0 403.81H444.0V437.33H443.0ZM444.0 404.38H445.0V436.23H444.0ZM445.0 404.22H446.0V437.30H445.0ZM446.0 404.17H447.0V406.94H446.0ZM447.0 403.94H448.0V406.26H447.0ZM448.0 405.07H449.0V407.49H448.0ZM449.0 404.79H450.0V407.79H449.0ZM450.0 403.78H451.0V406.60H450.0ZM451.0 403.89H452.0V406.78H451.0ZM452.0 403.84H453.0V407.02H452.0ZM453.0 404.15H454.0V435.53H453.0ZM454.0 403.85H455.0V436.77H454.0ZM455.0 404.18H456.0V406.88H455.0ZM456.0 404.78H457.0V407.13H456.0ZM456.0 446.20H457.0V448.70H456.0ZM457.0 404.68H458.0V407.64H457.0ZM457.0 446.20H458.0V448.70H457.0ZM458.0 404.96H459.0V408.04H458.0ZM458.0 446.20H459.0V448.70H458.0ZM459.0 405.05H460.0V408.13H459.0ZM459.0 446.20H460.0V448.70H459.0ZM460.0 404.47H461.0V407.64H460.0ZM460.0 446.20H461.0V448.70H460.0ZM461.0 404.95H462.0V407.16H461.0ZM461.0 446.20H462.0V448.70H461.0ZM462.0 404.62H463.0V407.58H462.0ZM462.0 446.20H463.0V448.70H462.0ZM463.0 404.61H464.0V407.71H463.0ZM463.0 446.20H464.0V448.70H463.0ZM464.0 404.12H465.0V406.79H464.0ZM464.0 446.20H465.0V448.70H464.0ZM465.0 404.88H466.0V407.14H465.0ZM465.0 446.20H466.0V448.70H465.0ZM466.0 404.33H467.0V406.88H466.0ZM466.0 446.20H467.0V448.70H466.0ZM467.0 404.86H468.0V407.76H467.0ZM468.0 404.51H469.0V407.48H468.0ZM469.0 405.19H470.0V430.40H469.0ZM470.0 404.46H471.0V430.05H470.0ZM471.0 404.87H472.0V407.76H471.0ZM472.0 404.87H473.0V429.12H472.0ZM473.0 405.27H474.0V429.47H473.0ZM474.0 405.10H475.0V428.36H474.0ZM475.0 404.31H476.0V430.32H475.0ZM476.0 404.44H477.0V406.90H476.0ZM477.0 404.90H478.0V427.03H477.0ZM478.0 405.43H479.0V428.23H478.0ZM479.0 404.62H480.0V426.97H479.0ZM480.0 404.49H481.0V427.33H480.0ZM481.0 405.27H482.0V428.58H481.0ZM482.0 405.02H483.0V407.29H482.0ZM483.0 405.42H484.0V407.77H483.0ZM484.0 405.40H485.0V407.94H484.0ZM485.0 404.55H486.0V407.49H485.0ZM486.0 404.82H487.0V407.63H486.0ZM486.0 447.00H487.0V455.00H486.0ZM487.0 405.48H488.0V407.83H487.0ZM487.0 447.00H488.0V455.00H487.0ZM488.0 405.55H489.0V408.71H488.0ZM488.0 447.00H489.0V455.00H488.0ZM489.0 405.58H490.0V408.54H489.0ZM489.0 447.00H490.0V455.00H489.0ZM490.0 404.41H491.0V406.64H490.0ZM490.0 447.00H491.0V455.00H490.0ZM491.0 405.10H492.0V408.02H491.0ZM491.0 447.00H492.0V455.00H491.0ZM492.0 405.68H493.0V408.15H492.0ZM492.0 447.00H493.0V455.00H492.0ZM493.0 405.09H494.0V407.72H493.0ZM493.0 447.00H494.0V455.00H493.0ZM494.0 405.42H495.0V408.57H494.0ZM495.0 404.72H496.0V407.67H495.0ZM496.0 404.81H497.0V407.01H496.0ZM497.0 405.21H498.0V407.50H497.0ZM498.0 405.40H499.0V408.37H498.0ZM499.0 405.20H500.0V407.74H499.0ZM500.0 405.45H501.0V408.20H500.0ZM501.0 405.86H502.0V408.80H501.0ZM502.0 405.54H503.0V408.64H502.0ZM503.0 405.32H504.0V407.63H503.0ZM504.0 404.79H505.0V407.89H504.0ZM505.0 405.64H506.0V408.53H505.0ZM506.0 405.85H507.0V408.13H506.0ZM507.0 405.28H508.0V408.01H507.0ZM507.0 446.00H508.0V457.00H507.0ZM508.0 405.02H509.0V407.53H508.0ZM508.0 446.00H509.0V457.00H508.0ZM509.0 405.05H510.0V407.31H509.0ZM509.0 446.00H510.0V457.00H509.0ZM510.0 405.17H511.0V407.64H510.0ZM510.0 446.00H511.0V457.00H510.0ZM511.0 405.67H512.0V408.06H511.0ZM511.0 446.00H512.0V457.00H511.0ZM512.0 405.05H513.0V407.72H512.0ZM512.0 446.00H513.0V457.00H512.0ZM513.0 405.86H514.0V408.82H513.0ZM513.0 446.00H514.0V457.00H513.0ZM514.0 404.91H515.0V408.04H514.0ZM514.0 446.00H515.0V457.00H514.0ZM515.0 405.35H516.0V407.86H515.0ZM516.0 405.00H517.0V407.32H516.0ZM517.0 405.26H518.0V407.64H517.0ZM518.0 404.79H519.0V407.70H518.0ZM518.0 446.20H519.0V456.20H518.0ZM519.0 405.05H520.0V407.92H519.0ZM519.0 446.20H520.0V456.20H519.0ZM520.0 405.14H521.0V408.22H520.0ZM520.0 446.20H521.0V456.20H520.0ZM521.0 404.87H522.0V407.44H521.0ZM521.0 446.20H522.0V456.20H521.0ZM522.0 405.36H523.0V408.39H522.0ZM522.0 446.20H523.0V456.20H522.0ZM523.0 405.74H524.0V408.34H523.0ZM523.0 446.20H524.0V456.20H523.0ZM524.0 405.92H525.0V409.12H524.0ZM524.0 446.20H525.0V456.20H524.0ZM525.0 405.55H526.0V408.05H525.0ZM525.0 446.20H526.0V456.20H525.0ZM526.0 405.80H527.0V408.71H526.0ZM527.0 405.12H528.0V407.80H527.0ZM528.0 405.90H529.0V409.08H528.0ZM529.0 405.59H530.0V408.64H529.0ZM530.0 404.82H531.0V407.34H530.0ZM531.0 406.05H532.0V408.37H531.0ZM532.0 405.17H533.0V407.53H532.0ZM533.0 406.08H534.0V409.24H533.0ZM534.0 405.27H535.0V407.95H534.0ZM534.0 446.00H535.0V451.00H534.0ZM535.0 404.94H536.0V407.46H535.0ZM535.0 446.00H536.0V451.00H535.0ZM536.0 406.18H537.0V408.81H536.0ZM536.0 446.00H537.0V451.00H536.0ZM537.0 404.88H538.0V407.65H537.0ZM537.0 446.00H538.0V451.00H537.0ZM538.0 406.16H539.0V408.41H538.0ZM538.0 446.00H539.0V451.00H538.0ZM539.0 406.08H540.0V408.55H539.0ZM539.0 446.00H540.0V451.00H539.0ZM540.0 406.11H541.0V408.91H540.0ZM540.0 446.00H541.0V451.00H540.0ZM541.0 405.51H542.0V408.29H541.0ZM541.0 446.00H542.0V451.00H541.0ZM542.0 405.62H543.0V408.68H542.0ZM542.0 446.00H543.0V451.00H542.0ZM543.0 406.27H544.0V408.49H543.0ZM543.0 446.00H544.0V451.00H543.0ZM544.0 405.70H545.0V408.54H544.0ZM545.0 405.00H546.0V407.60H545.0ZM546.0 405.52H547.0V407.97H546.0ZM547.0 405.93H548.0V408.93H547.0ZM548.0 404.97H549.0V408.16H548.0ZM549.0 405.69H550.0V408.50H549.0ZM550.0 405.26H551.0V408.33H550.0ZM551.0 405.71H552.0V408.52H551.0ZM552.0 405.64H553.0V407.85H552.0ZM553.0 405.16H554.0V407.64H553.0ZM554.0 406.14H555.0V408.51H554.0ZM555.0 405.23H556.0V407.97H555.0ZM556.0 406.10H557.0V408.59H556.0ZM557.0 405.78H558.0V408.83H557.0ZM558.0 406.21H559.0V409.17H558.0ZM559.0 405.75H560.0V408.33H559.0ZM560.0 405.77H561.0V408.33H560.0ZM560.0 446.00H561.0V455.50H560.0ZM561.0 405.35H562.0V407.79H561.0ZM561.0 446.00H562.0V455.50H561.0ZM562.0 405.67H563.0V408.65H562.0ZM562.0 446.00H563.0V455.50H562.0ZM563.0 405.15H564.0V408.06H563.0ZM563.0 446.00H564.0V455.50H563.0ZM564.0 406.04H565.0V409.07H564.0ZM565.0 405.48H566.0V407.86H565.0ZM566.0 405.34H567.0V408.47H566.0ZM567.0 406.20H568.0V409.20H567.0ZM567.0 445.80H568.0V456.00H567.0ZM568.0 405.09H569.0V408.27H568.0ZM568.0 445.80H569.0V456.00H568.0ZM569.0 406.08H570.0V408.95H569.0ZM569.0 445.80H570.0V456.00H569.0ZM570.0 406.43H571.0V408.86H570.0ZM570.0 445.80H571.0V456.00H570.0ZM571.0 405.88H572.0V408.92H571.0ZM571.0 445.80H572.0V456.00H571.0ZM572.0 405.76H573.0V407.98H572.0ZM572.0 445.80H573.0V456.00H572.0ZM573.0 405.69H574.0V408.04H573.0ZM573.0 445.80H574.0V456.00H573.0ZM574.0 405.63H575.0V408.73H574.0ZM574.0 445.80H575.0V456.00H574.0ZM575.0 406.36H576.0V409.05H575.0ZM576.0 405.61H577.0V408.14H576.0ZM577.0 405.35H578.0V408.49H577.0ZM577.0 447.00H578.0V455.00H577.0ZM578.0 406.44H579.0V408.78H578.0ZM578.0 447.00H579.0V455.00H578.0ZM579.0 406.11H580.0V409.05H579.0ZM580.0 405.64H581.0V408.80H580.0ZM581.0 405.89H582.0V408.77H581.0ZM582.0 405.37H583.0V408.22H582.0ZM582.0 449.00H583.0V455.50H582.0ZM583.0 406.34H584.0V408.88H583.0ZM583.0 449.00H584.0V455.50H583.0ZM584.0 405.99H585.0V409.10H584.0ZM584.0 449.00H585.0V455.50H584.0ZM585.0 405.47H586.0V407.99H585.0ZM586.0 405.32H587.0V407.72H586.0ZM587.0 406.54H588.0V409.54H587.0ZM588.0 406.24H589.0V409.15H588.0ZM589.0 406.02H590.0V409.18H589.0ZM590.0 406.45H591.0V409.53H590.0ZM591.0 405.56H592.0V407.99H591.0ZM592.0 405.48H593.0V407.75H592.0ZM593.0 405.94H594.0V408.39H593.0ZM594.0 405.40H595.0V408.42H594.0ZM595.0 406.68H596.0V408.92H595.0ZM596.0 405.39H597.0V408.23H596.0ZM597.0 406.37H598.0V409.53H597.0ZM598.0 406.63H599.0V408.95H598.0ZM599.0 406.45H600.0V408.76H599.0ZM600.0 406.57H601.0V409.14H600.0ZM601.0 406.63H602.0V409.55H601.0ZM602.0 406.66H603.0V409.02H602.0ZM603.0 406.11H604.0V408.74H603.0ZM604.0 405.87H605.0V408.90H604.0ZM605.0 405.58H606.0V408.64H605.0ZM606.0 406.09H607.0V409.19H606.0ZM607.0 406.51H608.0V409.54H607.0ZM608.0 406.12H609.0V408.38H608.0ZM609.0 406.25H610.0V408.59H609.0ZM610.0 406.42H611.0V409.17H610.0ZM611.0 405.52H612.0V408.43H611.0ZM612.0 406.17H613.0V408.95H612.0ZM613.0 405.48H614.0V407.89H613.0ZM614.0 406.34H615.0V409.15H614.0ZM615.0 406.23H616.0V408.89H615.0ZM616.0 406.80H617.0V409.56H616.0ZM617.0 405.60H618.0V408.37H617.0ZM618.0 405.71H619.0V408.54H618.0ZM619.0 406.60H620.0V409.35H619.0ZM620.0 406.06H621.0V408.43H620.0ZM621.0 406.53H622.0V409.42H621.0ZM622.0 405.87H623.0V408.34H622.0ZM623.0 406.56H624.0V409.53H623.0ZM623.0 448.00H624.0V458.60H623.0ZM624.0 405.97H625.0V408.64H624.0ZM624.0 448.00H625.0V458.60H624.0ZM625.0 407.05H626.0V409.27H625.0ZM625.0 448.00H626.0V458.60H625.0ZM626.0 407.00H627.0V410.19H626.0ZM627.0 406.42H628.0V409.41H627.0ZM628.0 407.18H629.0V409.76H628.0ZM629.0 407.22H630.0V409.81H629.0ZM630.0 407.12H631.0V409.99H630.0ZM631.0 406.52H632.0V409.10H631.0ZM632.0 407.26H633.0V409.92H632.0ZM633.0 406.07H634.0V408.62H633.0ZM634.0 406.87H635.0V409.78H634.0ZM635.0 407.19H636.0V409.59H635.0ZM636.0 406.36H637.0V409.12H636.0ZM637.0 406.93H638.0V409.80H637.0ZM638.0 407.36H639.0V409.92H638.0ZM639.0 406.30H640.0V409.21H639.0ZM640.0 406.63H641.0V409.79H640.0ZM641.0 407.39H642.0V409.80H641.0ZM642.0 406.70H643.0V409.69H642.0ZM643.0 407.63H644.0V410.41H643.0ZM644.0 407.06H645.0V409.72H644.0ZM645.0 406.72H646.0V409.68H645.0ZM645.0 456.00H646.0V460.00H645.0ZM646.0 407.20H647.0V409.64H646.0ZM646.0 456.00H647.0V460.00H646.0ZM647.0 407.42H648.0V409.78H647.0ZM647.0 456.00H648.0V460.00H647.0ZM648.0 407.92H649.0V411.06H648.0ZM648.0 456.00H649.0V460.00H648.0ZM649.0 407.19H650.0V409.78H649.0ZM649.0 456.00H650.0V460.00H649.0ZM650.0 407.52H651.0V409.92H650.0ZM650.0 456.00H651.0V460.00H650.0ZM651.0 407.56H652.0V410.54H651.0ZM651.0 456.00H652.0V460.00H651.0ZM652.0 407.29H653.0V409.85H652.0ZM652.0 456.00H653.0V460.00H652.0ZM653.0 407.63H654.0V410.37H653.0ZM653.0 456.00H654.0V460.00H653.0ZM654.0 406.85H655.0V409.39H654.0ZM654.0 456.00H655.0V460.00H654.0ZM655.0 407.51H656.0V410.39H655.0ZM656.0 406.94H657.0V409.86H656.0ZM657.0 407.73H658.0V410.43H657.0ZM658.0 406.97H659.0V409.33H658.0ZM659.0 407.28H660.0V409.63H659.0ZM660.0 407.15H661.0V409.54H660.0ZM661.0 408.38H662.0V410.79H661.0ZM662.0 407.72H663.0V409.96H662.0ZM663.0 407.74H664.0V410.58H663.0ZM664.0 407.99H665.0V410.86H664.0ZM665.0 407.68H666.0V410.15H665.0ZM665.0 446.00H666.0V450.00H665.0ZM666.0 408.43H667.0V411.59H666.0ZM666.0 446.00H667.0V450.00H666.0ZM667.0 408.56H668.0V411.58H667.0ZM667.0 446.00H668.0V450.00H667.0ZM668.0 407.58H669.0V410.66H668.0ZM669.0 408.67H670.0V411.56H669.0ZM670.0 408.66H671.0V411.09H670.0ZM671.0 408.27H672.0V410.57H671.0ZM672.0 408.21H673.0V410.67H672.0ZM673.0 408.90H674.0V411.64H673.0ZM674.0 408.15H675.0V410.44H674.0ZM675.0 408.26H676.0V411.06H675.0ZM676.0 409.00H677.0V411.23H676.0ZM677.0 407.80H678.0V410.47H677.0ZM678.0 407.90H678.3V410.81H678.0Z" fill="#ff0000" shape-rendering="crispEdges"/><path d="M120.0 464.03H121.0V464.44H120.0ZM121.0 463.99H122.0V464.02H121.0ZM123.0 464.07H124.0V464.89H123.0ZM126.0 452.40H127.0V464.05H126.0ZM127.0 452.40H128.0V463.92H127.0ZM128.0 452.40H129.0V463.91H128.0ZM129.0 452.40H130.0V464.51H129.0ZM130.0 452.40H131.0V465.22H130.0ZM131.0 452.40H132.0V465.92H131.0ZM132.0 452.40H133.0V464.71H132.0ZM133.0 452.40H134.0V465.49H133.0ZM134.0 452.40H135.0V465.00H134.0ZM135.0 452.40H136.0V465.77H135.0ZM136.0 465.00H137.0V466.03H136.0ZM138.0 465.36H139.0V465.39H138.0ZM139.0 465.30H140.0V466.64H139.0ZM141.0 466.42H142.0V466.65H141.0ZM142.0 466.19H143.0V466.61H142.0ZM143.0 466.03H144.0V466.35H143.0ZM144.0 466.34H145.0V466.48H144.0ZM145.0 466.94H146.0V468.12H145.0ZM147.0 466.75H148.0V468.13H147.0ZM148.0 467.70H149.0V468.56H148.0ZM149.0 467.74H150.0V468.56H149.0ZM150.0 467.24H151.0V468.08H150.0ZM151.0 467.94H152.0V468.88H151.0ZM152.0 468.30H153.0V469.22H152.0ZM153.0 468.56H154.0V468.94H153.0ZM154.0 467.99H155.0V468.82H154.0ZM155.0 468.40H156.0V468.53H155.0ZM156.0 468.91H157.0V469.46H156.0ZM158.0 469.29H159.0V469.97H158.0ZM159.0 469.80H160.0V470.32H159.0ZM160.0 469.55H161.0V469.99H160.0ZM163.0 469.85H164.0V470.65H163.0ZM164.0 469.61H165.0V471.08H164.0ZM165.0 469.83H166.0V470.32H165.0ZM166.0 470.40H167.0V471.01H166.0ZM167.0 457.00H168.0V471.57H167.0ZM168.0 457.00H169.0V470.86H168.0ZM169.0 457.00H170.0V472.17H169.0ZM170.0 457.00H171.0V472.04H170.0ZM171.0 457.00H172.0V472.09H171.0ZM172.0 457.00H173.0V472.97H172.0ZM173.0 457.00H174.0V472.08H173.0ZM174.0 457.00H175.0V471.68H174.0ZM175.0 457.00H176.0V473.47H175.0ZM176.0 457.00H177.0V473.36H176.0ZM177.0 457.00H178.0V473.12H177.0ZM178.0 457.00H179.0V473.63H178.0ZM179.0 457.00H180.0V473.36H179.0ZM180.0 457.00H181.0V473.08H180.0ZM181.0 457.00H182.0V473.98H181.0ZM182.0 457.00H183.0V475.14H182.0ZM183.0 457.00H184.0V473.91H183.0ZM184.0 457.00H185.0V475.34H184.0ZM185.0 457.00H186.0V474.49H185.0ZM186.0 457.00H187.0V475.11H186.0ZM187.0 471.66H188.0V475.27H187.0ZM188.0 471.24H189.0V475.19H188.0ZM189.0 471.44H190.0V476.42H189.0ZM190.0 471.45H191.0V476.44H190.0ZM191.0 471.04H192.0V478.24H191.0ZM192.0 471.26H193.0V478.64H192.0ZM193.0 471.35H194.0V477.73H193.0ZM194.0 471.20H195.0V477.97H194.0ZM195.0 471.27H196.0V478.18H195.0ZM196.0 471.74H197.0V478.60H196.0ZM197.0 471.58H198.0V478.46H197.0ZM198.0 471.84H199.0V477.79H198.0ZM199.0 471.45H200.0V477.98H199.0ZM200.0 471.46H201.0V478.54H200.0ZM201.0 471.52H202.0V478.64H201.0ZM202.0 471.90H203.0V478.80H202.0ZM203.0 472.34H204.0V479.53H203.0ZM204.0 472.34H205.0V478.87H204.0ZM205.0 472.28H206.0V479.97H205.0ZM206.0 472.10H207.0V479.76H206.0ZM207.0 472.28H208.0V479.05H207.0ZM208.0 471.88H209.0V479.49H208.0ZM209.0 471.75H210.0V479.10H209.0ZM210.0 472.20H211.0V480.21H210.0ZM211.0 471.95H212.0V479.27H211.0ZM212.0 472.69H213.0V480.53H212.0ZM213.0 472.67H214.0V480.63H213.0ZM214.0 472.29H215.0V480.80H214.0ZM215.0 472.07H216.0V480.05H215.0ZM216.0 472.51H217.0V480.51H216.0ZM217.0 472.94H218.0V480.50H217.0ZM218.0 473.08H219.0V479.75H218.0ZM219.0 472.32H220.0V480.77H219.0ZM220.0 473.16H221.0V479.76H220.0ZM221.0 472.55H222.0V481.31H221.0ZM222.0 472.84H223.0V481.24H222.0ZM223.0 472.92H224.0V481.24H223.0ZM224.0 472.57H225.0V480.10H224.0ZM225.0 473.06H226.0V481.32H225.0ZM226.0 473.35H227.0V481.78H226.0ZM227.0 472.86H228.0V481.97H227.0ZM228.0 473.21H229.0V480.46H228.0ZM229.0 459.30H230.0V482.27H229.0ZM230.0 459.30H231.0V480.92H230.0ZM231.0 459.30H232.0V481.89H231.0ZM232.0 459.30H233.0V482.09H232.0ZM233.0 459.30H234.0V481.32H233.0ZM234.0 459.30H235.0V482.44H234.0ZM235.0 459.30H236.0V481.83H235.0ZM236.0 459.30H237.0V482.80H236.0ZM237.0 459.30H238.0V482.03H237.0ZM238.0 459.30H239.0V482.55H238.0ZM239.0 459.30H240.0V481.97H239.0ZM240.0 459.30H241.0V482.48H240.0ZM241.0 459.30H242.0V481.90H241.0ZM242.0 459.30H243.0V482.03H242.0ZM243.0 459.30H244.0V482.37H243.0ZM244.0 459.30H245.0V483.32H244.0ZM245.0 459.30H246.0V483.83H245.0ZM246.0 459.30H247.0V482.26H246.0ZM247.0 459.30H248.0V483.65H247.0ZM248.0 459.30H249.0V482.76H248.0ZM249.0 459.30H250.0V483.85H249.0ZM250.0 459.30H251.0V483.19H250.0ZM251.0 459.30H252.0V484.27H251.0ZM252.0 459.30H253.0V483.39H252.0ZM253.0 473.46H254.0V484.12H253.0ZM254.0 473.04H255.0V482.92H254.0ZM255.0 453.70H256.0V484.34H255.0ZM256.0 453.70H257.0V483.95H256.0ZM257.0 453.70H258.0V484.34H257.0ZM258.0 453.70H259.0V483.38H258.0ZM259.0 453.70H260.0V484.25H259.0ZM260.0 453.70H261.0V483.78H260.0ZM261.0 453.70H262.0V483.23H261.0ZM262.0 453.70H263.0V483.39H262.0ZM263.0 453.70H264.0V483.55H263.0ZM264.0 453.70H265.0V483.80H264.0ZM265.0 455.38H266.0V483.83H265.0ZM266.0 473.71H267.0V484.21H266.0ZM267.0 473.49H268.0V484.05H267.0ZM268.0 472.94H269.0V483.83H268.0ZM269.0 472.90H270.0V483.80H269.0ZM270.0 454.30H271.0V484.81H270.0ZM271.0 454.30H272.0V484.19H271.0ZM272.0 454.30H273.0V484.23H272.0ZM273.0 454.30H274.0V484.01H273.0ZM274.0 454.30H275.0V485.05H274.0ZM275.0 454.30H276.0V485.46H275.0ZM276.0 473.10H277.0V485.32H276.0ZM277.0 473.38H278.0V485.00H277.0ZM278.0 473.65H279.0V485.61H278.0ZM279.0 473.42H280.0V484.07H279.0ZM280.0 473.87H281.0V485.01H280.0ZM281.0 472.96H282.0V485.68H281.0ZM282.0 455.00H283.0V485.85H282.0ZM283.0 455.00H284.0V485.70H283.0ZM284.0 455.00H285.0V484.30H284.0ZM285.0 455.00H286.0V485.58H285.0ZM286.0 455.00H287.0V485.35H286.0ZM287.0 455.00H288.0V484.48H287.0ZM288.0 473.75H289.0V485.64H288.0ZM289.0 473.66H290.0V485.20H289.0ZM290.0 473.54H291.0V485.14H290.0ZM291.0 473.23H292.0V485.34H291.0ZM292.0 455.50H293.0V484.95H292.0ZM293.0 455.50H294.0V484.82H293.0ZM294.0 455.50H295.0V484.76H294.0ZM295.0 455.50H296.0V486.16H295.0ZM296.0 455.50H297.0V485.57H296.0ZM297.0 455.50H298.0V485.61H297.0ZM298.0 455.50H299.0V485.57H298.0ZM299.0 455.50H300.0V484.61H299.0ZM300.0 455.50H301.0V485.77H300.0ZM301.0 455.50H302.0V486.21H301.0ZM302.0 455.50H303.0V485.08H302.0ZM303.0 473.42H304.0V486.39H303.0ZM304.0 473.46H305.0V486.04H304.0ZM305.0 473.45H306.0V485.31H305.0ZM306.0 473.48H307.0V485.90H306.0ZM307.0 473.33H308.0V486.61H307.0ZM308.0 473.83H309.0V486.69H308.0ZM309.0 473.87H310.0V486.06H309.0ZM310.0 454.71H311.0V485.25H310.0ZM311.0 473.60H312.0V486.94H311.0ZM312.0 474.26H313.0V487.03H312.0ZM313.0 474.14H314.0V486.45H313.0ZM314.0 455.49H315.0V485.59H314.0ZM315.0 455.40H316.0V487.19H315.0ZM316.0 473.66H317.0V486.20H316.0ZM317.0 474.17H318.0V487.18H317.0ZM318.0 473.94H319.0V486.63H318.0ZM319.0 473.85H320.0V487.16H319.0ZM320.0 474.08H321.0V486.56H320.0ZM321.0 474.25H322.0V486.19H321.0ZM322.0 473.76H323.0V486.84H322.0ZM323.0 474.45H324.0V486.86H323.0ZM324.0 474.42H325.0V486.69H324.0ZM325.0 474.39H326.0V487.42H325.0ZM326.0 473.59H327.0V487.50H326.0ZM327.0 454.49H328.0V487.84H327.0ZM328.0 474.02H329.0V486.70H328.0ZM329.0 474.47H330.0V487.12H329.0ZM330.0 455.00H331.0V487.58H330.0ZM331.0 455.00H332.0V487.27H331.0ZM332.0 455.00H333.0V487.27H332.0ZM333.0 455.00H334.0V488.10H333.0ZM334.0 455.00H335.0V487.88H334.0ZM335.0 455.00H336.0V487.66H335.0ZM336.0 455.00H337.0V487.80H336.0ZM337.0 455.00H338.0V488.11H337.0ZM338.0 474.53H339.0V488.03H338.0ZM339.0 453.18H340.0V488.36H339.0ZM340.0 473.83H341.0V488.10H340.0ZM341.0 457.40H342.0V486.88H341.0ZM342.0 457.40H343.0V488.57H342.0ZM343.0 457.40H344.0V488.46H343.0ZM344.0 457.40H345.0V487.55H344.0ZM345.0 457.40H346.0V488.64H345.0ZM346.0 457.40H347.0V487.38H346.0ZM347.0 457.40H348.0V487.29H347.0ZM348.0 457.40H349.0V488.14H348.0ZM349.0 457.40H350.0V487.37H349.0ZM350.0 457.40H351.0V488.26H350.0ZM351.0 457.40H352.0V488.63H351.0ZM352.0 457.40H353.0V487.41H352.0ZM353.0 457.40H354.0V487.59H353.0ZM354.0 457.40H355.0V489.15H354.0ZM355.0 457.40H356.0V489.06H355.0ZM356.0 457.40H357.0V487.71H356.0ZM357.0 457.40H358.0V488.88H357.0ZM358.0 457.40H359.0V489.27H358.0ZM359.0 453.74H360.0V489.29H359.0ZM360.0 474.38H361.0V488.71H360.0ZM361.0 474.92H362.0V488.36H361.0ZM362.0 454.27H363.0V487.83H362.0ZM363.0 474.65H364.0V488.06H363.0ZM364.0 454.63H365.0V488.20H364.0ZM365.0 474.75H366.0V488.02H365.0ZM366.0 453.79H367.0V488.59H366.0ZM367.0 452.40H368.0V489.32H367.0ZM368.0 452.40H369.0V488.99H368.0ZM369.0 452.40H370.0V488.51H369.0ZM370.0 452.40H371.0V488.21H370.0ZM371.0 452.40H372.0V489.44H371.0ZM372.0 452.40H373.0V488.18H372.0ZM373.0 452.40H374.0V489.55H373.0ZM374.0 452.40H375.0V488.29H374.0ZM375.0 474.72H376.0V488.05H375.0ZM376.0 454.34H377.0V489.11H376.0ZM377.0 455.02H378.0V489.48H377.0ZM378.0 474.63H379.0V489.74H378.0ZM379.0 475.17H380.0V489.03H379.0ZM380.0 475.09H381.0V488.89H380.0ZM381.0 475.23H382.0V488.04H381.0ZM382.0 455.28H383.0V488.40H382.0ZM383.0 474.91H384.0V488.99H383.0ZM384.0 454.62H385.0V488.20H384.0ZM385.0 474.72H386.0V489.78H385.0ZM386.0 455.54H387.0V488.65H386.0ZM387.0 474.88H388.0V489.41H387.0ZM388.0 448.70H389.0V489.77H388.0ZM389.0 448.70H390.0V488.62H389.0ZM390.0 448.70H391.0V488.18H390.0ZM391.0 448.70H392.0V488.20H391.0ZM392.0 448.70H393.0V488.75H392.0ZM393.0 448.70H394.0V488.31H393.0ZM394.0 448.70H395.0V489.37H394.0ZM395.0 448.70H396.0V489.25H395.0ZM396.0 448.70H397.0V488.38H396.0ZM397.0 448.70H398.0V489.87H397.0ZM398.0 448.70H399.0V489.17H398.0ZM399.0 448.70H400.0V489.81H399.0ZM400.0 448.70H401.0V489.39H400.0ZM401.0 448.70H402.0V488.80H401.0ZM402.0 475.36H403.0V488.61H402.0ZM403.0 474.95H404.0V488.50H403.0ZM404.0 453.81H405.0V489.37H404.0ZM405.0 474.73H406.0V489.53H405.0ZM406.0 475.26H407.0V490.08H406.0ZM407.0 475.49H408.0V489.32H407.0ZM408.0 474.50H409.0V490.12H408.0ZM409.0 475.41H410.0V489.97H409.0ZM410.0 475.02H411.0V490.23H410.0ZM411.0 474.78H412.0V488.81H411.0ZM412.0 453.55H413.0V488.91H412.0ZM413.0 475.25H414.0V489.40H413.0ZM414.0 474.58H415.0V488.94H414.0ZM415.0 475.43H416.0V488.81H415.0ZM416.0 474.99H417.0V489.93H416.0ZM417.0 454.59H418.0V488.61H417.0ZM418.0 474.68H419.0V488.57H418.0ZM419.0 475.24H420.0V489.09H419.0ZM420.0 474.82H421.0V490.03H420.0ZM421.0 454.24H422.0V489.27H421.0ZM422.0 475.48H423.0V489.69H422.0ZM423.0 474.90H424.0V489.44H423.0ZM424.0 474.57H425.0V488.66H424.0ZM425.0 475.42H426.0V489.83H425.0ZM426.0 475.32H427.0V490.15H426.0ZM427.0 475.43H428.0V488.87H427.0ZM428.0 475.21H429.0V489.59H428.0ZM429.0 474.52H430.0V489.11H429.0ZM430.0 475.29H431.0V489.95H430.0ZM431.0 453.45H432.0V489.52H431.0ZM432.0 453.27H433.0V488.96H432.0ZM433.0 474.77H434.0V488.85H433.0ZM434.0 475.25H435.0V490.50H434.0ZM435.0 474.80H436.0V490.12H435.0ZM436.0 474.57H437.0V489.66H436.0ZM437.0 475.21H438.0V489.61H437.0ZM438.0 475.15H439.0V489.85H438.0ZM439.0 475.32H440.0V489.50H439.0ZM440.0 475.06H441.0V489.72H440.0ZM441.0 475.09H442.0V490.51H441.0ZM442.0 475.02H443.0V489.45H442.0ZM443.0 475.39H444.0V489.92H443.0ZM444.0 453.56H445.0V489.60H444.0ZM445.0 474.58H446.0V490.27H445.0ZM446.0 475.36H447.0V489.72H446.0ZM447.0 453.27H448.0V489.07H447.0ZM448.0 475.44H449.0V489.69H448.0ZM449.0 475.33H450.0V489.43H449.0ZM450.0 474.86H451.0V489.34H450.0ZM451.0 475.36H452.0V490.57H451.0ZM452.0 454.67H453.0V489.79H452.0ZM453.0 475.24H454.0V489.26H453.0ZM454.0 474.64H455.0V490.09H454.0ZM455.0 474.73H456.0V490.24H455.0ZM456.0 448.70H457.0V490.65H456.0ZM457.0 448.70H458.0V490.06H457.0ZM458.0 448.70H459.0V489.53H458.0ZM459.0 448.70H460.0V488.94H459.0ZM460.0 448.70H461.0V489.64H460.0ZM461.0 448.70H462.0V489.89H461.0ZM462.0 448.70H463.0V490.15H462.0ZM463.0 448.70H464.0V489.59H463.0ZM464.0 448.70H465.0V489.86H464.0ZM465.0 448.70H466.0V488.91H465.0ZM466.0 448.70H467.0V490.00H466.0ZM467.0 475.27H468.0V490.23H467.0ZM468.0 474.63H469.0V488.81H468.0ZM469.0 475.47H470.0V489.26H469.0ZM470.0 453.15H471.0V489.67H470.0ZM471.0 474.62H472.0V488.64H471.0ZM472.0 475.44H473.0V489.20H472.0ZM473.0 474.70H474.0V489.91H473.0ZM474.0 475.33H475.0V489.91H474.0ZM475.0 454.08H476.0V489.12H475.0ZM476.0 474.87H477.0V489.22H476.0ZM477.0 454.07H478.0V489.61H477.0ZM478.0 475.08H479.0V489.94H478.0ZM479.0 475.10H480.0V488.86H479.0ZM480.0 475.15H481.0V489.86H480.0ZM481.0 475.24H482.0V490.02H481.0ZM482.0 475.45H483.0V489.53H482.0ZM483.0 474.71H484.0V489.20H483.0ZM484.0 455.83H485.0V488.82H484.0ZM485.0 475.16H486.0V489.48H485.0ZM486.0 455.00H487.0V488.83H486.0ZM487.0 455.00H488.0V489.67H487.0ZM488.0 455.00H489.0V488.50H488.0ZM489.0 455.00H490.0V488.59H489.0ZM490.0 455.00H491.0V489.87H490.0ZM491.0 455.00H492.0V488.69H491.0ZM492.0 455.00H493.0V490.01H492.0ZM493.0 455.00H494.0V488.80H493.0ZM494.0 475.16H495.0V489.45H494.0ZM495.0 475.12H496.0V489.53H495.0ZM496.0 475.00H497.0V488.62H496.0ZM497.0 475.23H498.0V489.78H497.0ZM498.0 475.28H499.0V489.69H498.0ZM499.0 474.77H500.0V488.88H499.0ZM500.0 474.63H501.0V489.29H500.0ZM501.0 475.02H502.0V489.36H501.0ZM502.0 474.90H503.0V489.46H502.0ZM503.0 453.73H504.0V488.62H503.0ZM504.0 474.84H505.0V488.66H504.0ZM505.0 475.09H506.0V488.66H505.0ZM506.0 475.47H507.0V488.53H506.0ZM507.0 457.00H508.0V489.04H507.0ZM508.0 457.00H509.0V489.40H508.0ZM509.0 457.00H510.0V489.14H509.0ZM510.0 457.00H511.0V488.94H510.0ZM511.0 457.00H512.0V488.07H511.0ZM512.0 475.00H513.0V487.87H512.0ZM513.0 457.00H514.0V487.94H513.0ZM514.0 457.00H515.0V488.26H514.0ZM515.0 453.10H516.0V488.08H515.0ZM516.0 452.03H517.0V489.01H516.0ZM517.0 451.89H518.0V488.47H517.0ZM518.0 456.20H519.0V488.72H518.0ZM519.0 456.20H520.0V488.17H519.0ZM520.0 456.20H521.0V487.88H520.0ZM521.0 456.20H522.0V488.41H521.0ZM522.0 456.20H523.0V488.28H522.0ZM523.0 456.20H524.0V489.11H523.0ZM524.0 456.20H525.0V488.67H524.0ZM525.0 456.20H526.0V487.63H525.0ZM526.0 451.87H527.0V488.06H526.0ZM527.0 452.51H528.0V487.58H527.0ZM528.0 453.03H529.0V488.97H528.0ZM529.0 475.00H530.0V487.80H529.0ZM530.0 451.91H531.0V489.09H530.0ZM531.0 452.28H532.0V488.95H531.0ZM532.0 453.08H533.0V488.66H532.0ZM533.0 453.13H534.0V488.03H533.0ZM534.0 451.00H535.0V488.67H534.0ZM535.0 451.00H536.0V487.98H535.0ZM536.0 451.00H537.0V488.67H536.0ZM537.0 451.00H538.0V488.15H537.0ZM538.0 475.00H539.0V488.03H538.0ZM539.0 451.00H540.0V487.56H539.0ZM540.0 451.00H541.0V487.60H540.0ZM541.0 451.00H542.0V487.37H541.0ZM542.0 451.00H543.0V487.53H542.0ZM543.0 451.00H544.0V487.78H543.0ZM544.0 453.05H545.0V488.72H544.0ZM545.0 453.37H546.0V487.43H545.0ZM546.0 475.00H547.0V488.03H546.0ZM547.0 452.81H548.0V488.45H547.0ZM548.0 453.53H549.0V487.31H548.0ZM549.0 454.19H550.0V486.90H549.0ZM550.0 454.61H551.0V487.51H550.0ZM551.0 454.28H552.0V487.31H551.0ZM552.0 454.79H553.0V488.16H552.0ZM553.0 455.44H554.0V487.23H553.0ZM554.0 455.47H555.0V487.69H554.0ZM555.0 455.06H556.0V487.41H555.0ZM556.0 456.16H557.0V487.68H556.0ZM557.0 455.89H558.0V487.54H557.0ZM558.0 455.56H559.0V488.33H558.0ZM559.0 455.33H560.0V487.61H559.0ZM560.0 455.50H561.0V488.27H560.0ZM561.0 455.50H562.0V487.15H561.0ZM562.0 455.50H563.0V487.28H562.0ZM563.0 455.50H564.0V486.90H563.0ZM564.0 455.59H565.0V486.78H564.0ZM565.0 455.84H566.0V487.97H565.0ZM566.0 456.21H567.0V486.70H566.0ZM567.0 456.00H568.0V487.30H567.0ZM568.0 456.00H569.0V486.57H568.0ZM569.0 456.00H570.0V487.61H569.0ZM570.0 456.00H571.0V486.98H570.0ZM571.0 456.00H572.0V487.15H571.0ZM572.0 456.00H573.0V486.62H572.0ZM573.0 456.00H574.0V486.86H573.0ZM574.0 456.00H575.0V486.22H574.0ZM575.0 456.38H576.0V486.96H575.0ZM576.0 455.11H577.0V486.31H576.0ZM577.0 455.00H578.0V487.05H577.0ZM578.0 455.00H579.0V487.33H578.0ZM579.0 456.52H580.0V486.62H579.0ZM580.0 456.19H581.0V486.57H580.0ZM581.0 456.28H582.0V486.82H581.0ZM582.0 455.50H583.0V487.14H582.0ZM583.0 455.50H584.0V485.73H583.0ZM584.0 455.50H585.0V485.40H584.0ZM585.0 456.43H586.0V486.70H585.0ZM586.0 456.28H587.0V486.14H586.0ZM587.0 456.12H588.0V485.48H587.0ZM588.0 456.21H589.0V486.68H588.0ZM589.0 456.30H590.0V485.23H589.0ZM590.0 455.29H591.0V485.46H590.0ZM591.0 456.49H592.0V485.37H591.0ZM592.0 456.02H593.0V486.43H592.0ZM593.0 456.65H594.0V485.05H593.0ZM594.0 455.58H595.0V486.38H594.0ZM595.0 455.76H596.0V485.83H595.0ZM596.0 455.39H597.0V485.56H596.0ZM597.0 455.52H598.0V485.44H597.0ZM598.0 455.86H599.0V486.04H598.0ZM599.0 455.99H600.0V484.75H599.0ZM600.0 456.65H601.0V486.03H600.0ZM601.0 455.82H602.0V485.71H601.0ZM602.0 456.15H603.0V484.64H602.0ZM603.0 456.61H604.0V484.90H603.0ZM604.0 455.87H605.0V484.44H604.0ZM605.0 455.12H606.0V484.53H605.0ZM606.0 455.28H607.0V484.72H606.0ZM607.0 456.47H608.0V484.92H607.0ZM608.0 456.39H609.0V484.54H608.0ZM609.0 456.25H610.0V485.41H609.0ZM610.0 455.75H611.0V485.46H610.0ZM611.0 456.27H612.0V485.11H611.0ZM612.0 454.92H613.0V484.97H612.0ZM613.0 455.89H614.0V484.97H613.0ZM614.0 454.74H615.0V483.71H614.0ZM615.0 454.64H616.0V485.16H615.0ZM616.0 454.92H617.0V483.90H616.0ZM617.0 456.06H618.0V484.78H617.0ZM618.0 455.30H619.0V484.64H618.0ZM619.0 455.55H620.0V484.92H619.0ZM620.0 455.66H621.0V484.23H620.0ZM621.0 454.91H622.0V484.36H621.0ZM622.0 454.90H623.0V484.22H622.0ZM623.0 475.00H624.0V483.38H623.0ZM624.0 458.60H625.0V484.42H624.0ZM625.0 458.60H626.0V484.17H625.0ZM626.0 455.30H627.0V484.36H626.0ZM627.0 455.98H628.0V484.29H627.0ZM628.0 455.44H629.0V484.34H628.0ZM629.0 456.21H630.0V484.68H629.0ZM630.0 455.12H631.0V485.00H630.0ZM631.0 455.03H632.0V483.26H631.0ZM632.0 456.42H633.0V483.67H632.0ZM633.0 456.39H634.0V484.91H633.0ZM634.0 455.14H635.0V484.12H634.0ZM635.0 456.17H636.0V484.15H635.0ZM636.0 455.51H637.0V484.89H636.0ZM637.0 456.31H638.0V484.25H637.0ZM638.0 455.88H639.0V483.23H638.0ZM639.0 456.76H640.0V484.49H639.0ZM640.0 455.15H641.0V483.33H640.0ZM641.0 455.44H642.0V483.93H641.0ZM642.0 455.33H643.0V484.49H642.0ZM643.0 454.31H644.0V483.97H643.0ZM644.0 453.81H645.0V484.62H644.0ZM645.0 460.00H646.0V484.53H645.0ZM646.0 460.00H647.0V483.20H646.0ZM647.0 460.00H648.0V483.24H647.0ZM648.0 460.00H649.0V483.56H648.0ZM649.0 460.00H650.0V484.02H649.0ZM650.0 460.00H651.0V483.47H650.0ZM651.0 460.00H652.0V484.25H651.0ZM652.0 460.00H653.0V484.17H652.0ZM653.0 460.00H654.0V482.89H653.0ZM654.0 460.00H655.0V483.34H654.0ZM655.0 448.64H656.0V483.23H655.0ZM656.0 448.25H657.0V483.27H656.0ZM657.0 448.41H658.0V483.63H657.0ZM658.0 449.89H659.0V483.57H658.0ZM659.0 451.20H660.0V483.43H659.0ZM660.0 450.92H661.0V484.39H660.0ZM661.0 452.59H662.0V483.94H661.0ZM662.0 452.93H663.0V482.69H662.0ZM663.0 452.08H664.0V483.18H663.0ZM664.0 452.25H665.0V483.27H664.0ZM665.0 450.00H666.0V483.08H665.0ZM666.0 450.00H667.0V483.65H666.0ZM667.0 450.00H668.0V484.04H667.0ZM668.0 451.23H669.0V483.47H668.0ZM669.0 451.70H670.0V482.92H669.0ZM670.0 451.28H671.0V483.14H670.0ZM671.0 451.64H672.0V484.07H671.0ZM672.0 451.99H673.0V484.12H672.0ZM673.0 452.71H674.0V483.86H673.0ZM674.0 451.76H675.0V482.77H674.0ZM675.0 451.99H676.0V484.12H675.0ZM676.0 452.56H677.0V482.76H676.0ZM677.0 452.41H678.0V483.44H677.0ZM678.0 453.79H678.3V482.93H678.0Z" fill="#00f200" shape-rendering="crispEdges"/><path d="M120.0 419.15H121.0V464.03H120.0ZM121.0 419.81H122.0V463.99H121.0ZM122.0 419.12H123.0V464.62H122.0ZM123.0 420.13H124.0V464.07H123.0ZM124.0 419.54H125.0V464.38H124.0ZM125.0 418.92H126.0V465.03H125.0ZM126.0 419.38H127.0V449.50H126.0ZM127.0 419.81H128.0V449.50H127.0ZM128.0 418.60H129.0V449.50H128.0ZM129.0 419.36H130.0V449.50H129.0ZM130.0 419.46H131.0V449.50H130.0ZM131.0 419.55H132.0V449.50H131.0ZM132.0 419.73H133.0V449.50H132.0ZM133.0 418.45H134.0V449.50H133.0ZM134.0 419.64H135.0V449.50H134.0ZM135.0 418.81H136.0V449.50H135.0ZM136.0 419.71H137.0V465.00H136.0ZM137.0 420.11H138.0V465.63H137.0ZM138.0 419.82H139.0V465.36H138.0ZM139.0 419.87H140.0V465.30H139.0ZM140.0 419.53H141.0V465.98H140.0ZM141.0 424.68H142.0V466.42H141.0ZM142.0 425.97H143.0V466.19H142.0ZM143.0 425.53H144.0V466.03H143.0ZM144.0 424.58H145.0V466.34H144.0ZM145.0 425.60H146.0V466.94H145.0ZM146.0 424.25H147.0V466.84H146.0ZM147.0 424.48H148.0V466.75H147.0ZM148.0 425.29H149.0V467.70H148.0ZM149.0 425.62H150.0V467.74H149.0ZM150.0 426.03H151.0V467.24H150.0ZM151.0 425.85H152.0V467.94H151.0ZM152.0 424.39H153.0V468.30H152.0ZM153.0 425.73H154.0V468.56H153.0ZM154.0 417.63H155.0V467.99H154.0ZM155.0 417.61H156.0V468.40H155.0ZM156.0 417.18H157.0V468.91H156.0ZM157.0 416.50H158.0V469.14H157.0ZM158.0 417.07H159.0V469.29H158.0ZM159.0 417.33H160.0V469.80H159.0ZM160.0 416.97H161.0V469.55H160.0ZM161.0 416.66H162.0V469.88H161.0ZM162.0 415.92H163.0V469.81H162.0ZM163.0 416.15H164.0V469.85H163.0ZM164.0 416.05H165.0V469.61H164.0ZM165.0 415.83H166.0V469.83H165.0ZM166.0 416.15H167.0V470.40H166.0ZM167.0 415.93H168.0V450.50H167.0ZM168.0 415.81H169.0V450.50H168.0ZM169.0 415.80H170.0V450.50H169.0ZM170.0 415.88H171.0V450.50H170.0ZM171.0 415.58H172.0V450.50H171.0ZM172.0 415.93H173.0V450.50H172.0ZM173.0 415.84H174.0V450.50H173.0ZM174.0 414.85H175.0V450.50H174.0ZM175.0 416.00H176.0V450.50H175.0ZM176.0 415.17H177.0V450.50H176.0ZM177.0 415.19H178.0V450.50H177.0ZM178.0 414.91H179.0V450.50H178.0ZM179.0 414.73H180.0V450.50H179.0ZM180.0 414.80H181.0V450.50H180.0ZM181.0 415.23H182.0V450.50H181.0ZM182.0 413.94H183.0V450.50H182.0ZM183.0 414.03H184.0V450.50H183.0ZM184.0 414.28H185.0V450.50H184.0ZM185.0 415.09H186.0V450.50H185.0ZM186.0 414.81H187.0V450.50H186.0ZM187.0 414.05H188.0V471.66H187.0ZM188.0 414.45H189.0V471.24H188.0ZM189.0 414.37H190.0V471.44H189.0ZM190.0 413.37H191.0V471.45H190.0ZM191.0 413.47H192.0V471.04H191.0ZM192.0 437.19H193.0V471.26H192.0ZM193.0 436.88H194.0V471.35H193.0ZM194.0 437.26H195.0V471.20H194.0ZM195.0 438.01H196.0V471.27H195.0ZM196.0 436.85H197.0V471.74H196.0ZM197.0 436.85H198.0V471.58H197.0ZM198.0 438.28H199.0V471.84H198.0ZM199.0 437.91H200.0V471.45H199.0ZM200.0 437.44H201.0V471.46H200.0ZM201.0 439.14H202.0V471.52H201.0ZM202.0 437.49H203.0V471.90H202.0ZM203.0 437.38H204.0V472.34H203.0ZM204.0 438.17H205.0V472.34H204.0ZM205.0 434.66H206.0V472.28H205.0ZM206.0 433.19H207.0V472.10H206.0ZM207.0 433.77H208.0V472.28H207.0ZM208.0 432.74H209.0V471.88H208.0ZM209.0 434.36H210.0V471.75H209.0ZM210.0 433.02H211.0V472.20H210.0ZM211.0 432.38H212.0V471.95H211.0ZM212.0 433.40H213.0V472.69H212.0ZM213.0 433.91H214.0V472.67H213.0ZM214.0 433.15H215.0V472.29H214.0ZM215.0 432.92H216.0V472.07H215.0ZM216.0 432.60H217.0V472.51H216.0ZM217.0 434.09H218.0V472.94H217.0ZM218.0 435.05H219.0V473.08H218.0ZM219.0 436.65H220.0V472.32H219.0ZM220.0 436.05H221.0V473.16H220.0ZM221.0 436.78H222.0V472.55H221.0ZM222.0 437.19H223.0V472.84H222.0ZM223.0 436.12H224.0V472.92H223.0ZM224.0 435.76H225.0V472.57H224.0ZM225.0 435.85H226.0V473.06H225.0ZM226.0 411.46H227.0V473.35H226.0ZM227.0 411.93H228.0V472.86H227.0ZM228.0 410.45H229.0V473.21H228.0ZM229.0 410.70H230.0V448.70H229.0ZM230.0 409.86H231.0V448.70H230.0ZM231.0 410.42H232.0V448.70H231.0ZM232.0 409.80H233.0V448.70H232.0ZM233.0 410.94H234.0V448.70H233.0ZM234.0 410.68H235.0V448.70H234.0ZM235.0 411.11H236.0V448.70H235.0ZM236.0 410.25H237.0V448.70H236.0ZM237.0 409.61H238.0V448.70H237.0ZM238.0 409.44H239.0V448.70H238.0ZM239.0 409.95H240.0V448.70H239.0ZM240.0 409.18H241.0V448.70H240.0ZM241.0 409.39H242.0V448.70H241.0ZM242.0 410.25H243.0V448.70H242.0ZM243.0 409.60H244.0V448.70H243.0ZM244.0 409.27H245.0V448.70H244.0ZM245.0 408.73H246.0V448.70H245.0ZM246.0 410.00H247.0V448.70H246.0ZM247.0 408.98H248.0V448.70H247.0ZM248.0 408.74H249.0V448.70H248.0ZM249.0 409.21H250.0V448.70H249.0ZM250.0 409.52H251.0V448.70H250.0ZM251.0 409.49H252.0V448.70H251.0ZM252.0 409.42H253.0V448.70H252.0ZM253.0 409.41H254.0V473.46H253.0ZM254.0 409.13H255.0V473.04H254.0ZM255.0 409.86H256.0V453.70H255.0ZM256.0 409.25H257.0V453.70H256.0ZM257.0 409.89H258.0V453.70H257.0ZM258.0 408.69H259.0V453.70H258.0ZM259.0 409.39H260.0V453.70H259.0ZM260.0 410.46H261.0V453.70H260.0ZM261.0 409.70H262.0V453.70H261.0ZM262.0 408.96H263.0V453.70H262.0ZM263.0 409.29H264.0V453.70H263.0ZM264.0 410.22H265.0V453.70H264.0ZM265.0 409.01H266.0V455.38H265.0ZM266.0 410.36H267.0V473.71H266.0ZM267.0 409.12H268.0V473.49H267.0ZM268.0 409.25H269.0V472.94H268.0ZM269.0 410.28H270.0V472.90H269.0ZM270.0 409.81H271.0V454.30H270.0ZM271.0 408.91H272.0V454.30H271.0ZM272.0 409.08H273.0V454.30H272.0ZM273.0 409.19H274.0V454.30H273.0ZM274.0 409.01H275.0V454.30H274.0ZM275.0 408.62H276.0V454.30H275.0ZM276.0 409.25H277.0V473.10H276.0ZM277.0 410.39H278.0V473.38H277.0ZM278.0 409.32H279.0V473.65H278.0ZM279.0 409.13H280.0V473.42H279.0ZM280.0 410.30H281.0V473.87H280.0ZM281.0 409.88H282.0V472.96H281.0ZM282.0 409.71H283.0V455.00H282.0ZM283.0 408.98H284.0V455.00H283.0ZM284.0 409.85H285.0V455.00H284.0ZM285.0 409.79H286.0V455.00H285.0ZM286.0 409.85H287.0V455.00H286.0ZM287.0 410.30H288.0V455.00H287.0ZM288.0 409.25H289.0V473.75H288.0ZM289.0 409.50H290.0V473.66H289.0ZM290.0 409.78H291.0V473.54H290.0ZM291.0 408.67H292.0V473.23H291.0ZM292.0 409.44H293.0V455.50H292.0ZM293.0 409.53H294.0V455.50H293.0ZM294.0 408.86H295.0V455.50H294.0ZM295.0 408.45H296.0V455.50H295.0ZM296.0 408.97H297.0V455.50H296.0ZM297.0 408.95H298.0V455.50H297.0ZM298.0 409.26H299.0V455.50H298.0ZM299.0 409.01H300.0V455.50H299.0ZM300.0 409.74H301.0V455.50H300.0ZM301.0 409.75H302.0V455.50H301.0ZM302.0 408.89H303.0V455.50H302.0ZM303.0 409.14H304.0V473.42H303.0ZM304.0 409.28H305.0V473.46H304.0ZM305.0 409.54H306.0V473.45H305.0ZM306.0 409.67H307.0V473.48H306.0ZM307.0 408.87H308.0V473.33H307.0ZM308.0 408.84H309.0V473.83H308.0ZM309.0 409.09H310.0V473.87H309.0ZM310.0 408.42H311.0V454.71H310.0ZM311.0 408.30H312.0V473.60H311.0ZM312.0 408.89H313.0V474.26H312.0ZM313.0 408.31H314.0V474.14H313.0ZM314.0 408.79H315.0V455.49H314.0ZM315.0 407.73H316.0V455.40H315.0ZM316.0 408.73H317.0V473.66H316.0ZM317.0 408.69H318.0V474.17H317.0ZM318.0 408.89H319.0V473.94H318.0ZM319.0 408.02H320.0V473.85H319.0ZM320.0 408.33H321.0V474.08H320.0ZM321.0 408.37H322.0V474.25H321.0ZM322.0 408.63H323.0V473.76H322.0ZM323.0 408.36H324.0V474.45H323.0ZM324.0 409.22H325.0V474.42H324.0ZM325.0 408.81H326.0V474.39H325.0ZM326.0 408.32H327.0V473.59H326.0ZM327.0 408.16H328.0V454.49H327.0ZM328.0 408.94H329.0V474.02H328.0ZM329.0 407.77H330.0V474.47H329.0ZM330.0 407.45H331.0V455.00H330.0ZM331.0 408.61H332.0V455.00H331.0ZM332.0 408.11H333.0V455.00H332.0ZM333.0 408.62H334.0V455.00H333.0ZM334.0 407.50H335.0V455.00H334.0ZM335.0 407.21H336.0V455.00H335.0ZM336.0 407.70H337.0V455.00H336.0ZM337.0 408.31H338.0V455.00H337.0ZM338.0 408.16H339.0V474.53H338.0ZM339.0 408.85H340.0V453.18H339.0ZM340.0 408.48H341.0V473.83H340.0ZM341.0 408.54H342.0V450.50H341.0ZM342.0 407.78H343.0V450.50H342.0ZM343.0 407.68H344.0V450.50H343.0ZM344.0 407.27H345.0V450.50H344.0ZM345.0 408.60H346.0V450.50H345.0ZM346.0 408.00H347.0V450.50H346.0ZM347.0 407.10H348.0V450.50H347.0ZM348.0 407.11H349.0V450.50H348.0ZM349.0 408.82H350.0V450.50H349.0ZM350.0 407.36H351.0V450.50H350.0ZM351.0 408.27H352.0V450.50H351.0ZM352.0 407.32H353.0V450.50H352.0ZM353.0 407.96H354.0V450.50H353.0ZM354.0 407.20H355.0V450.50H354.0ZM355.0 407.50H356.0V450.50H355.0ZM356.0 407.20H357.0V450.50H356.0ZM357.0 407.02H358.0V450.50H357.0ZM358.0 407.44H359.0V450.50H358.0ZM359.0 407.54H360.0V453.74H359.0ZM360.0 407.46H361.0V474.38H360.0ZM361.0 407.62H362.0V474.92H361.0ZM362.0 406.73H363.0V454.27H362.0ZM363.0 408.32H364.0V474.65H363.0ZM364.0 407.63H365.0V454.63H364.0ZM365.0 407.15H366.0V474.75H365.0ZM366.0 406.66H367.0V453.79H366.0ZM367.0 406.67H368.0V452.40H367.0ZM368.0 407.12H369.0V452.40H368.0ZM369.0 408.03H370.0V452.40H369.0ZM370.0 407.49H371.0V452.40H370.0ZM371.0 406.88H372.0V452.40H371.0ZM372.0 406.86H373.0V452.40H372.0ZM373.0 407.16H374.0V452.40H373.0ZM374.0 406.61H375.0V452.40H374.0ZM375.0 433.09H376.0V474.72H375.0ZM376.0 432.73H377.0V454.34H376.0ZM377.0 432.37H378.0V455.02H377.0ZM378.0 433.59H379.0V474.63H378.0ZM379.0 434.08H380.0V475.17H379.0ZM380.0 433.43H381.0V475.09H380.0ZM381.0 434.86H382.0V475.23H381.0ZM382.0 406.66H383.0V455.28H382.0ZM383.0 407.22H384.0V474.91H383.0ZM384.0 407.31H385.0V454.62H384.0ZM385.0 406.35H386.0V474.72H385.0ZM386.0 406.27H387.0V455.54H386.0ZM387.0 406.66H388.0V474.88H387.0ZM388.0 407.21H389.0V446.20H388.0ZM389.0 406.47H390.0V446.20H389.0ZM390.0 407.97H391.0V446.20H390.0ZM391.0 407.98H392.0V446.20H391.0ZM392.0 406.06H393.0V446.20H392.0ZM393.0 406.08H394.0V446.20H393.0ZM394.0 407.19H395.0V446.20H394.0ZM395.0 406.27H396.0V446.20H395.0ZM396.0 406.94H397.0V446.20H396.0ZM397.0 407.45H398.0V446.20H397.0ZM398.0 407.01H399.0V446.20H398.0ZM399.0 406.33H400.0V446.20H399.0ZM400.0 405.99H401.0V446.20H400.0ZM401.0 407.26H402.0V446.20H401.0ZM402.0 407.01H403.0V475.36H402.0ZM403.0 439.23H404.0V474.95H403.0ZM404.0 438.99H405.0V453.81H404.0ZM405.0 439.04H406.0V474.73H405.0ZM406.0 438.82H407.0V475.26H406.0ZM407.0 439.51H408.0V475.49H407.0ZM408.0 439.24H409.0V474.50H408.0ZM409.0 439.84H410.0V475.41H409.0ZM410.0 439.59H411.0V475.02H410.0ZM411.0 439.69H412.0V474.78H411.0ZM412.0 439.42H413.0V453.55H412.0ZM413.0 407.25H414.0V475.25H413.0ZM414.0 406.54H415.0V474.58H414.0ZM415.0 406.41H416.0V475.43H415.0ZM416.0 407.29H417.0V474.99H416.0ZM417.0 406.02H418.0V454.59H417.0ZM418.0 407.89H419.0V474.68H418.0ZM419.0 433.03H420.0V475.24H419.0ZM420.0 431.74H421.0V474.82H420.0ZM421.0 432.92H422.0V454.24H421.0ZM422.0 431.58H423.0V475.48H422.0ZM423.0 430.99H424.0V474.90H423.0ZM424.0 431.96H425.0V474.57H424.0ZM425.0 431.76H426.0V475.42H425.0ZM426.0 431.16H427.0V475.32H426.0ZM427.0 432.82H428.0V475.43H427.0ZM428.0 430.88H429.0V475.21H428.0ZM429.0 432.86H430.0V474.52H429.0ZM430.0 431.17H431.0V475.29H430.0ZM431.0 406.93H432.0V453.45H431.0ZM432.0 407.64H433.0V453.27H432.0ZM433.0 407.14H434.0V474.77H433.0ZM434.0 406.32H435.0V475.25H434.0ZM435.0 407.99H436.0V474.80H435.0ZM436.0 407.14H437.0V474.57H436.0ZM437.0 407.17H438.0V475.21H437.0ZM438.0 437.26H439.0V475.15H438.0ZM439.0 437.79H440.0V475.32H439.0ZM440.0 436.98H441.0V475.06H440.0ZM441.0 437.09H442.0V475.09H441.0ZM442.0 437.11H443.0V475.02H442.0ZM443.0 437.33H444.0V475.39H443.0ZM444.0 436.23H445.0V453.56H444.0ZM445.0 437.30H446.0V474.58H445.0ZM446.0 406.94H447.0V475.36H446.0ZM447.0 406.26H448.0V453.27H447.0ZM448.0 407.49H449.0V475.44H448.0ZM449.0 407.79H450.0V475.33H449.0ZM450.0 406.60H451.0V474.86H450.0ZM451.0 406.78H452.0V475.36H451.0ZM452.0 407.02H453.0V454.67H452.0ZM453.0 435.53H454.0V475.24H453.0ZM454.0 436.77H455.0V474.64H454.0ZM455.0 406.88H456.0V474.73H455.0ZM456.0 407.13H457.0V446.20H456.0ZM457.0 407.64H458.0V446.20H457.0ZM458.0 408.04H459.0V446.20H458.0ZM459.0 408.13H460.0V446.20H459.0ZM460.0 407.64H461.0V446.20H460.0ZM461.0 407.16H462.0V446.20H461.0ZM462.0 407.58H463.0V446.20H462.0ZM463.0 407.71H464.0V446.20H463.0ZM464.0 406.79H465.0V446.20H464.0ZM465.0 407.14H466.0V446.20H465.0ZM466.0 406.88H467.0V446.20H466.0ZM467.0 407.76H468.0V475.27H467.0ZM468.0 407.48H469.0V474.63H468.0ZM469.0 430.40H470.0V475.47H469.0ZM470.0 430.05H471.0V453.15H470.0ZM471.0 407.76H472.0V474.62H471.0ZM472.0 429.12H473.0V475.44H472.0ZM473.0 429.47H474.0V474.70H473.0ZM474.0 428.36H475.0V475.33H474.0ZM475.0 430.32H476.0V454.08H475.0ZM476.0 406.90H477.0V474.87H476.0ZM477.0 427.03H478.0V454.07H477.0ZM478.0 428.23H479.0V475.08H478.0ZM479.0 426.97H480.0V475.10H479.0ZM480.0 427.33H481.0V475.15H480.0ZM481.0 428.58H482.0V475.24H481.0ZM482.0 407.29H483.0V475.45H482.0ZM483.0 407.77H484.0V474.71H483.0ZM484.0 407.94H485.0V455.83H484.0ZM485.0 407.49H486.0V475.16H485.0ZM486.0 407.63H487.0V447.00H486.0ZM487.0 407.83H488.0V447.00H487.0ZM488.0 408.71H489.0V447.00H488.0ZM489.0 408.54H490.0V447.00H489.0ZM490.0 406.64H491.0V447.00H490.0ZM491.0 408.02H492.0V447.00H491.0ZM492.0 408.15H493.0V447.00H492.0ZM493.0 407.72H494.0V447.00H493.0ZM494.0 408.57H495.0V475.16H494.0ZM495.0 407.67H496.0V475.12H495.0ZM496.0 407.01H497.0V475.00H496.0ZM497.0 407.50H498.0V475.23H497.0ZM498.0 408.37H499.0V475.28H498.0ZM499.0 407.74H500.0V474.77H499.0ZM500.0 408.20H501.0V474.63H500.0ZM501.0 408.80H502.0V475.02H501.0ZM502.0 408.64H503.0V474.90H502.0ZM503.0 407.63H504.0V453.73H503.0ZM504.0 407.89H505.0V474.84H504.0ZM505.0 408.53H506.0V475.09H505.0ZM506.0 408.13H507.0V475.47H506.0ZM507.0 408.01H508.0V446.00H507.0ZM508.0 407.53H509.0V446.00H508.0ZM509.0 407.31H510.0V446.00H509.0ZM510.0 407.64H511.0V446.00H510.0ZM511.0 408.06H512.0V446.00H511.0ZM512.0 407.72H513.0V475.00H512.0ZM513.0 408.82H514.0V446.00H513.0ZM514.0 408.04H515.0V446.00H514.0ZM515.0 407.86H516.0V453.10H515.0ZM516.0 407.32H517.0V452.03H516.0ZM517.0 407.64H518.0V451.89H517.0ZM518.0 407.70H519.0V446.20H518.0ZM519.0 407.92H520.0V446.20H519.0ZM520.0 408.22H521.0V446.20H520.0ZM521.0 407.44H522.0V446.20H521.0ZM522.0 408.39H523.0V446.20H522.0ZM523.0 408.34H524.0V446.20H523.0ZM524.0 409.12H525.0V446.20H524.0ZM525.0 408.05H526.0V446.20H525.0ZM526.0 408.71H527.0V451.87H526.0ZM527.0 407.80H528.0V452.51H527.0ZM528.0 409.08H529.0V453.03H528.0ZM529.0 408.64H530.0V475.00H529.0ZM530.0 407.34H531.0V451.91H530.0ZM531.0 408.37H532.0V452.28H531.0ZM532.0 407.53H533.0V453.08H532.0ZM533.0 409.24H534.0V453.13H533.0ZM534.0 407.95H535.0V446.00H534.0ZM535.0 407.46H536.0V446.00H535.0ZM536.0 408.81H537.0V446.00H536.0ZM537.0 407.65H538.0V446.00H537.0ZM538.0 408.41H539.0V475.00H538.0ZM539.0 408.55H540.0V446.00H539.0ZM540.0 408.91H541.0V446.00H540.0ZM541.0 408.29H542.0V446.00H541.0ZM542.0 408.68H543.0V446.00H542.0ZM543.0 408.49H544.0V446.00H543.0ZM544.0 408.54H545.0V453.05H544.0ZM545.0 407.60H546.0V453.37H545.0ZM546.0 407.97H547.0V475.00H546.0ZM547.0 408.93H548.0V452.81H547.0ZM548.0 408.16H549.0V453.53H548.0ZM549.0 408.50H550.0V454.19H549.0ZM550.0 408.33H551.0V454.61H550.0ZM551.0 408.52H552.0V454.28H551.0ZM552.0 407.85H553.0V454.79H552.0ZM553.0 407.64H554.0V455.44H553.0ZM554.0 408.51H555.0V455.47H554.0ZM555.0 407.97H556.0V455.06H555.0ZM556.0 408.59H557.0V456.16H556.0ZM557.0 408.83H558.0V455.89H557.0ZM558.0 409.17H559.0V455.56H558.0ZM559.0 408.33H560.0V455.33H559.0ZM560.0 408.33H561.0V446.00H560.0ZM561.0 407.79H562.0V446.00H561.0ZM562.0 408.65H563.0V446.00H562.0ZM563.0 408.06H564.0V446.00H563.0ZM564.0 409.07H565.0V455.59H564.0ZM565.0 407.86H566.0V455.84H565.0ZM566.0 408.47H567.0V456.21H566.0ZM567.0 409.20H568.0V445.80H567.0ZM568.0 408.27H569.0V445.80H568.0ZM569.0 408.95H570.0V445.80H569.0ZM570.0 408.86H571.0V445.80H570.0ZM571.0 408.92H572.0V445.80H571.0ZM572.0 407.98H573.0V445.80H572.0ZM573.0 408.04H574.0V445.80H573.0ZM574.0 408.73H575.0V445.80H574.0ZM575.0 409.05H576.0V456.38H575.0ZM576.0 408.14H577.0V455.11H576.0ZM577.0 408.49H578.0V447.00H577.0ZM578.0 408.78H579.0V447.00H578.0ZM579.0 409.05H580.0V456.52H579.0ZM580.0 408.80H581.0V456.19H580.0ZM581.0 408.77H582.0V456.28H581.0ZM582.0 408.22H583.0V449.00H582.0ZM583.0 408.88H584.0V449.00H583.0ZM584.0 409.10H585.0V449.00H584.0ZM585.0 407.99H586.0V456.43H585.0ZM586.0 407.72H587.0V456.28H586.0ZM587.0 409.54H588.0V456.12H587.0ZM588.0 409.15H589.0V456.21H588.0ZM589.0 409.18H590.0V456.30H589.0ZM590.0 409.53H591.0V455.29H590.0ZM591.0 407.99H592.0V456.49H591.0ZM592.0 407.75H593.0V456.02H592.0ZM593.0 408.39H594.0V456.65H593.0ZM594.0 408.42H595.0V455.58H594.0ZM595.0 408.92H596.0V455.76H595.0ZM596.0 408.23H597.0V455.39H596.0ZM597.0 409.53H598.0V455.52H597.0ZM598.0 408.95H599.0V455.86H598.0ZM599.0 408.76H600.0V455.99H599.0ZM600.0 409.14H601.0V456.65H600.0ZM601.0 409.55H602.0V455.82H601.0ZM602.0 409.02H603.0V456.15H602.0ZM603.0 408.74H604.0V456.61H603.0ZM604.0 408.90H605.0V455.87H604.0ZM605.0 408.64H606.0V455.12H605.0ZM606.0 409.19H607.0V455.28H606.0ZM607.0 409.54H608.0V456.47H607.0ZM608.0 408.38H609.0V456.39H608.0ZM609.0 408.59H610.0V456.25H609.0ZM610.0 409.17H611.0V455.75H610.0ZM611.0 408.43H612.0V456.27H611.0ZM612.0 408.95H613.0V454.92H612.0ZM613.0 407.89H614.0V455.89H613.0ZM614.0 409.15H615.0V454.74H614.0ZM615.0 408.89H616.0V454.64H615.0ZM616.0 409.56H617.0V454.92H616.0ZM617.0 408.37H618.0V456.06H617.0ZM618.0 408.54H619.0V455.30H618.0ZM619.0 409.35H620.0V455.55H619.0ZM620.0 408.43H621.0V455.66H620.0ZM621.0 409.42H622.0V454.91H621.0ZM622.0 408.34H623.0V454.90H622.0ZM623.0 409.53H624.0V475.00H623.0ZM624.0 408.64H625.0V448.00H624.0ZM625.0 409.27H626.0V448.00H625.0ZM626.0 410.19H627.0V455.30H626.0ZM627.0 409.41H628.0V455.98H627.0ZM628.0 409.76H629.0V455.44H628.0ZM629.0 409.81H630.0V456.21H629.0ZM630.0 409.99H631.0V455.12H630.0ZM631.0 409.10H632.0V455.03H631.0ZM632.0 409.92H633.0V456.42H632.0ZM633.0 408.62H634.0V456.39H633.0ZM634.0 409.78H635.0V455.14H634.0ZM635.0 409.59H636.0V456.17H635.0ZM636.0 409.12H637.0V455.51H636.0ZM637.0 409.80H638.0V456.31H637.0ZM638.0 409.92H639.0V455.88H638.0ZM639.0 409.21H640.0V456.76H639.0ZM640.0 409.79H641.0V455.15H640.0ZM641.0 409.80H642.0V455.44H641.0ZM642.0 409.69H643.0V455.33H642.0ZM643.0 410.41H644.0V454.31H643.0ZM644.0 409.72H645.0V453.81H644.0ZM645.0 409.68H646.0V456.00H645.0ZM646.0 409.64H647.0V456.00H646.0ZM647.0 409.78H648.0V456.00H647.0ZM648.0 411.06H649.0V456.00H648.0ZM649.0 409.78H650.0V456.00H649.0ZM650.0 409.92H651.0V456.00H650.0ZM651.0 410.54H652.0V456.00H651.0ZM652.0 409.85H653.0V456.00H652.0ZM653.0 410.37H654.0V456.00H653.0ZM654.0 409.39H655.0V456.00H654.0ZM655.0 410.39H656.0V448.64H655.0ZM656.0 409.86H657.0V448.25H656.0ZM657.0 410.43H658.0V448.41H657.0ZM658.0 409.33H659.0V449.89H658.0ZM659.0 409.63H660.0V451.20H659.0ZM660.0 409.54H661.0V450.92H660.0ZM661.0 410.79H662.0V452.59H661.0ZM662.0 409.96H663.0V452.93H662.0ZM663.0 410.58H664.0V452.08H663.0ZM664.0 410.86H665.0V452.25H664.0ZM665.0 410.15H666.0V446.00H665.0ZM666.0 411.59H667.0V446.00H666.0ZM667.0 411.58H668.0V446.00H667.0ZM668.0 410.66H669.0V451.23H668.0ZM669.0 411.56H670.0V451.70H669.0ZM670.0 411.09H671.0V451.28H670.0ZM671.0 410.57H672.0V451.64H671.0ZM672.0 410.67H673.0V451.99H672.0ZM673.0 411.64H674.0V452.71H673.0ZM674.0 410.44H675.0V451.76H674.0ZM675.0 411.06H676.0V451.99H675.0ZM676.0 411.23H677.0V452.56H676.0ZM677.0 410.47H678.0V452.41H677.0ZM678.0 410.81H678.3V453.79H678.0Z" fill="#0000ff" shape-rendering="crispEdges"/><path d="M75.05 442.20 L110.80 442.20" stroke="#0000ff" stroke-width="1.4" fill="none" stroke-linejoin="round" /><path d="M110.3 442L111.5 433L114 434L114.4 411L116 413L117 418L120.2 418V464L117 467.4L115.5 472L114 468L113.5 452.4L111.5 452L110.3 446Z" fill="#0000ff"/><path d="M188.8 378.4H191V475H188.8Z" fill="#0000ff"/><path d="M279.77 425.2V486.4M358.31 422.7V462.8M414.76 430.3V486.3M474.98 421.8V474.3M302.82 435.6V470.1M648.61 410.9V459.2M388.99 421.6V488.7M608.21 412.9V456.2M161.75 419.4V484.5M456.93 406.3V471.5M369.12 411.3V478.6M425.52 408.6V471.9M205.51 423.3V480.8M348.17 437.4V460.4M260.52 424.2V468.3M554.18 434.3V455.5M544.56 440.0V462.5M374.57 444.8V486.1M391.85 415.0V482.7M576.22 405.7V458.3M588.75 441.7V485.9M167.04 432.5V483.7M558.07 406.5V474.1M409.69 418.3V483.8M119.19 407.0V479.7M329.12 444.6V455.2M203.39 440.6V472.4M647.75 438.5V478.0M448.00 425.4V482.9M293.37 410.5V462.1M161.87 411.2V460.4M443.45 405.6V480.3M182.43 433.4V464.8M229.42 415.6V455.3M446.75 409.2V484.3M493.41 428.8V483.5M655.37 429.4V470.5M318.66 432.6V484.2M198.20 427.3V479.7M363.92 424.9V455.2M492.27 423.3V460.2M228.16 417.0V476.3M131.74 429.5V480.6M241.68 430.8V456.3M476.93 434.5V464.2M455.48 419.7V474.9M529.50 419.6V483.2M564.94 444.2V467.9M538.91 431.1V473.8M420.49 433.4V479.1M447.28 412.1V463.0M191.13 409.4V475.2M144.56 426.2V465.5M614.49 420.7V480.4M455.03 415.3V479.2M176.41 419.6V461.8M594.05 409.6V465.9M251.14 412.7V477.5M481.67 428.3V468.2M214.26 430.8V461.2M212.69 406.2V469.8M658.00 436.9V486.3M603.50 436.9V457.2M567.44 440.5V488.7M232.28 439.4V471.1M316.09 436.3V463.0M595.16 408.6V478.8M258.51 417.2V455.4M293.56 430.9V480.7M129.22 424.2V482.4M561.45 436.3V480.6M570.80 430.7V479.0M427.32 414.0V461.9M491.28 405.0V468.0M146.22 439.6V471.4M542.33 440.5V483.8M428.89 439.7V457.2M615.22 412.8V467.7M536.16 410.1V460.1M634.79 436.7V456.5M385.11 409.3V480.1M524.40 426.6V487.4M305.67 418.7V467.9M324.65 440.8V484.5M162.27 426.2V464.7M341.16 418.6V480.0M389.97 441.8V481.0M187.51 430.0V479.4M656.55 424.5V463.4M346.97 434.4V486.6M343.25 410.6V479.8M364.16 430.6V472.2M177.56 424.7V473.6M611.98 407.2V474.6M166.81 413.7V458.0M472.54 417.1V459.2M426.04 427.3V475.6M134.80 441.8V457.2M462.10 413.8V473.6M628.71 429.2V484.8M257.06 433.3V467.3M626.78 431.7V473.2M223.22 407.5V488.4M305.77 436.2V470.3M123.74 410.0V486.4M394.48 440.2V468.7M567.96 418.7V485.5M291.12 437.8V466.9M624.10 427.1V486.1M424.65 438.2V479.6M519.28 440.1V486.9M369.51 424.0V484.7M362.04 428.3V479.8M452.23 415.9V474.6M474.52 423.0V482.7M325.28 435.2V485.2M413.47 408.3V469.7M598.33 438.4V486.2M169.98 418.8V467.9M177.51 421.8V473.5M316.29 423.9V470.4M152.13 413.3V458.8M419.39 415.7V456.7M202.93 435.8V458.6M605.64 409.1V468.1M470.11 419.2V456.9M368.90 413.4V481.1M409.21 435.1V482.2M623.94 440.6V467.7M454.24 430.3V487.9M645.16 441.1V456.3M406.30 442.5V456.3M251.43 411.6V467.9M598.45 443.6V474.3M146.59 421.3V462.9M425.68 408.7V487.6M604.98 432.9V470.4M233.02 425.0V477.3M318.12 426.9V480.0M494.37 428.2V488.4M605.34 408.6V486.7M169.08 406.9V487.8M478.20 417.2V460.9M203.86 439.4V484.9M263.64 416.5V472.1M129.21 431.7V459.0M148.97 418.2V468.8M195.39 442.4V488.4M282.28 427.5V462.5M146.23 443.4V476.9M232.83 430.4V458.6M583.57 427.4V463.1M599.33 438.2V481.8M464.66 435.8V479.5M514.67 432.0V469.3M309.49 438.2V465.3M267.34 428.5V466.0M287.25 433.8V484.1M509.13 421.7V488.9M140.82 436.4V475.2M231.71 416.6V485.3M540.61 439.9V469.1M332.90 423.7V468.7M418.16 422.0V480.9M294.43 426.2V465.8M368.82 412.8V464.8M322.53 444.0V457.5M578.99 444.5V483.0M192.88 412.9V464.8M515.44 434.1V459.6M232.86 434.2V477.2M292.48 414.5V485.6M433.66 438.6V485.5M364.51 411.2V469.6M602.00 408.1V483.1M655.98 412.3V474.2M658.99 412.9V472.3M477.05 435.0V464.0M571.87 431.8V483.0M306.67 411.6V457.0M649.58 419.1V465.7M255.10 437.9V485.6M315.20 435.9V487.9M434.98 413.4V464.3M225.47 424.8V481.7M664.12 424.3V488.8M472.44 421.4V482.2M333.87 444.2V468.1M269.41 434.3V481.9M298.43 431.2V456.0M568.28 417.2V483.6M201.39 437.6V459.9M257.66 430.6V463.2M539.00 440.0V468.9M525.33 434.6V486.0M297.59 430.0V483.7M524.67 420.6V477.1M606.93 428.7V475.3M155.53 408.4V468.5M437.43 426.2V457.7M534.47 408.7V459.7M575.36 406.9V466.1M324.45 437.2V487.9M193.17 425.0V458.8M615.96 439.6V471.4M420.64 429.8V468.2M191.61 443.4V487.1M217.48 437.8V460.1M630.10 432.5V469.3M301.50 411.2V463.8M562.11 412.0V482.1M426.41 430.8V458.5M607.04 414.6V468.9M669.75 443.6V455.7M373.76 426.7V483.5M669.95 430.6V464.2M483.29 424.6V483.8M536.41 426.9V461.2M256.43 427.6V473.5M557.74 442.6V458.0M606.87 438.3V477.3M530.52 405.8V469.0M215.84 416.4V465.8M283.06 423.6V470.6M480.24 428.3V483.6M357.41 421.1V483.6M546.45 418.7V455.8M492.68 438.8V473.2M203.65 425.2V475.8M657.67 419.1V486.6M363.18 425.8V470.0M563.59 422.7V465.2M654.75 426.8V476.8M225.15 410.6V474.0M275.05 423.6V476.7M247.09 415.3V455.4M668.19 443.2V466.2M470.08 437.2V487.8M513.13 417.9V480.2M142.17 440.4V475.5M599.92 424.0V469.7M327.20 419.6V456.9M594.34 431.4V472.5M360.70 424.3V467.5M488.20 440.1V480.9M422.97 436.9V476.4M273.29 416.6V461.7M366.85 409.8V461.8M675.01 443.7V456.1M318.95 407.4V487.3M237.87 407.2V467.1M138.68 411.2V483.5M369.88 435.1V480.2M181.22 432.5V470.7M598.11 414.8V462.3M269.59 429.9V480.0M344.60 408.3V487.3M443.43 442.9V473.5M324.97 406.8V478.6M305.56 419.3V481.4M438.86 433.6V457.0M531.06 415.2V457.3M312.62 442.6V477.8M413.36 429.2V485.8M382.11 416.0V456.6M300.99 408.7V476.3M246.33 436.6V487.0M185.16 416.2V480.8M647.40 424.2V464.2M280.99 415.4V483.3M327.04 416.5V473.1M426.37 418.3V468.2M334.59 419.0V485.6M352.14 411.5V458.3M265.90 405.2V465.3M154.44 405.5V472.4M316.49 443.0V471.2M551.07 425.0V472.2M667.05 439.0V469.6M404.45 431.8V464.4M607.72 410.2V489.0M194.89 439.3V477.6M561.07 421.3V458.9M472.26 406.5V480.5M274.67 415.0V465.4M218.25 415.5V480.9M435.61 441.0V457.4M518.35 420.0V464.7M614.66 423.4V468.3M227.84 425.3V482.7M250.34 413.2V480.2M613.10 426.8V460.4M130.09 427.4V481.7M261.00 417.8V470.7M225.39 419.9V477.7M192.85 440.1V483.8M606.47 406.5V462.8M570.63 409.7V460.6M611.16 444.3V465.2M664.67 439.9V477.5M119.62 440.0V478.6M675.22 412.0V469.1M318.31 434.6V455.1M646.86 436.5V468.2M444.08 436.1V461.2M123.02 420.9V465.2M329.37 441.3V479.6M467.26 432.8V460.1M266.65 439.8V465.4M594.53 428.9V478.8M473.18 412.8V469.1M632.90 442.8V457.2M373.49 407.1V459.0M677.29 406.1V461.0M489.85 436.4V480.9M172.39 430.5V456.4M488.67 410.4V467.0M602.38 434.5V488.6M429.73 428.6V476.6M354.28 431.2V468.9M226.10 420.2V465.6M448.95 408.0V468.3M339.53 438.4V463.4M523.92 426.8V479.8M293.14 443.9V466.4M587.68 414.8V462.0M621.64 429.2V455.8M587.94 428.7V475.9M173.45 437.1V482.6M616.47 432.8V477.3M172.00 414.9V472.9M578.67 427.0V481.6M542.37 408.3V481.7M155.78 409.4V458.4M433.75 440.5V477.6M449.62 415.2V476.9M422.54 430.8V470.7M301.92 425.3V471.4M543.87 435.4V483.3M294.58 423.3V461.1M392.56 415.6V471.2M382.98 421.9V459.8M670.46 443.7V474.2M594.94 416.3V476.6M508.46 429.1V485.8M223.76 438.9V467.1M495.35 428.8V457.8M527.47 416.0V469.6M487.30 419.5V486.5M246.53 407.3V459.9M661.92 430.0V474.3M622.13 432.0V455.2M375.44 416.2V480.2M257.80 441.0V458.4M129.97 407.1V458.2M602.25 428.5V470.7M664.99 408.4V463.7M131.41 420.5V471.9M311.83 432.8V487.5M307.94 439.0V484.4M385.86 418.4V475.4M316.77 429.9V464.7M201.45 428.6V477.6M316.02 420.2V471.7M615.32 406.8V483.1M338.04 440.8V484.9M132.50 408.4V469.4M422.55 429.8V466.8M627.73 409.2V481.5M398.95 420.2V471.6M663.10 436.0V456.2M382.67 435.2V479.8M251.98 435.8V459.0M590.84 433.3V481.6M231.08 441.8V470.0M459.76 428.0V487.5M201.43 405.6V463.3M609.87 406.0V476.2M151.52 418.1V457.2M519.19 412.3V473.1" stroke="#fff" stroke-width="0.45" stroke-opacity="0.4"/><path d="M226.3 405V483M228.5 405V483M252.6 404V485L255 404M514.3 403V490" stroke="#fff" stroke-width="1.4" fill="none"/><path d="M226 473L229.5 473" stroke="#0000ff" stroke-width="1.2" fill="none"/><path d="M226.5 408L229.2 482" stroke="#fff" stroke-width="1" fill="none"/></svg>
</body></html>
